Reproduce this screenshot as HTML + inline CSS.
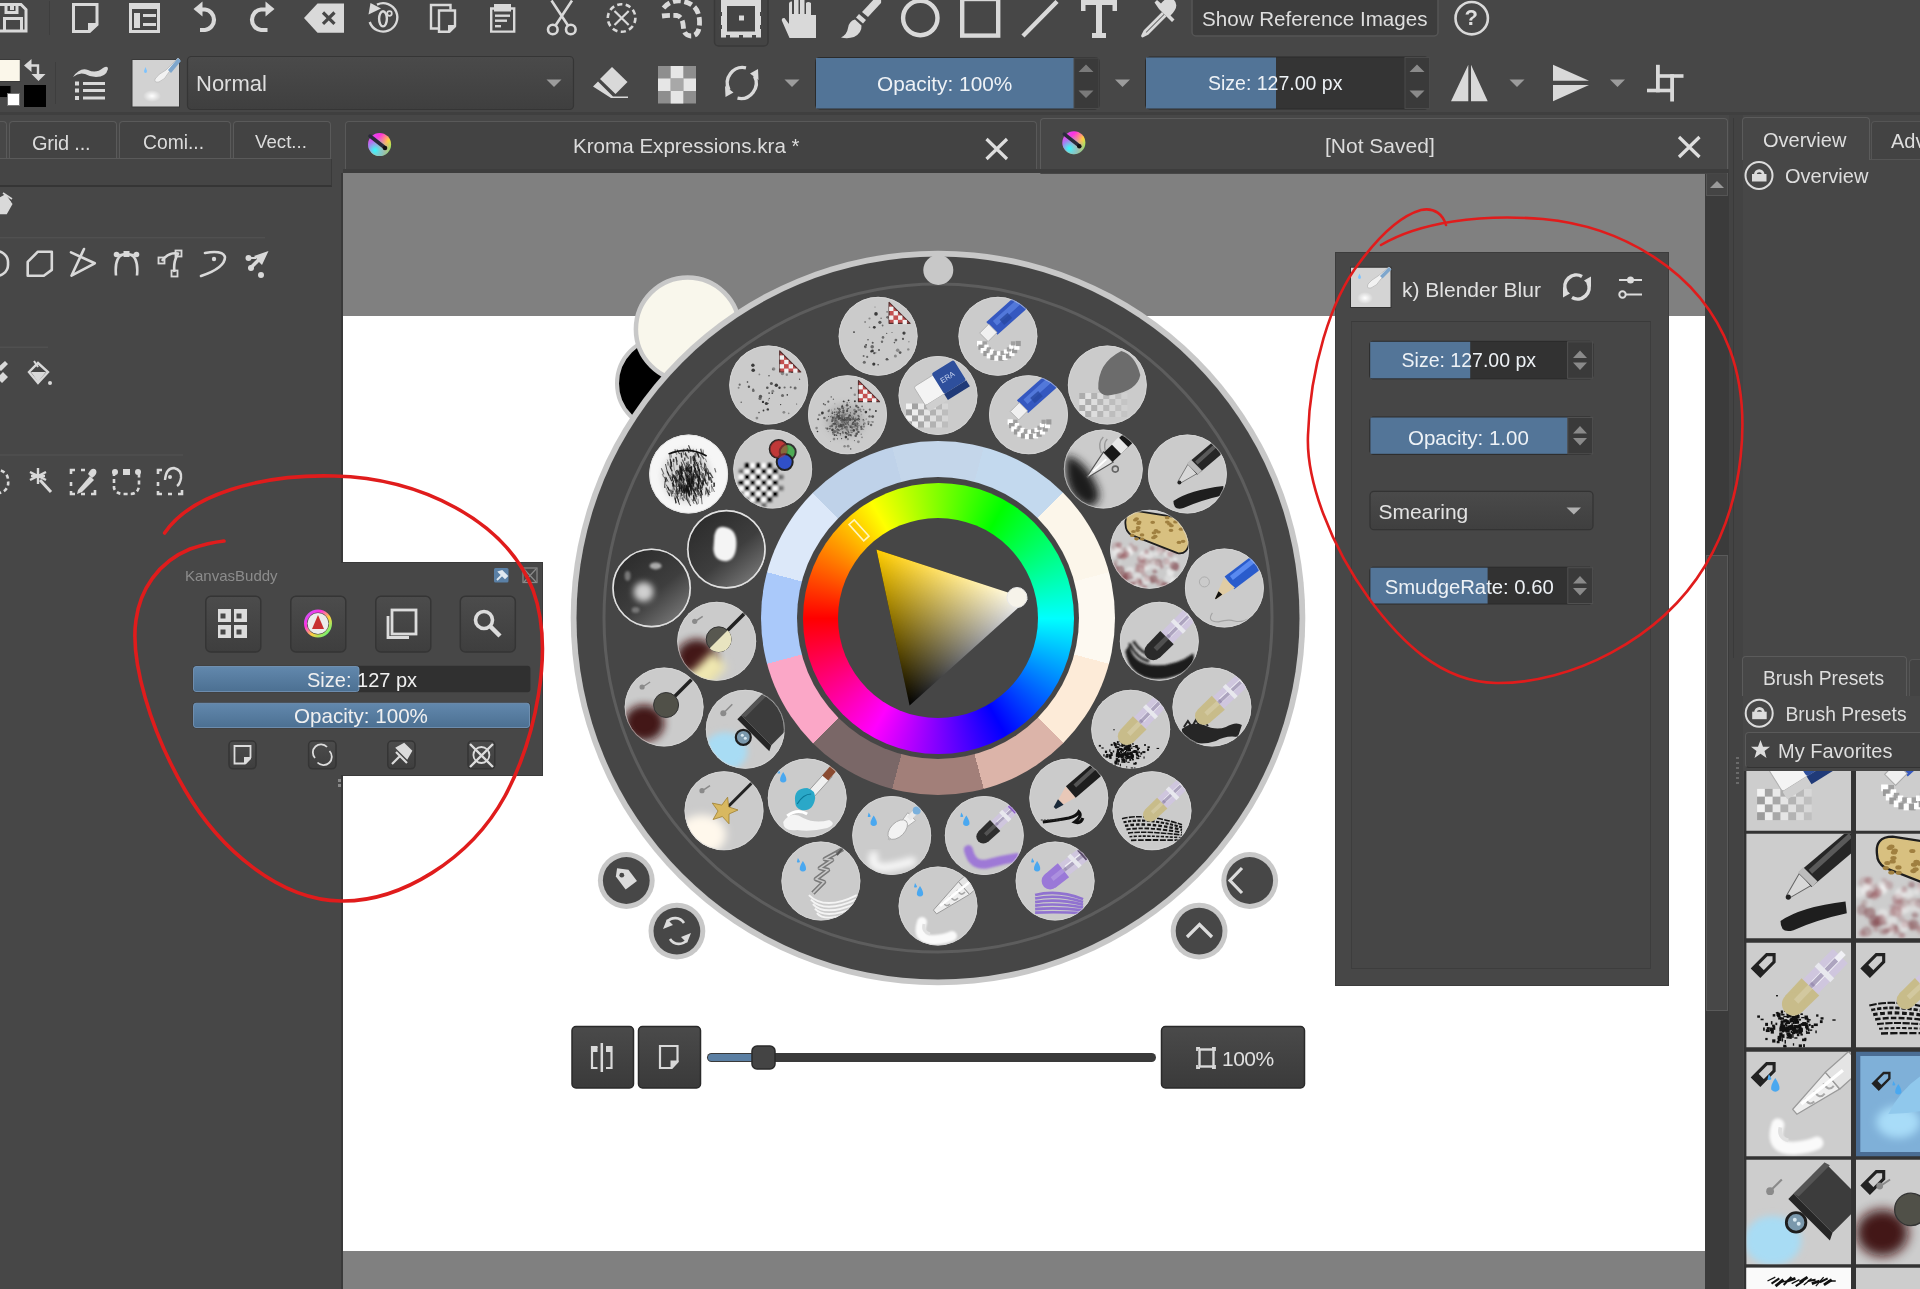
<!DOCTYPE html>
<html><head><meta charset="utf-8">
<style>
html,body{margin:0;padding:0;}
body{width:1920px;height:1289px;overflow:hidden;position:relative;background:#474747;font-family:"Liberation Sans",sans-serif;color:#dcdcdc;}
.a{position:absolute;}
svg{position:absolute;overflow:visible;}
.t{position:absolute;white-space:nowrap;font-size:20px;line-height:1;}
</style></head><body>
<!-- canvas area -->
<div class="a" style="left:343px;top:169px;width:1362px;height:5px;background:#3c3c3c"></div>
<div class="a" style="left:343px;top:173px;width:1362px;height:1116px;background:#808080"></div>
<div class="a" style="left:343px;top:316px;width:1362px;height:935px;background:#ffffff"></div>
<!-- scrollbar -->
<div class="a" style="left:1705px;top:173px;width:24px;height:1116px;background:#3b3b3b"></div>
<div class="a" style="left:1706px;top:173px;width:22px;height:23px;background:#444;border:1px solid #555;box-sizing:border-box"></div><svg class="a" style="left:1706px;top:173px" width="22" height="23"><path d="M4,15 H18 L11,8Z" fill="#9a9a9a"/></svg><div class="a" style="left:341px;top:173px;width:2px;height:1116px;background:#393939"></div>
<div class="a" style="left:1706px;top:555px;width:22px;height:456px;background:#474747;border:1px solid #5a5a5a;box-sizing:border-box"></div>


<!-- ===== TOOLBAR ROW 1 ===== -->
<svg class="a" style="left:0;top:0" width="1920" height="112" viewBox="0 0 1920 112">
<g fill="none" stroke="#d9d9d9" stroke-width="3" stroke-linejoin="miter">
 <!-- save -->
 <path d="M-4,4.5 H21 L26,9.5 V31 H-4"/>
 <path d="M6,4.5 V12.5 H17 V4.5" /><rect x="10" y="6" width="4" height="4" fill="#d9d9d9" stroke="none"/>
 <path d="M4.5,31 V18.5 H21.5 V31"/>
 <!-- new doc -->
 <path d="M73.5,4.5 H97 V24.5 L89.5,31.5 H73.5 Z"/>
</g>
<path d="M97.5,23 L97.5,25 L90,32.5 L88,32.5 L88,23 Z" fill="#d9d9d9"/>
<line x1="49.5" y1="1" x2="49.5" y2="35" stroke="#3e3e3e" stroke-width="1"/>
<g fill="#d9d9d9">
 <!-- template -->
 <path d="M129,3 H160 V33 H129 Z M132,9 V30 H157 V9 Z" fill-rule="evenodd"/>
 <rect x="134" y="13" width="6" height="15"/>
 <rect x="143" y="14" width="13" height="3"/><rect x="143" y="23" width="13" height="3"/>
</g>
<g fill="none" stroke="#d9d9d9" stroke-width="4.2">
 <!-- undo -->
 <path d="M199,9.5 H205 A10,10.3 0 0 1 205,30 H200"/>
 <!-- redo -->
 <path d="M268,9.5 H261 A10,10.3 0 0 0 261,30 H267.5"/>
</g>
<path d="M193.5,9 L202.5,1.5 V16.5 Z" fill="#d9d9d9"/>
<path d="M274.5,9 L265.5,1.5 V16.5 Z" fill="#d9d9d9"/>
<!-- delete -->
<path d="M304,18 L317.5,3.5 H344 V32.8 H317.5 Z" fill="#d9d9d9"/>
<path d="M323,12.5 L334.5,23.8 M334.5,12.5 L323,23.8" stroke="#474747" stroke-width="3.2"/>
<!-- reset rotation -->
<g fill="none" stroke="#d9d9d9" stroke-width="2.4">
 <path d="M377,4.6 A14.2,14.2 0 1 1 369.7,22"/>
 <ellipse cx="383" cy="18.8" rx="3.9" ry="7.6" stroke-width="2.4"/>
 <circle cx="389.5" cy="13.5" r="2.3" stroke-width="1.7"/>
</g>
<path d="M368.5,14.5 L370.5,3 L381,8.5 Z" fill="#d9d9d9"/>
<!-- copy -->
<g fill="none" stroke="#d9d9d9" stroke-width="2.4">
 <path d="M438,28.5 H431 V5 H450.5 V9.5"/>
 <path d="M439,10.5 H455 V26 L449,31.8 H439 Z"/>
</g>
<path d="M455.8,25 V27 L450,32.8 H448 V25 Z" fill="#d9d9d9"/>
<!-- paste -->
<g fill="none" stroke="#d9d9d9" stroke-width="2.4">
 <path d="M494,8.5 H491.2 V31.6 H514.2 V8.5 H511"/>
</g>
<g fill="#d9d9d9">
 <rect x="494" y="4" width="17" height="7.5"/>
 <rect x="495" y="14.5" width="15" height="2.4"/><rect x="495" y="19.5" width="12" height="2.4"/><rect x="495" y="25" width="6" height="2.4"/>
</g>
<!-- cut -->
<g fill="none" stroke="#d9d9d9" stroke-width="2.6">
 <circle cx="552.8" cy="29.5" r="4.8"/><circle cx="570.8" cy="29.5" r="4.8"/>
 <path d="M555.5,25.5 L572,0.5 M568,25.5 L551.5,0.5"/>
</g>
<!-- deselect -->
<g fill="none" stroke="#d9d9d9" stroke-width="2.6">
 <circle cx="621.6" cy="18" r="13.8" stroke-dasharray="5.2 3.4"/>
 <path d="M614.5,11 L628.7,25 M628.7,11 L614.5,25" stroke-width="2.2"/>
</g>
<!-- reselect -->
<g fill="none" stroke="#d9d9d9" stroke-width="4.8">
 <path d="M663.5,8 Q672,-1.5 684,1.5 Q699,5 699.5,21 Q700,36 691,36 Q684,35.5 683.5,28 Q683,17 677,15.5 Q670,15 662,16" stroke-dasharray="8 3.5"/>
</g>
<!-- transform (active) -->
<rect x="714.5" y="-6" width="53.5" height="52" rx="4" fill="#444" stroke="#393939" stroke-width="1.5"/>
<g fill="#d9d9d9">
 <path d="M721,0 H761 V37.5 H721 Z M727,6 V31.5 H755 V6 Z" fill-rule="evenodd"/>
 <rect x="739" y="15.5" width="5" height="5"/>
</g>
<g fill="#474747"><rect x="726" y="35" width="4" height="3"/><rect x="739" y="35" width="4" height="3"/><rect x="752" y="35" width="4" height="3"/><rect x="719" y="12" width="3" height="4"/><rect x="719" y="25" width="3" height="4"/><rect x="760" y="12" width="3" height="4"/><rect x="760" y="25" width="3" height="4"/></g>
<!-- hand -->
<path d="M789.5,38 L782,21 Q781,17.5 784.5,18 L789,24 V3.5 Q789.5,1 792,1.5 V14 H794 V-2 H798.5 V14 H800 V-2 H804.5 V14 H806 V3 Q808,1 811,3 V15 H816 V38 Z" fill="#d9d9d9"/>
<!-- brush -->
<g fill="#d9d9d9">
 <path d="M862,12 L876,-3 Q882,-4 881,3 L868,17 Z"/>
 <path d="M859,14 L866,20 L863,23.5 L856,17.5 Z"/>
 <path d="M855,19.5 L861.5,25.5 Q862,33 854,37 Q848,39 841,37.5 Q847,34.5 848,28 Q849,21 855,19.5 Z"/>
</g>
<!-- ellipse -->
<circle cx="920.3" cy="18" r="17.2" fill="none" stroke="#d9d9d9" stroke-width="4.4"/>
<!-- rect -->
<rect x="962.2" y="-1" width="36" height="36.6" fill="none" stroke="#d9d9d9" stroke-width="4.4"/>
<!-- line -->
<line x1="1024.5" y1="34.5" x2="1055.5" y2="3" stroke="#d9d9d9" stroke-width="4.4" stroke-linecap="square"/>
<!-- text -->
<path d="M1081,-1 H1117 V11 H1112.5 V5 H1102 V33 H1106 V38 H1092 V33 H1096 V5 H1085.5 V11 H1081 Z" fill="#d9d9d9"/>
<!-- eyedropper -->
<g fill="none" stroke="#d9d9d9" stroke-width="2.8" stroke-linejoin="round">
 <path d="M1163,13 L1145,31 L1142.5,36 L1147.5,33.5 L1165.5,15.5"/>
</g>
<path d="M1159,9 L1172,22 L1174.5,19.5 L1170.5,15.5 Q1180,6 1174,0 Q1168,-5 1161,3.5 L1157,0 L1154.5,2.5 Z" fill="#d9d9d9"/>
<!-- show reference images -->
<rect x="1192" y="-5" width="246" height="41" rx="4" fill="#3d3d3d" stroke="#565656" stroke-width="1.5"/>
<!-- help -->
<circle cx="1471.7" cy="18.2" r="16.2" fill="none" stroke="#d9d9d9" stroke-width="2.6"/>
</svg>
<div class="t" style="left:1202px;top:9px;font-size:20.6px;color:#dedede;letter-spacing:0px">Show Reference Images</div>
<div class="t" style="left:1464.5px;top:7px;font-size:22px;font-weight:bold;color:#dedede">?</div>


<!-- ===== TOOLBAR ROW 2 ===== -->
<svg class="a" style="left:0;top:0" width="1920" height="112" viewBox="0 0 1920 112">
 <rect x="-2" y="59.5" width="22.3" height="22" fill="#fbf7ea" stroke="#3a3a3a" stroke-width="1"/>
 <g fill="none" stroke="#d9d9d9" stroke-width="2.4"><path d="M29,65.5 H38 V75"/></g>
 <path d="M24,65.5 L31.5,59 V72 Z M31.5,74 H45.5 L38.5,81 Z" fill="#d9d9d9"/>
 <rect x="-1" y="85.5" width="12" height="12" fill="#000" stroke="#444" stroke-width="1"/>
 <rect x="7.5" y="93.5" width="12" height="12" fill="#fff" stroke="#777" stroke-width="1"/>
 <rect x="24" y="85" width="22" height="22" fill="#000"/>
 <line x1="55.5" y1="62" x2="55.5" y2="104" stroke="#3e3e3e" stroke-width="1"/>
 <path d="M73,77 Q80,67 88,70 Q96,74 103,68 Q108,65 108,69 Q106,77 96,77 Q90,77 85,74 Q79,72 73,77 Z" fill="#d9d9d9"/>
 <g fill="#d9d9d9"><rect x="75" y="81.5" width="4" height="4"/><rect x="75" y="88.5" width="4" height="4"/><rect x="75" y="96" width="4" height="4"/>
 <rect x="83" y="82" width="22" height="3"/><rect x="83" y="89" width="22" height="3"/><rect x="83" y="96.5" width="22" height="3"/></g>
 <!-- preset thumb -->
 <defs>
  <radialGradient id="blob" cx="0.5" cy="0.5" r="0.5"><stop offset="0" stop-color="#fff"/><stop offset="1" stop-color="#fff" stop-opacity="0"/></radialGradient>
  <linearGradient id="cbx" x1="0" y1="0" x2="0" y2="1"><stop offset="0" stop-color="#4a4a4a"/><stop offset="1" stop-color="#3f3f3f"/></linearGradient>
 </defs>
 <rect x="132" y="59.5" width="47.5" height="47.5" fill="#d2d2d2" stroke="#3a3a3a" stroke-width="1"/>
 <ellipse cx="152" cy="96" rx="9" ry="6" fill="url(#blob)"/>
 <path d="M155,79 Q158,74 166,70 L178,58 L180,60 L169,72 Q165,80 159,82 Q154,83 155,79 Z" fill="#f2f2f2" stroke="#b8b8b8" stroke-width="0.8"/>
 <path d="M168,70 L178,58 L181,61 L171,73 Z" fill="#7ea6cc"/>
 <path d="M144,71 L145.5,67 L147,71 Q147,73 145.5,73 Q144,73 144,71Z" fill="#7cc3ff"/>
 <!-- Normal combo -->
 <rect x="187.5" y="56.5" width="386" height="53" rx="4" fill="url(#cbx)" stroke="#353535" stroke-width="1.2"/>
 <path d="M546.5,79.5 H561.5 L554,87 Z" fill="#9c9c9c"/>
 <!-- eraser -->
 <path d="M608,70.5 L596.5,82 L605,90.5 L616.5,79 Z M610.5,68 L623,80.5 L612,91.5 L599.5,79 Z" fill="none"/>
 <path d="M612,67 L627.5,82 L615.5,94 L600,79 Z" fill="#d9d9d9"/>
 <path d="M598,81.5 L613,96.5 H628 V98 H611 L593,86.5 Z" fill="#d9d9d9"/>
 <!-- checker -->
 <g>
  <rect x="658" y="66" width="38" height="37.5" fill="#8e8e8e"/>
  <g fill="#e6e6e6"><rect x="670.7" y="66" width="12.6" height="12.5"/><rect x="658" y="78.5" width="12.7" height="12.5"/><rect x="683.3" y="78.5" width="12.7" height="12.5"/><rect x="670.7" y="91" width="12.6" height="12.5"/></g>
  <g fill="#a8a8a8"><rect x="670.7" y="78.5" width="12.6" height="12.5"/></g>
 </g>
 <!-- refresh -->
 <g fill="none" stroke="#d9d9d9" stroke-width="3.4">
  <path d="M729,90 A15.5,15.5 0 0 1 746,67.8"/>
  <path d="M754.5,76 A15.5,15.5 0 0 1 737.5,98.2"/>
 </g>
 <path d="M725,86 L733.5,92.5 L725.5,97 Z M758.5,80 L750,73.5 L758,69 Z" fill="#d9d9d9"/>
 <path d="M784.5,79.5 H799.5 L792,87 Z" fill="#9c9c9c"/>
 <!-- opacity slider -->
 <rect x="815.5" y="57.5" width="284" height="51.5" rx="4" fill="#333" stroke="#2b2b2b" stroke-width="1"/>
 <rect x="816" y="58" width="258" height="50.5" fill="#527497"/>
 <rect x="1074" y="58" width="25" height="50.5" fill="#3a3a3a" stroke="#4a4a4a" stroke-width="1"/>
 <path d="M1078.5,72 H1093.5 L1086,64.5 Z M1078.5,90.5 H1093.5 L1086,98 Z" fill="#7a7a7a"/>
 <path d="M1115,79.5 H1130 L1122.5,87 Z" fill="#9c9c9c"/>
 <!-- size slider -->
 <rect x="1145.5" y="57" width="284" height="52" rx="4" fill="#343434" stroke="#2b2b2b" stroke-width="1"/>
 <rect x="1146" y="57.5" width="130" height="51" fill="#527497"/>
 <rect x="1405" y="57.5" width="24.5" height="51" fill="#3a3a3a" stroke="#4a4a4a" stroke-width="1"/>
 <path d="M1409.5,72 H1424.5 L1417,64.5 Z M1409.5,90.5 H1424.5 L1417,98 Z" fill="#8a8a8a"/>
 <!-- mirror -->
 <path d="M1451,101.3 L1468.3,64.8 V101.3 Z M1471,64.8 L1487.7,101.3 H1471 Z" fill="#d9d9d9"/>
 <path d="M1509.5,79.5 H1524.5 L1517,87 Z" fill="#9c9c9c"/>
 <path d="M1553,64.8 V80.7 H1589 Z M1553,84.9 H1589 L1553,101.3 Z" fill="#d9d9d9"/>
 <path d="M1610,79.5 H1625 L1617.5,87 Z" fill="#9c9c9c"/>
 <g fill="#d9d9d9"><rect x="1656" y="64.8" width="3.8" height="27.5"/><rect x="1656" y="74.2" width="27.5" height="3.6"/><rect x="1670.2" y="74.2" width="3.8" height="27.3"/><rect x="1647" y="88.7" width="27" height="3.6"/></g>
</svg>
<div class="t" style="left:196px;top:73px;font-size:22px;color:#dedede">Normal</div>
<div class="t" style="left:877px;top:74px;font-size:20.8px;color:#eef2f6">Opacity: 100%</div>
<div class="t" style="left:1208px;top:74px;font-size:19.5px;color:#eef2f6">Size: 127.00 px</div>

<!-- ===== TAB ROW ===== -->
<div class="a" style="left:0;top:112px;width:1920px;height:3px;background:#3f3f3f"></div>
<!-- left docker tabs -->
<div class="a" style="left:-10px;top:121px;width:17px;height:37px;border:1.5px solid #5a5a5a;border-bottom:none;border-radius:4px 4px 0 0;box-sizing:border-box;background:#474747"></div>
<div class="a" style="left:9px;top:121px;width:108px;height:37px;border:1.5px solid #5a5a5a;border-bottom:none;border-radius:4px 4px 0 0;box-sizing:border-box;background:#434343"></div>
<div class="a" style="left:119px;top:121px;width:112px;height:37px;border:1.5px solid #5a5a5a;border-bottom:none;border-radius:4px 4px 0 0;box-sizing:border-box;background:#434343"></div>
<div class="a" style="left:233px;top:121px;width:98px;height:37px;border:1.5px solid #5a5a5a;border-bottom:none;border-radius:4px 4px 0 0;box-sizing:border-box;background:#434343"></div>
<div class="t" style="left:32px;top:133px;font-size:20px;color:#dcdcdc;letter-spacing:-0.2px">Grid ...</div>
<div class="t" style="left:143px;top:133px;font-size:19.3px;color:#dcdcdc">Comi...</div>
<div class="t" style="left:255px;top:133px;font-size:18.7px;color:#dcdcdc">Vect...</div>
<div class="a" style="left:0;top:158px;width:332px;height:29px;background:#454545;border-top:1.5px solid #5a5a5a;border-bottom:2px solid #353535;border-right:1px solid #3a3a3a;box-sizing:border-box"></div>
<!-- document tabs -->
<div class="a" style="left:345px;top:121px;width:692px;height:49px;border:1.5px solid #595959;border-bottom:none;border-radius:4px 4px 0 0;box-sizing:border-box;background:#434343"></div>
<div class="a" style="left:1039.5px;top:117.5px;width:688px;height:56px;border:1.5px solid #5c5c5c;border-bottom:none;border-radius:4px 4px 0 0;box-sizing:border-box;background:#474747"></div>
<div class="a" style="left:343px;top:169px;width:1386px;height:4px;background:#3d3d3d"></div>
<div class="t" style="left:573px;top:136px;font-size:20.6px;color:#dcdcdc">Kroma Expressions.kra *</div>
<div class="t" style="left:1325px;top:135px;font-size:21px;color:#dcdcdc">[Not Saved]</div>
<svg class="a" style="left:0;top:0" width="1920" height="200" viewBox="0 0 1920 200">
 <defs>
  <linearGradient id="kri" x1="0" y1="0" x2="1" y2="1"><stop offset="0" stop-color="#c060ff"/><stop offset="0.3" stop-color="#ff30e0"/><stop offset="0.6" stop-color="#ffd040"/><stop offset="1" stop-color="#40ff80"/></linearGradient>
  <radialGradient id="kri2" cx="0.3" cy="0.75" r="0.7"><stop offset="0" stop-color="#30ffff"/><stop offset="0.5" stop-color="#70b0ff" stop-opacity="0.6"/><stop offset="1" stop-color="#ff40e0" stop-opacity="0"/></radialGradient>
 </defs>
 <g id="krita-ico">
  <circle cx="379.6" cy="144.5" r="11.5" fill="url(#kri)"/>
  <circle cx="379.6" cy="144.5" r="11.5" fill="url(#kri2)"/>
  <path d="M370,136 L384,147" stroke="#2a2a3a" stroke-width="3.5" stroke-linecap="round"/>
  <circle cx="385" cy="148" r="2.3" fill="#111"/>
 </g>
 <use href="#krita-ico" transform="translate(694.3,-1.8)"/>
 <path d="M986.5,139 L1007,159 M1007,139 L986.5,159" stroke="#dedede" stroke-width="3.2"/>
 <path d="M1679,137 L1699.5,157 M1699.5,137 L1679,157" stroke="#dedede" stroke-width="3.2"/>
</svg>


<!-- ===== PIE WHEEL ===== -->
<svg class="a" style="left:0;top:0" width="1920" height="1289" viewBox="0 0 1920 1289">
 <circle cx="663" cy="383.5" r="46" fill="#000" stroke="#c8c8c8" stroke-width="4"/>
 <circle cx="687.7" cy="329.2" r="51.8" fill="#f9f7ec" stroke="#c8c8c8" stroke-width="4.5"/>
 <circle cx="938" cy="618" r="367.3" fill="#c8c8c8"/>
 <circle cx="938" cy="618" r="361.5" fill="#464646"/>
 <circle cx="938" cy="618" r="334" fill="none" stroke="#5d5d5d" stroke-width="3"/>
 <circle cx="938.3" cy="270" r="15" fill="#c8c8c8"/>
</svg>
<div class="a" style="left:761px;top:441px;width:354px;height:354px;border-radius:50%;background:conic-gradient(from -15deg,#c4d6ea 0deg 30deg,#c3d9ee 30deg 60deg,#fcf6ea 60deg 90deg,#fdf9f1 90deg 120deg,#fdebd8 120deg 150deg,#dcb4a9 150deg 180deg,#a27f79 180deg 210deg,#7a6767 210deg 240deg,#fba7c7 240deg 270deg,#aac9fa 270deg 300deg,#dce8f9 300deg 330deg,#bfd2e9 330deg 360deg)"></div>
<div class="a" style="left:797px;top:477px;width:282px;height:282px;border-radius:50%;background:#464646"></div>
<div class="a" style="left:802.5px;top:482.5px;width:271px;height:271px;border-radius:50%;background:conic-gradient(from 270deg, #ff0000, #ffff00 60deg, #00ff00 120deg, #00ffff 180deg, #0000ff 240deg, #ff00ff 300deg, #ff0000 360deg)"></div>
<div class="a" style="left:838px;top:518px;width:200px;height:200px;border-radius:50%;background:#464646"></div>
<svg class="a" style="left:0;top:0" width="1920" height="1289" viewBox="0 0 1920 1289">
 <defs>
  <linearGradient id="trH" gradientUnits="userSpaceOnUse" x1="876.4" y1="549.6" x2="968.8" y2="652.2"><stop offset="0" stop-color="#ffcc00"/><stop offset="1" stop-color="#ffcc00" stop-opacity="0"/></linearGradient>
  <linearGradient id="trW" gradientUnits="userSpaceOnUse" x1="1028.0" y1="598.9" x2="893.0" y2="627.6"><stop offset="0" stop-color="#ffffff"/><stop offset="1" stop-color="#ffffff" stop-opacity="0"/></linearGradient>
 </defs>
 <path d="M876.4,549.6 L1028.0,598.9 L909.6,705.5 Z" fill="#000"/>
 <path d="M876.4,549.6 L1028.0,598.9 L909.6,705.5 Z" fill="url(#trH)"/>
 <path d="M876.4,549.6 L1028.0,598.9 L909.6,705.5 Z" fill="url(#trW)" style="mix-blend-mode:plus-lighter"/>
 <circle cx="1017" cy="597.5" r="10" fill="#f6f3ea" stroke="#e8e8e8" stroke-width="1"/>
 <rect x="855.5" y="519.3" width="7" height="22" fill="none" stroke="#fff6c0" stroke-width="1.6" transform="rotate(-42 859.0 530.3)"/>
<circle cx="997.9" cy="336.3" r="39.5" fill="#cbcbcb"/>
<circle cx="1107.3" cy="385.0" r="39.5" fill="#cbcbcb"/>
<circle cx="1187.4" cy="474.0" r="39.5" fill="#cbcbcb"/>
<circle cx="1224.4" cy="587.9" r="39.5" fill="#cbcbcb"/>
<circle cx="1211.9" cy="707.0" r="39.5" fill="#cbcbcb"/>
<circle cx="1152.0" cy="810.7" r="39.5" fill="#cbcbcb"/>
<circle cx="1055.1" cy="881.1" r="39.5" fill="#cbcbcb"/>
<circle cx="938.0" cy="906.0" r="39.5" fill="#cbcbcb"/>
<circle cx="820.9" cy="881.1" r="39.5" fill="#cbcbcb"/>
<circle cx="724.0" cy="810.7" r="39.5" fill="#cbcbcb"/>
<circle cx="664.1" cy="707.0" r="39.5" fill="#cbcbcb"/>
<circle cx="651.6" cy="587.9" r="39.5" fill="#cbcbcb"/>
<circle cx="688.6" cy="474.0" r="39.5" fill="#cbcbcb"/>
<circle cx="768.7" cy="385.0" r="39.5" fill="#cbcbcb"/>
<circle cx="878.1" cy="336.3" r="39.5" fill="#cbcbcb"/>
<circle cx="938.0" cy="395.5" r="39.5" fill="#cbcbcb"/>
<circle cx="1028.5" cy="414.7" r="39.5" fill="#cbcbcb"/>
<circle cx="1103.3" cy="469.1" r="39.5" fill="#cbcbcb"/>
<circle cx="1149.6" cy="549.2" r="39.5" fill="#cbcbcb"/>
<circle cx="1159.3" cy="641.3" r="39.5" fill="#cbcbcb"/>
<circle cx="1130.7" cy="729.2" r="39.5" fill="#cbcbcb"/>
<circle cx="1068.8" cy="798.0" r="39.5" fill="#cbcbcb"/>
<circle cx="984.3" cy="835.6" r="39.5" fill="#cbcbcb"/>
<circle cx="891.7" cy="835.6" r="39.5" fill="#cbcbcb"/>
<circle cx="807.2" cy="798.0" r="39.5" fill="#cbcbcb"/>
<circle cx="745.3" cy="729.3" r="39.5" fill="#cbcbcb"/>
<circle cx="716.7" cy="641.3" r="39.5" fill="#cbcbcb"/>
<circle cx="726.4" cy="549.2" r="39.5" fill="#cbcbcb"/>
<circle cx="772.7" cy="469.1" r="39.5" fill="#cbcbcb"/>
<circle cx="847.5" cy="414.7" r="39.5" fill="#cbcbcb"/>
<circle cx="626.3" cy="880.5" r="28.4" fill="#c8c8c8"/><circle cx="626.3" cy="880.5" r="23.4" fill="#474747"/>
<circle cx="676.9" cy="931.1" r="28.4" fill="#c8c8c8"/><circle cx="676.9" cy="931.1" r="23.4" fill="#474747"/>
<circle cx="1249.7" cy="880.5" r="28.4" fill="#c8c8c8"/><circle cx="1249.7" cy="880.5" r="23.4" fill="#474747"/>
<circle cx="1199.1" cy="931.1" r="28.4" fill="#c8c8c8"/><circle cx="1199.1" cy="931.1" r="23.4" fill="#474747"/>
</svg>

<!--ICONS-->
<svg class="a" style="left:0;top:0" width="1920" height="1289" viewBox="0 0 1920 1289">
<defs><clipPath id="cc"><circle r="39.5"/></clipPath><filter id="blur1" x="-50%" y="-50%" width="200%" height="200%"><feGaussianBlur stdDeviation="1.2"/></filter><filter id="blur2" x="-50%" y="-50%" width="200%" height="200%"><feGaussianBlur stdDeviation="3"/></filter><filter id="blur3" x="-50%" y="-50%" width="200%" height="200%"><feGaussianBlur stdDeviation="4.5"/></filter><linearGradient id="darkbg" x1="0.15" y1="0.1" x2="0.85" y2="0.95"><stop offset="0" stop-color="#2c2c2c"/><stop offset="0.55" stop-color="#3e3e3e"/><stop offset="1" stop-color="#7a7a7a"/></linearGradient></defs>
<g transform="translate(997.9,336.3)" clip-path="url(#cc)"><circle r="39.5" fill="#cbcbcb"/><rect x="-20.9" y="4.6" width="5.2" height="5.2" fill="#ffffff"/><rect x="-19.5" y="8.3" width="5.2" height="5.2" fill="#9a9a9a"/><rect x="-17.3" y="11.7" width="5.2" height="5.2" fill="#ffffff"/><rect x="-14.6" y="14.6" width="5.2" height="5.2" fill="#9a9a9a"/><rect x="-11.2" y="16.9" width="5.2" height="5.2" fill="#ffffff"/><rect x="-7.6" y="18.5" width="5.2" height="5.2" fill="#9a9a9a"/><rect x="-3.6" y="19.3" width="5.2" height="5.2" fill="#ffffff"/><rect x="0.4" y="19.3" width="5.2" height="5.2" fill="#9a9a9a"/><rect x="4.4" y="18.5" width="5.2" height="5.2" fill="#ffffff"/><rect x="8.0" y="16.9" width="5.2" height="5.2" fill="#9a9a9a"/><rect x="11.4" y="14.6" width="5.2" height="5.2" fill="#ffffff"/><rect x="14.1" y="11.7" width="5.2" height="5.2" fill="#9a9a9a"/><rect x="16.3" y="8.3" width="5.2" height="5.2" fill="#ffffff"/><rect x="17.7" y="4.6" width="5.2" height="5.2" fill="#9a9a9a"/><rect x="-15.2" y="5.0" width="4.2" height="4.2" fill="#a0a0a0"/><rect x="-13.5" y="8.3" width="4.2" height="4.2" fill="#ffffff"/><rect x="-11.1" y="11.0" width="4.2" height="4.2" fill="#a0a0a0"/><rect x="-8.1" y="13.1" width="4.2" height="4.2" fill="#ffffff"/><rect x="-4.7" y="14.5" width="4.2" height="4.2" fill="#a0a0a0"/><rect x="-1.1" y="14.9" width="4.2" height="4.2" fill="#ffffff"/><rect x="2.5" y="14.5" width="4.2" height="4.2" fill="#a0a0a0"/><rect x="5.9" y="13.1" width="4.2" height="4.2" fill="#ffffff"/><rect x="8.9" y="11.0" width="4.2" height="4.2" fill="#a0a0a0"/><rect x="11.3" y="8.3" width="4.2" height="4.2" fill="#ffffff"/><rect x="13.0" y="5.0" width="4.2" height="4.2" fill="#a0a0a0"/><path d="M-0.4,-1.6 L35.6,-33.6 L24.4,-46.4 L-11.6,-14.4Z" fill="#3558c0"/><path d="M-1.0,-10.8 L30.0,-38.8 L26.0,-43.2 L-5.0,-15.2Z" fill="#5f86e6" opacity="0.7"/><path d="M6.3,-11.4 L14.3,-18.4 L9.7,-23.6 L1.7,-16.6Z" fill="#2848a0" opacity="0.8"/><path d="M-9.8,5.2 L-0.8,-3.8 L-9.2,-12.2 L-18.2,-3.2Z" fill="#f0f0f0" stroke="#a8a8a8" stroke-width="0.8"/><circle r="39" fill="none" stroke="#d8d8d8" stroke-width="1" opacity="0.6"/></g>
<g transform="translate(1107.3,385.0)" clip-path="url(#cc)"><circle r="39.5" fill="#cbcbcb"/><rect x="-28" y="8" width="6" height="6" fill="#a8a8a8" opacity="0.9"/><rect x="-28" y="14" width="6" height="6" fill="#e6e6e6" opacity="0.9"/><rect x="-28" y="20" width="6" height="6" fill="#a8a8a8" opacity="0.9"/><rect x="-28" y="26" width="6" height="6" fill="#e6e6e6" opacity="0.9"/><rect x="-22" y="8" width="6" height="6" fill="#e6e6e6" opacity="0.8"/><rect x="-22" y="14" width="6" height="6" fill="#a8a8a8" opacity="0.8"/><rect x="-22" y="20" width="6" height="6" fill="#e6e6e6" opacity="0.8"/><rect x="-22" y="26" width="6" height="6" fill="#a8a8a8" opacity="0.8"/><rect x="-16" y="8" width="6" height="6" fill="#a8a8a8" opacity="0.7"/><rect x="-16" y="14" width="6" height="6" fill="#e6e6e6" opacity="0.7"/><rect x="-16" y="20" width="6" height="6" fill="#a8a8a8" opacity="0.7"/><rect x="-16" y="26" width="6" height="6" fill="#e6e6e6" opacity="0.7"/><rect x="-10" y="8" width="6" height="6" fill="#e6e6e6" opacity="0.6"/><rect x="-10" y="14" width="6" height="6" fill="#a8a8a8" opacity="0.6"/><rect x="-10" y="20" width="6" height="6" fill="#e6e6e6" opacity="0.6"/><rect x="-10" y="26" width="6" height="6" fill="#a8a8a8" opacity="0.6"/><rect x="-4" y="8" width="6" height="6" fill="#a8a8a8" opacity="0.5"/><rect x="-4" y="14" width="6" height="6" fill="#e6e6e6" opacity="0.5"/><rect x="-4" y="20" width="6" height="6" fill="#a8a8a8" opacity="0.5"/><rect x="-4" y="26" width="6" height="6" fill="#e6e6e6" opacity="0.5"/><rect x="2" y="8" width="6" height="6" fill="#e6e6e6" opacity="0.4"/><rect x="2" y="14" width="6" height="6" fill="#a8a8a8" opacity="0.4"/><rect x="2" y="20" width="6" height="6" fill="#e6e6e6" opacity="0.4"/><rect x="2" y="26" width="6" height="6" fill="#a8a8a8" opacity="0.4"/><rect x="8" y="8" width="6" height="6" fill="#a8a8a8" opacity="0.29999999999999993"/><rect x="8" y="14" width="6" height="6" fill="#e6e6e6" opacity="0.29999999999999993"/><rect x="8" y="20" width="6" height="6" fill="#a8a8a8" opacity="0.29999999999999993"/><rect x="8" y="26" width="6" height="6" fill="#e6e6e6" opacity="0.29999999999999993"/><rect x="14" y="8" width="6" height="6" fill="#e6e6e6" opacity="0.19999999999999996"/><rect x="14" y="14" width="6" height="6" fill="#a8a8a8" opacity="0.19999999999999996"/><rect x="14" y="20" width="6" height="6" fill="#e6e6e6" opacity="0.19999999999999996"/><rect x="14" y="26" width="6" height="6" fill="#a8a8a8" opacity="0.19999999999999996"/><path d="M-9,4 Q-10,-22 14,-34 Q28,-30 33,-10 Q30,6 4,10 Q-6,12 -9,4Z" fill="#6c6c6c"/><circle r="39" fill="none" stroke="#d8d8d8" stroke-width="1" opacity="0.6"/></g>
<g transform="translate(1187.4,474.0)" clip-path="url(#cc)"><circle r="39.5" fill="#cbcbcb"/><path d="M-14,27 Q2,16 36,12 L37,21 Q14,26 -4,34 Q-14,37 -14,27Z" fill="#1e1e1e"/><path d="M-6.9,9.1 L9.6,-0.4 L0.4,-9.6 L-9.1,6.9Z" fill="#d8d8d8" stroke="#666" stroke-width="0.8"/><path d="M9.8,0.7 L48.8,-32.3 L39.2,-43.7 L0.2,-10.7Z" fill="#262626"/><path d="M10.3,-9.5 L41.3,-37.5 L38.7,-40.5 L7.7,-12.5Z" fill="#5a5a5a"/><path d="M10.5,0.5 L14.5,-3.5 L3.5,-14.5 L-0.5,-10.5Z" fill="#bcbcbc"/><circle cx="-8" cy="8.5" r="2" fill="#222"/><circle r="39" fill="none" stroke="#d8d8d8" stroke-width="1" opacity="0.6"/></g>
<g transform="translate(1224.4,587.9)" clip-path="url(#cc)"><circle r="39.5" fill="#cbcbcb"/><path d="M-12,25 Q-18,34 -6,34 Q4,31 10,33 Q16,35 24,31" fill="none" stroke="#a4a4a4" stroke-width="1.1"/><circle cx="-20" cy="-6" r="5" fill="none" stroke="#aaa" stroke-width="0.9"/><path d="M9.8,1.4 L46.8,-26.6 L37.2,-39.4 L0.2,-11.4Z" fill="#2a5ccc"/><path d="M8.5,-8.0 L41.5,-34.0 L38.5,-38.0 L5.5,-12.0Z" fill="#5a8af0"/><path d="M-8.6,11.3 L10.6,-0.1 L-0.6,-9.9 L-9.4,10.7Z" fill="#e0cca4"/><path d="M-8.6,11.3 L-2.1,6.6 L-5.9,3.4 L-9.4,10.7Z" fill="#111"/><circle r="39" fill="none" stroke="#d8d8d8" stroke-width="1" opacity="0.6"/></g>
<g transform="translate(1211.9,707.0)" clip-path="url(#cc)"><circle r="39.5" fill="#cbcbcb"/><path d="M-30,22 Q-20,14 -8,18 Q4,24 14,20 Q24,14 30,18 L26,30 Q14,28 4,34 Q-14,40 -30,32Z" fill="#262626"/><path d="M-28,20 L-24,14 L-20,20 L-16,13 L-12,19 L-8,13 L-4,19" fill="none" stroke="#262626" stroke-width="2"/><path d="M11.8,1.6 L37.4,-22.1 L26.6,-33.9 L1.0,-10.2Z" fill="#cfc6de"/><path d="M10.5,-5.1 L36.1,-28.7 L32.9,-32.3 L7.3,-8.6Z" fill="#f6f6fa" opacity="0.85"/><path d="M4.6,-0.0 L30.2,-23.7 L27.8,-26.3 L2.2,-2.6Z" fill="#6a5a88" opacity="0.5"/><path d="M22.8,-7.9 L25.8,-10.9 L13.8,-23.0 L10.8,-20.0Z" fill="#e8e8ee"/><path d="M-1.9,15.6 L12.9,2.7 L-0.1,-11.3 L-14.1,2.4Z" fill="#c8bc8a"/><circle cx="-8.0" cy="9.0" r="8.9" fill="#c8bc8a"/><path d="M-4.4,8.7 L9.0,-3.6 L5.8,-7.1 L-7.6,5.3Z" fill="#fff" opacity="0.18"/><circle r="39" fill="none" stroke="#d8d8d8" stroke-width="1" opacity="0.6"/></g>
<g transform="translate(1152.0,810.7)" clip-path="url(#cc)"><circle r="39.5" fill="#cbcbcb"/><path d="M-30.0,8.0 Q-6,2.0 30,14.0" fill="none" stroke="#151515" stroke-width="1.6" stroke-dasharray="5.9 1.2"/><path d="M-28.5,11.6 Q-6,6.5 30,16.6" fill="none" stroke="#151515" stroke-width="2.1" stroke-dasharray="3.3 1.4"/><path d="M-27.0,15.2 Q-6,11.0 30,19.2" fill="none" stroke="#151515" stroke-width="2.4" stroke-dasharray="3.6 2.0"/><path d="M-25.5,18.8 Q-6,15.5 30,21.8" fill="none" stroke="#151515" stroke-width="1.9" stroke-dasharray="4.4 1.7"/><path d="M-24.0,22.4 Q-6,20.0 30,24.4" fill="none" stroke="#151515" stroke-width="1.6" stroke-dasharray="5.5 1.1"/><path d="M-22.5,26.0 Q-6,24.5 30,27.0" fill="none" stroke="#151515" stroke-width="1.6" stroke-dasharray="3.1 1.4"/><path d="M-21.0,29.6 Q-6,29.0 30,29.6" fill="none" stroke="#151515" stroke-width="1.8" stroke-dasharray="5.7 1.6"/><path d="M15.0,-2.4 L36.8,-22.9 L27.2,-33.1 L5.4,-12.6Z" fill="#cfc6de"/><path d="M14.2,-8.5 L35.9,-29.0 L33.1,-32.0 L11.3,-11.5Z" fill="#f6f6fa" opacity="0.85"/><path d="M8.3,-3.4 L30.1,-23.9 L27.9,-26.1 L6.2,-5.6Z" fill="#6a5a88" opacity="0.5"/><path d="M24.4,-10.5 L27.4,-13.5 L16.8,-24.1 L13.8,-21.1Z" fill="#e8e8ee"/><path d="M2.9,9.2 L15.4,-2.1 L5.1,-13.0 L-6.9,-1.2Z" fill="#c8bc8a"/><circle cx="-2.0" cy="4.0" r="7.0" fill="#c8bc8a"/><path d="M1.3,3.4 L12.5,-7.2 L10.0,-9.9 L-1.3,0.6Z" fill="#fff" opacity="0.18"/><circle r="39" fill="none" stroke="#d8d8d8" stroke-width="1" opacity="0.6"/></g>
<g transform="translate(1055.1,881.1)" clip-path="url(#cc)"><circle r="39.5" fill="#cbcbcb"/><path d="M-20,14.0 Q2,8.0 28,18.0" fill="none" stroke="#8a68d0" stroke-width="2.6" opacity="0.9"/><path d="M-20,17.5 Q2,12.5 28,20.8" fill="none" stroke="#8a68d0" stroke-width="2.6" opacity="0.9"/><path d="M-20,21.0 Q2,17.0 28,23.6" fill="none" stroke="#8a68d0" stroke-width="2.6" opacity="0.9"/><path d="M-20,24.5 Q2,21.5 28,26.4" fill="none" stroke="#8a68d0" stroke-width="2.6" opacity="0.9"/><path d="M-20,28.0 Q2,26.0 28,29.2" fill="none" stroke="#8a68d0" stroke-width="2.6" opacity="0.9"/><path d="M-20,31.5 Q2,30.5 28,32.0" fill="none" stroke="#8a68d0" stroke-width="2.6" opacity="0.9"/><path d="M13.0,-5.0 L36.7,-24.2 L27.3,-35.8 L3.6,-16.6Z" fill="#cfc6de"/><path d="M12.2,-11.6 L35.9,-30.8 L33.1,-34.2 L9.4,-15.0Z" fill="#f6f6fa" opacity="0.85"/><path d="M6.4,-6.5 L30.0,-25.7 L28.0,-28.3 L4.3,-9.1Z" fill="#6a5a88" opacity="0.5"/><path d="M23.6,-12.9 L26.6,-15.9 L15.3,-27.3 L12.3,-24.3Z" fill="#e8e8ee"/><path d="M30.8,-20.7 L42.4,-31.2 L33.6,-40.8 L22.1,-30.3Z" fill="#5a4a6a"/><path d="M0.4,6.6 L14.0,-3.8 L2.7,-17.8 L-10.4,-6.6Z" fill="#9a78d8"/><circle cx="-5.0" cy="0.0" r="8.5" fill="#9a78d8"/><path d="M-1.6,-0.2 L10.7,-10.0 L7.9,-13.6 L-4.4,-3.8Z" fill="#fff" opacity="0.18"/><path d="M-18,-20 Q-14,-14 -15,-11 Q-18,-8 -21,-11 Q-22,-14 -18,-20Z" fill="#4aa8f0"/><path d="M-23,-23 Q-21,-20 -21,-19 Q-23,-18 -24,-19Z" fill="#4aa8f0"/><circle r="39" fill="none" stroke="#d8d8d8" stroke-width="1" opacity="0.6"/></g>
<g transform="translate(938.0,906.0)" clip-path="url(#cc)"><circle r="39.5" fill="#cbcbcb"/><path d="M-16,16 Q-22,34 -4,34 Q8,33 14,30" fill="none" stroke="#ffffff" stroke-width="10" stroke-linecap="round" opacity="0.9" filter="url(#blur1)"/><path d="M-14,18 Q-16,26 -8,28" fill="none" stroke="#e0e0e0" stroke-width="3"/><path d="M-1.4,7.9 L31.4,-11.5 L20.6,-24.5 L-4.6,4.1Z" fill="#eeeeee" stroke="#9a9a9a" stroke-width="1"/><path d="M31.6,-11.6 L49.6,-27.6 L38.4,-40.4 L20.4,-24.4Z" fill="#e4e4e4" stroke="#9a9a9a" stroke-width="1"/><path d="M5,-4 Q8,2 12,-2 M12,-10 Q16,-3 20,-8 M19,-16 Q23,-9 27,-14" fill="none" stroke="#a8a8a8" stroke-width="1.6"/><path d="M2.8,1.0 L34.8,-25.0 L33.2,-27.0 L1.2,-1.0Z" fill="#fff"/><path d="M-18,-20 Q-14,-14 -15,-11 Q-18,-8 -21,-11 Q-22,-14 -18,-20Z" fill="#4aa8f0"/><path d="M-23,-23 Q-21,-20 -21,-19 Q-23,-18 -24,-19Z" fill="#4aa8f0"/><circle r="39" fill="none" stroke="#d8d8d8" stroke-width="1" opacity="0.6"/></g>
<g transform="translate(820.9,881.1)" clip-path="url(#cc)"><circle r="39.5" fill="#cbcbcb"/><path d="M-12,14.0 Q4,30 36,14" fill="none" stroke="#f4f4f4" stroke-width="2"/><path d="M-10,18.5 Q4,33 36,18" fill="none" stroke="#f4f4f4" stroke-width="2"/><path d="M-8,23.0 Q4,36 36,22" fill="none" stroke="#f4f4f4" stroke-width="2"/><path d="M-6,27.5 Q4,39 36,26" fill="none" stroke="#f4f4f4" stroke-width="2"/><path d="M-4,32.0 Q4,42 36,30" fill="none" stroke="#f4f4f4" stroke-width="2"/><path d="M-8,12 L3,1 L-5,-2 L7,-11 L-1,-13 L11,-21 L4,-22 L15,-28 L22,-32" fill="none" stroke="#7a7a7a" stroke-width="4.6" stroke-linejoin="round"/><path d="M-8,12 L3,1 L-5,-2 L7,-11 L-1,-13 L11,-21 L4,-22 L15,-28" fill="none" stroke="#c8c8c8" stroke-width="1.5"/><line x1="16" y1="-26" x2="24" y2="-36" stroke="#555" stroke-width="2"/><path d="M-18,-20 Q-14,-14 -15,-11 Q-18,-8 -21,-11 Q-22,-14 -18,-20Z" fill="#4aa8f0"/><path d="M-23,-23 Q-21,-20 -21,-19 Q-23,-18 -24,-19Z" fill="#4aa8f0"/><circle r="39" fill="none" stroke="#d8d8d8" stroke-width="1" opacity="0.6"/></g>
<g transform="translate(724.0,810.7)" clip-path="url(#cc)"><circle r="39.5" fill="#cbcbcb"/><ellipse cx="-22" cy="24" rx="24" ry="20" fill="#fff8ec" filter="url(#blur3)"/><line x1="4" y1="-4" x2="30" y2="-30" stroke="#222" stroke-width="3"/><path d="M3.6,-13.5 L4.7,-3.8 L14.0,-0.7 L5.0,3.3 L5.0,13.1 L-1.6,5.8 L-10.9,8.8 L-6.0,0.3 L-11.7,-7.6 L-2.2,-5.6Z" fill="#d8b860" stroke="#a08030" stroke-width="0.8"/><circle cx="-22" cy="-20" r="2.6" fill="#8a8a8a"/><line x1="-20" y1="-21" x2="-14" y2="-25" stroke="#8a8a8a" stroke-width="1.5"/><circle r="39" fill="none" stroke="#d8d8d8" stroke-width="1" opacity="0.6"/></g>
<g transform="translate(664.1,707.0)" clip-path="url(#cc)"><circle r="39.5" fill="#cbcbcb"/><ellipse cx="-20" cy="16" rx="20" ry="18" fill="#3a0808" opacity="0.95" filter="url(#blur3)"/><line x1="8" y1="-8" x2="30" y2="-30" stroke="#222" stroke-width="3.5"/><circle cx="2" cy="-2" r="12.5" fill="#505048" stroke="#333" stroke-width="1"/><circle cx="-22" cy="-20" r="2.6" fill="#8a8a8a"/><line x1="-20" y1="-21" x2="-14" y2="-25" stroke="#8a8a8a" stroke-width="1.5"/><circle r="39" fill="none" stroke="#d8d8d8" stroke-width="1" opacity="0.6"/></g>
<g transform="translate(651.6,587.9)" clip-path="url(#cc)"><circle r="39.5" fill="#cbcbcb"/><circle r="39.5" fill="url(#darkbg)"/><ellipse cx="-8" cy="4" rx="10" ry="10" fill="#d0d0d0" filter="url(#blur2)"/><ellipse cx="4" cy="-22" rx="6" ry="3.5" fill="#aaa" filter="url(#blur1)"/><ellipse cx="-24" cy="-12" rx="3" ry="5" fill="#777" filter="url(#blur1)"/><ellipse cx="-16" cy="22" rx="4" ry="3" fill="#777" filter="url(#blur1)"/><circle r="38.6" fill="none" stroke="#e6e6e6" stroke-width="1.6"/><circle r="39" fill="none" stroke="#d8d8d8" stroke-width="1" opacity="0.6"/></g>
<g transform="translate(688.6,474.0)" clip-path="url(#cc)"><circle r="39.5" fill="#cbcbcb"/><circle r="39.5" fill="#f6f6f6"/><ellipse cx="-2" cy="2" rx="24" ry="26" fill="#9a9a9a" opacity="0.35" filter="url(#blur2)"/><line x1="-4.1" y1="8.6" x2="-0.4" y2="14.5" stroke="#151515" stroke-width="1.1" opacity="0.58"/><line x1="12.3" y1="7.5" x2="13.2" y2="10.6" stroke="#151515" stroke-width="0.7" opacity="0.45"/><line x1="-21.0" y1="13.1" x2="-19.4" y2="16.5" stroke="#151515" stroke-width="1.2" opacity="0.87"/><line x1="-11.7" y1="-4.1" x2="-6.9" y2="3.4" stroke="#151515" stroke-width="1.4" opacity="0.54"/><line x1="2.7" y1="7.1" x2="2.6" y2="12.0" stroke="#151515" stroke-width="0.8" opacity="0.69"/><line x1="-8.4" y1="-7.6" x2="-5.1" y2="-2.3" stroke="#151515" stroke-width="0.7" opacity="0.50"/><line x1="-6.4" y1="-10.4" x2="-5.6" y2="-5.6" stroke="#151515" stroke-width="1.0" opacity="0.55"/><line x1="4.1" y1="-17.4" x2="4.8" y2="-13.0" stroke="#151515" stroke-width="1.1" opacity="0.84"/><line x1="-2.3" y1="-8.6" x2="2.1" y2="-0.9" stroke="#151515" stroke-width="1.0" opacity="0.78"/><line x1="7.0" y1="14.3" x2="7.3" y2="17.5" stroke="#151515" stroke-width="1.3" opacity="0.69"/><line x1="6.4" y1="-6.0" x2="7.4" y2="1.1" stroke="#151515" stroke-width="1.1" opacity="0.63"/><line x1="14.5" y1="-24.4" x2="15.0" y2="-18.6" stroke="#151515" stroke-width="0.7" opacity="0.75"/><line x1="3.3" y1="-7.6" x2="3.7" y2="-2.3" stroke="#151515" stroke-width="0.6" opacity="0.63"/><line x1="1.9" y1="7.6" x2="2.0" y2="11.0" stroke="#151515" stroke-width="0.7" opacity="0.52"/><line x1="-19.8" y1="18.7" x2="-18.9" y2="22.0" stroke="#151515" stroke-width="1.1" opacity="0.84"/><line x1="9.1" y1="-21.5" x2="10.4" y2="-17.1" stroke="#151515" stroke-width="0.9" opacity="0.84"/><line x1="5.6" y1="0.0" x2="7.3" y2="3.7" stroke="#151515" stroke-width="0.8" opacity="0.64"/><line x1="-8.9" y1="-3.4" x2="-8.1" y2="-0.5" stroke="#151515" stroke-width="0.9" opacity="0.68"/><line x1="16.6" y1="-3.8" x2="17.4" y2="2.3" stroke="#151515" stroke-width="1.2" opacity="0.43"/><line x1="15.9" y1="-11.4" x2="15.7" y2="-3.1" stroke="#151515" stroke-width="1.0" opacity="0.60"/><line x1="12.5" y1="13.2" x2="14.3" y2="16.0" stroke="#151515" stroke-width="0.8" opacity="0.48"/><line x1="-3.1" y1="5.6" x2="-1.7" y2="8.3" stroke="#151515" stroke-width="0.7" opacity="0.58"/><line x1="23.1" y1="6.2" x2="26.3" y2="12.1" stroke="#151515" stroke-width="0.8" opacity="0.57"/><line x1="-5.0" y1="7.0" x2="-6.4" y2="15.0" stroke="#151515" stroke-width="1.0" opacity="0.64"/><line x1="3.8" y1="5.1" x2="5.8" y2="9.8" stroke="#151515" stroke-width="1.3" opacity="0.48"/><line x1="-7.7" y1="0.7" x2="-4.2" y2="5.9" stroke="#151515" stroke-width="1.1" opacity="0.89"/><line x1="11.1" y1="-13.2" x2="12.6" y2="-8.9" stroke="#151515" stroke-width="0.8" opacity="0.79"/><line x1="-21.4" y1="-2.6" x2="-19.3" y2="1.9" stroke="#151515" stroke-width="1.3" opacity="0.89"/><line x1="12.1" y1="-16.8" x2="12.3" y2="-8.9" stroke="#151515" stroke-width="0.8" opacity="0.66"/><line x1="-2.8" y1="4.5" x2="-1.6" y2="7.4" stroke="#151515" stroke-width="0.8" opacity="0.75"/><line x1="11.6" y1="-1.8" x2="10.2" y2="6.7" stroke="#151515" stroke-width="1.5" opacity="0.58"/><line x1="0.6" y1="11.2" x2="2.4" y2="14.9" stroke="#151515" stroke-width="1.2" opacity="0.85"/><line x1="6.4" y1="-10.5" x2="6.3" y2="-3.6" stroke="#151515" stroke-width="0.7" opacity="0.73"/><line x1="16.7" y1="-10.2" x2="18.4" y2="-2.9" stroke="#151515" stroke-width="0.8" opacity="0.79"/><line x1="-11.7" y1="22.3" x2="-9.1" y2="30.7" stroke="#151515" stroke-width="1.0" opacity="0.87"/><line x1="-2.2" y1="-5.8" x2="-0.4" y2="-2.5" stroke="#151515" stroke-width="1.4" opacity="0.80"/><line x1="12.6" y1="21.3" x2="13.5" y2="30.2" stroke="#151515" stroke-width="0.9" opacity="0.67"/><line x1="0.4" y1="3.6" x2="1.3" y2="12.4" stroke="#151515" stroke-width="1.1" opacity="0.87"/><line x1="-23.2" y1="12.6" x2="-19.8" y2="19.8" stroke="#151515" stroke-width="0.8" opacity="0.55"/><line x1="-0.1" y1="19.2" x2="1.2" y2="23.6" stroke="#151515" stroke-width="0.7" opacity="0.86"/><line x1="-9.1" y1="13.4" x2="-9.7" y2="19.9" stroke="#151515" stroke-width="1.0" opacity="0.86"/><line x1="-15.8" y1="1.8" x2="-12.3" y2="6.9" stroke="#151515" stroke-width="1.0" opacity="0.49"/><line x1="20.5" y1="2.6" x2="21.5" y2="6.5" stroke="#151515" stroke-width="1.3" opacity="0.68"/><line x1="-7.7" y1="16.0" x2="-7.7" y2="22.3" stroke="#151515" stroke-width="0.7" opacity="0.68"/><line x1="-0.9" y1="12.5" x2="0.7" y2="19.9" stroke="#151515" stroke-width="1.1" opacity="0.78"/><line x1="10.1" y1="-5.4" x2="11.5" y2="1.2" stroke="#151515" stroke-width="1.1" opacity="0.75"/><line x1="-15.2" y1="6.7" x2="-15.9" y2="12.6" stroke="#151515" stroke-width="1.2" opacity="0.84"/><line x1="7.7" y1="-1.6" x2="6.9" y2="4.7" stroke="#151515" stroke-width="1.4" opacity="0.47"/><line x1="8.4" y1="11.7" x2="9.8" y2="14.9" stroke="#151515" stroke-width="0.7" opacity="0.73"/><line x1="4.4" y1="-25.1" x2="4.6" y2="-21.2" stroke="#151515" stroke-width="1.2" opacity="0.47"/><line x1="-12.1" y1="11.0" x2="-12.5" y2="19.9" stroke="#151515" stroke-width="0.7" opacity="0.62"/><line x1="-11.9" y1="0.8" x2="-10.4" y2="4.7" stroke="#151515" stroke-width="1.2" opacity="0.41"/><line x1="-13.2" y1="-2.7" x2="-12.1" y2="0.3" stroke="#151515" stroke-width="1.2" opacity="0.66"/><line x1="6.5" y1="8.2" x2="6.5" y2="11.5" stroke="#151515" stroke-width="0.8" opacity="0.46"/><line x1="2.9" y1="-7.1" x2="2.5" y2="-3.3" stroke="#151515" stroke-width="1.1" opacity="0.75"/><line x1="2.5" y1="4.4" x2="4.4" y2="11.2" stroke="#151515" stroke-width="0.7" opacity="0.87"/><line x1="-15.3" y1="-15.5" x2="-15.5" y2="-12.0" stroke="#151515" stroke-width="0.7" opacity="0.83"/><line x1="-11.5" y1="5.4" x2="-12.2" y2="11.7" stroke="#151515" stroke-width="0.8" opacity="0.46"/><line x1="-9.7" y1="0.4" x2="-8.0" y2="3.6" stroke="#151515" stroke-width="0.6" opacity="0.50"/><line x1="-4.9" y1="12.3" x2="-2.1" y2="19.3" stroke="#151515" stroke-width="1.1" opacity="0.49"/><line x1="-2.3" y1="4.0" x2="0.2" y2="7.8" stroke="#151515" stroke-width="1.3" opacity="0.68"/><line x1="4.1" y1="15.7" x2="8.4" y2="23.1" stroke="#151515" stroke-width="1.3" opacity="0.62"/><line x1="-23.8" y1="2.8" x2="-22.6" y2="8.0" stroke="#151515" stroke-width="1.2" opacity="0.89"/><line x1="-13.5" y1="22.5" x2="-12.7" y2="29.7" stroke="#151515" stroke-width="1.0" opacity="0.57"/><line x1="5.0" y1="4.3" x2="5.1" y2="7.7" stroke="#151515" stroke-width="0.8" opacity="0.48"/><line x1="18.9" y1="14.6" x2="19.5" y2="22.8" stroke="#151515" stroke-width="0.9" opacity="0.52"/><line x1="-4.6" y1="15.9" x2="-3.5" y2="19.7" stroke="#151515" stroke-width="0.8" opacity="0.88"/><line x1="13.9" y1="-0.8" x2="13.2" y2="3.6" stroke="#151515" stroke-width="0.9" opacity="0.58"/><line x1="10.8" y1="2.1" x2="12.0" y2="7.8" stroke="#151515" stroke-width="0.8" opacity="0.65"/><line x1="8.4" y1="2.3" x2="9.4" y2="5.7" stroke="#151515" stroke-width="0.6" opacity="0.41"/><line x1="-3.9" y1="10.9" x2="-2.7" y2="17.3" stroke="#151515" stroke-width="1.3" opacity="0.73"/><line x1="-6.2" y1="-24.1" x2="-4.4" y2="-19.1" stroke="#151515" stroke-width="1.5" opacity="0.47"/><line x1="-3.8" y1="-16.4" x2="-3.9" y2="-13.2" stroke="#151515" stroke-width="1.4" opacity="0.71"/><line x1="-3.2" y1="-21.7" x2="-2.5" y2="-17.9" stroke="#151515" stroke-width="1.1" opacity="0.82"/><line x1="6.6" y1="-20.9" x2="6.0" y2="-14.4" stroke="#151515" stroke-width="1.2" opacity="0.75"/><line x1="-0.6" y1="5.2" x2="0.6" y2="8.8" stroke="#151515" stroke-width="0.7" opacity="0.82"/><line x1="-16.7" y1="-4.6" x2="-16.2" y2="2.2" stroke="#151515" stroke-width="1.0" opacity="0.40"/><line x1="4.9" y1="-18.6" x2="6.0" y2="-12.7" stroke="#151515" stroke-width="1.2" opacity="0.43"/><line x1="-1.8" y1="-7.9" x2="-0.4" y2="-4.7" stroke="#151515" stroke-width="1.3" opacity="0.50"/><line x1="-12.8" y1="2.5" x2="-12.3" y2="8.3" stroke="#151515" stroke-width="1.3" opacity="0.71"/><line x1="-4.0" y1="-2.1" x2="-2.5" y2="1.5" stroke="#151515" stroke-width="1.3" opacity="0.55"/><line x1="-2.7" y1="1.1" x2="-1.4" y2="4.2" stroke="#151515" stroke-width="1.2" opacity="0.75"/><line x1="-5.5" y1="-7.6" x2="-4.0" y2="-1.7" stroke="#151515" stroke-width="1.0" opacity="0.46"/><line x1="5.3" y1="-3.4" x2="4.2" y2="5.4" stroke="#151515" stroke-width="0.6" opacity="0.63"/><line x1="-10.0" y1="5.2" x2="-10.6" y2="9.4" stroke="#151515" stroke-width="0.8" opacity="0.69"/><line x1="8.2" y1="14.3" x2="12.4" y2="21.9" stroke="#151515" stroke-width="1.3" opacity="0.65"/><line x1="13.2" y1="-11.2" x2="12.8" y2="-6.9" stroke="#151515" stroke-width="1.0" opacity="0.41"/><line x1="13.0" y1="2.3" x2="15.0" y2="7.7" stroke="#151515" stroke-width="0.7" opacity="0.57"/><line x1="-10.3" y1="24.8" x2="-10.2" y2="27.8" stroke="#151515" stroke-width="1.4" opacity="0.46"/><line x1="16.0" y1="-7.2" x2="19.1" y2="0.6" stroke="#151515" stroke-width="0.9" opacity="0.60"/><line x1="15.0" y1="1.9" x2="16.4" y2="6.8" stroke="#151515" stroke-width="0.8" opacity="0.42"/><line x1="17.3" y1="16.7" x2="16.7" y2="21.4" stroke="#151515" stroke-width="0.8" opacity="0.53"/><line x1="-8.8" y1="1.4" x2="-9.5" y2="6.6" stroke="#151515" stroke-width="1.4" opacity="0.81"/><line x1="-19.1" y1="-19.1" x2="-17.5" y2="-10.6" stroke="#151515" stroke-width="1.2" opacity="0.42"/><line x1="-2.5" y1="-12.1" x2="-1.7" y2="-4.7" stroke="#151515" stroke-width="0.9" opacity="0.42"/><line x1="4.6" y1="-1.0" x2="6.6" y2="4.5" stroke="#151515" stroke-width="0.9" opacity="0.77"/><line x1="8.2" y1="0.5" x2="10.8" y2="7.0" stroke="#151515" stroke-width="1.1" opacity="0.60"/><line x1="2.5" y1="8.7" x2="2.1" y2="12.9" stroke="#151515" stroke-width="1.0" opacity="0.51"/><line x1="-7.3" y1="4.2" x2="-5.1" y2="7.8" stroke="#151515" stroke-width="0.9" opacity="0.45"/><line x1="-0.4" y1="12.0" x2="-0.9" y2="18.4" stroke="#151515" stroke-width="1.3" opacity="0.61"/><line x1="-13.5" y1="10.2" x2="-11.8" y2="15.1" stroke="#151515" stroke-width="0.7" opacity="0.54"/><line x1="5.1" y1="0.6" x2="5.8" y2="6.6" stroke="#151515" stroke-width="1.4" opacity="0.51"/><line x1="-2.2" y1="11.7" x2="-0.8" y2="17.0" stroke="#151515" stroke-width="1.5" opacity="0.82"/><line x1="0.8" y1="0.0" x2="0.9" y2="3.2" stroke="#151515" stroke-width="1.4" opacity="0.64"/><line x1="-1.2" y1="1.9" x2="-1.8" y2="7.2" stroke="#151515" stroke-width="1.3" opacity="0.83"/><line x1="7.9" y1="0.3" x2="9.7" y2="3.5" stroke="#151515" stroke-width="1.1" opacity="0.74"/><line x1="16.9" y1="-5.5" x2="17.0" y2="1.4" stroke="#151515" stroke-width="1.0" opacity="0.68"/><line x1="19.3" y1="7.6" x2="18.8" y2="12.0" stroke="#151515" stroke-width="1.2" opacity="0.55"/><line x1="5.3" y1="9.1" x2="5.8" y2="15.9" stroke="#151515" stroke-width="0.7" opacity="0.44"/><line x1="-16.7" y1="-0.6" x2="-14.4" y2="4.2" stroke="#151515" stroke-width="1.1" opacity="0.41"/><line x1="-5.2" y1="15.7" x2="-4.3" y2="24.4" stroke="#151515" stroke-width="1.4" opacity="0.64"/><line x1="-0.1" y1="11.7" x2="0.4" y2="20.5" stroke="#151515" stroke-width="0.9" opacity="0.41"/><line x1="-19.0" y1="2.2" x2="-16.8" y2="7.3" stroke="#151515" stroke-width="1.2" opacity="0.86"/><line x1="-0.5" y1="5.4" x2="0.9" y2="10.2" stroke="#151515" stroke-width="1.2" opacity="0.50"/><line x1="4.7" y1="-18.4" x2="7.4" y2="-13.0" stroke="#151515" stroke-width="1.5" opacity="0.56"/><line x1="2.7" y1="-6.5" x2="2.8" y2="-2.2" stroke="#151515" stroke-width="0.9" opacity="0.88"/><line x1="-8.7" y1="2.2" x2="-7.5" y2="6.4" stroke="#151515" stroke-width="1.2" opacity="0.87"/><line x1="6.3" y1="12.3" x2="5.6" y2="16.6" stroke="#151515" stroke-width="0.7" opacity="0.43"/><line x1="10.2" y1="6.8" x2="9.5" y2="15.2" stroke="#151515" stroke-width="1.3" opacity="0.90"/><line x1="8.7" y1="-2.8" x2="8.2" y2="1.2" stroke="#151515" stroke-width="1.3" opacity="0.42"/><line x1="-7.0" y1="-8.9" x2="-5.2" y2="-4.0" stroke="#151515" stroke-width="0.8" opacity="0.40"/><line x1="-3.1" y1="13.9" x2="1.2" y2="21.5" stroke="#151515" stroke-width="1.5" opacity="0.50"/><line x1="-14.8" y1="20.9" x2="-12.7" y2="28.6" stroke="#151515" stroke-width="0.6" opacity="0.64"/><line x1="3.0" y1="13.6" x2="7.6" y2="20.6" stroke="#151515" stroke-width="1.0" opacity="0.81"/><line x1="-0.6" y1="-1.7" x2="1.1" y2="1.0" stroke="#151515" stroke-width="1.4" opacity="0.53"/><line x1="-1.4" y1="-25.8" x2="0.5" y2="-21.2" stroke="#151515" stroke-width="1.5" opacity="0.71"/><line x1="-2.5" y1="22.6" x2="-0.6" y2="27.1" stroke="#151515" stroke-width="0.6" opacity="0.78"/><line x1="13.7" y1="-7.2" x2="18.6" y2="-0.0" stroke="#151515" stroke-width="0.8" opacity="0.64"/><line x1="-7.9" y1="8.5" x2="-6.7" y2="13.9" stroke="#151515" stroke-width="1.4" opacity="0.49"/><line x1="5.4" y1="-18.1" x2="5.4" y2="-10.2" stroke="#151515" stroke-width="1.1" opacity="0.56"/><line x1="-5.8" y1="13.2" x2="-1.8" y2="19.7" stroke="#151515" stroke-width="0.8" opacity="0.78"/><line x1="-0.9" y1="6.8" x2="-0.4" y2="9.9" stroke="#151515" stroke-width="0.9" opacity="0.89"/><line x1="-1.5" y1="7.4" x2="-0.7" y2="10.9" stroke="#151515" stroke-width="1.2" opacity="0.62"/><line x1="0.2" y1="15.4" x2="0.8" y2="22.1" stroke="#151515" stroke-width="1.3" opacity="0.82"/><line x1="-4.1" y1="-3.7" x2="-1.1" y2="3.8" stroke="#151515" stroke-width="1.1" opacity="0.59"/><line x1="-1.6" y1="-6.6" x2="0.2" y2="-2.5" stroke="#151515" stroke-width="0.7" opacity="0.84"/><line x1="-10.4" y1="-3.5" x2="-11.3" y2="1.8" stroke="#151515" stroke-width="1.1" opacity="0.52"/><line x1="5.3" y1="-15.7" x2="9.8" y2="-7.9" stroke="#151515" stroke-width="1.0" opacity="0.81"/><line x1="13.3" y1="-22.3" x2="14.5" y2="-19.3" stroke="#151515" stroke-width="0.7" opacity="0.49"/><line x1="14.6" y1="-0.9" x2="17.3" y2="7.2" stroke="#151515" stroke-width="1.4" opacity="0.62"/><line x1="-2.3" y1="24.5" x2="2.1" y2="32.0" stroke="#151515" stroke-width="1.1" opacity="0.71"/><line x1="1.3" y1="14.2" x2="3.0" y2="17.7" stroke="#151515" stroke-width="0.8" opacity="0.70"/><line x1="-5.7" y1="-5.1" x2="-4.6" y2="-2.3" stroke="#151515" stroke-width="1.2" opacity="0.49"/><line x1="-4.1" y1="10.1" x2="-2.7" y2="17.8" stroke="#151515" stroke-width="0.7" opacity="0.45"/><line x1="-13.0" y1="12.0" x2="-9.5" y2="17.9" stroke="#151515" stroke-width="0.7" opacity="0.75"/><line x1="-9.3" y1="7.7" x2="-9.9" y2="12.5" stroke="#151515" stroke-width="0.9" opacity="0.68"/><line x1="-8.8" y1="12.5" x2="-10.2" y2="20.6" stroke="#151515" stroke-width="0.9" opacity="0.50"/><line x1="-2.1" y1="-6.7" x2="-2.4" y2="-3.7" stroke="#151515" stroke-width="1.0" opacity="0.81"/><line x1="-21.7" y1="17.0" x2="-19.0" y2="22.1" stroke="#151515" stroke-width="0.6" opacity="0.68"/><line x1="-17.7" y1="-20.0" x2="-17.3" y2="-16.5" stroke="#151515" stroke-width="0.9" opacity="0.65"/><line x1="5.0" y1="10.4" x2="4.3" y2="16.5" stroke="#151515" stroke-width="0.7" opacity="0.65"/><line x1="1.0" y1="8.4" x2="-0.3" y2="17.0" stroke="#151515" stroke-width="1.0" opacity="0.43"/><line x1="9.6" y1="-3.8" x2="10.7" y2="4.6" stroke="#151515" stroke-width="1.3" opacity="0.48"/><line x1="0.9" y1="-7.0" x2="0.6" y2="-1.6" stroke="#151515" stroke-width="1.3" opacity="0.49"/><line x1="1.4" y1="14.9" x2="3.3" y2="20.7" stroke="#151515" stroke-width="0.7" opacity="0.52"/><line x1="-5.0" y1="-25.4" x2="-4.5" y2="-22.2" stroke="#151515" stroke-width="1.3" opacity="0.42"/><line x1="2.2" y1="-3.5" x2="3.3" y2="3.0" stroke="#151515" stroke-width="1.2" opacity="0.55"/><line x1="-14.9" y1="10.3" x2="-14.4" y2="15.8" stroke="#151515" stroke-width="1.0" opacity="0.62"/><line x1="15.5" y1="4.6" x2="17.9" y2="10.0" stroke="#151515" stroke-width="1.3" opacity="0.79"/><line x1="-8.3" y1="4.1" x2="-5.4" y2="9.2" stroke="#151515" stroke-width="0.7" opacity="0.62"/><line x1="9.9" y1="9.7" x2="13.2" y2="14.7" stroke="#151515" stroke-width="1.2" opacity="0.44"/><line x1="-3.2" y1="-20.4" x2="0.1" y2="-15.3" stroke="#151515" stroke-width="1.1" opacity="0.59"/><line x1="5.2" y1="-0.1" x2="3.8" y2="7.9" stroke="#151515" stroke-width="1.3" opacity="0.81"/><line x1="5.2" y1="-1.9" x2="4.3" y2="5.7" stroke="#151515" stroke-width="0.7" opacity="0.58"/><line x1="-0.7" y1="-5.6" x2="2.5" y2="2.1" stroke="#151515" stroke-width="1.3" opacity="0.47"/><line x1="1.4" y1="11.8" x2="3.6" y2="17.5" stroke="#151515" stroke-width="0.6" opacity="0.49"/><line x1="-11.9" y1="-23.0" x2="-11.9" y2="-19.0" stroke="#151515" stroke-width="0.7" opacity="0.67"/><line x1="-8.4" y1="-7.3" x2="-7.0" y2="0.8" stroke="#151515" stroke-width="1.1" opacity="0.84"/><line x1="-9.2" y1="-7.5" x2="-6.2" y2="-0.3" stroke="#151515" stroke-width="1.5" opacity="0.69"/><line x1="-14.0" y1="19.0" x2="-11.5" y2="24.1" stroke="#151515" stroke-width="1.3" opacity="0.42"/><line x1="2.9" y1="-7.0" x2="1.8" y2="-0.3" stroke="#151515" stroke-width="1.1" opacity="0.73"/><line x1="-1.3" y1="2.7" x2="0.2" y2="5.5" stroke="#151515" stroke-width="1.2" opacity="0.62"/><line x1="-26.4" y1="-0.2" x2="-24.8" y2="3.2" stroke="#151515" stroke-width="1.2" opacity="0.41"/><line x1="10.2" y1="2.2" x2="11.4" y2="5.6" stroke="#151515" stroke-width="0.8" opacity="0.69"/><line x1="-7.9" y1="-2.7" x2="-6.3" y2="3.9" stroke="#151515" stroke-width="0.7" opacity="0.87"/><line x1="-0.7" y1="9.4" x2="-0.3" y2="12.9" stroke="#151515" stroke-width="1.4" opacity="0.79"/><line x1="-8.7" y1="7.9" x2="-8.4" y2="10.9" stroke="#151515" stroke-width="1.1" opacity="0.58"/><line x1="-8.9" y1="-9.2" x2="-8.6" y2="-0.5" stroke="#151515" stroke-width="0.8" opacity="0.85"/><line x1="13.2" y1="6.4" x2="15.5" y2="11.3" stroke="#151515" stroke-width="0.7" opacity="0.79"/><line x1="14.1" y1="3.3" x2="18.3" y2="10.9" stroke="#151515" stroke-width="0.8" opacity="0.70"/><line x1="-18.2" y1="1.2" x2="-14.6" y2="8.2" stroke="#151515" stroke-width="0.9" opacity="0.55"/><line x1="23.0" y1="10.2" x2="23.4" y2="17.9" stroke="#151515" stroke-width="0.6" opacity="0.82"/><line x1="-1.4" y1="-12.5" x2="0.5" y2="-5.3" stroke="#151515" stroke-width="0.8" opacity="0.45"/><line x1="-0.6" y1="5.6" x2="-0.5" y2="10.6" stroke="#151515" stroke-width="1.2" opacity="0.82"/><line x1="-3.3" y1="-7.9" x2="-1.6" y2="-1.8" stroke="#151515" stroke-width="1.3" opacity="0.66"/><line x1="-2.7" y1="20.5" x2="1.1" y2="28.5" stroke="#151515" stroke-width="1.4" opacity="0.41"/><line x1="-1.6" y1="11.5" x2="-2.5" y2="18.9" stroke="#151515" stroke-width="1.3" opacity="0.56"/><line x1="6.8" y1="-5.9" x2="6.4" y2="-1.5" stroke="#151515" stroke-width="1.2" opacity="0.75"/><line x1="-23.5" y1="6.7" x2="-24.0" y2="13.9" stroke="#151515" stroke-width="1.0" opacity="0.76"/><line x1="-10.3" y1="-2.8" x2="-9.8" y2="1.5" stroke="#151515" stroke-width="0.7" opacity="0.86"/><line x1="0.7" y1="4.4" x2="0.3" y2="8.0" stroke="#151515" stroke-width="0.9" opacity="0.47"/><line x1="2.4" y1="2.7" x2="3.3" y2="9.8" stroke="#151515" stroke-width="1.2" opacity="0.77"/><line x1="13.7" y1="9.0" x2="13.5" y2="14.2" stroke="#151515" stroke-width="1.3" opacity="0.85"/><line x1="21.1" y1="12.5" x2="20.0" y2="20.9" stroke="#151515" stroke-width="0.7" opacity="0.50"/><line x1="1.4" y1="4.2" x2="1.2" y2="12.3" stroke="#151515" stroke-width="1.2" opacity="0.81"/><line x1="-7.7" y1="-5.9" x2="-5.9" y2="-2.8" stroke="#151515" stroke-width="1.3" opacity="0.50"/><line x1="-6.3" y1="14.4" x2="-5.1" y2="17.2" stroke="#151515" stroke-width="0.9" opacity="0.76"/><line x1="-8.1" y1="10.4" x2="-6.3" y2="19.0" stroke="#151515" stroke-width="1.4" opacity="0.71"/><line x1="11.2" y1="4.6" x2="11.2" y2="10.2" stroke="#151515" stroke-width="0.9" opacity="0.75"/><line x1="-9.1" y1="-0.1" x2="-4.9" y2="6.9" stroke="#151515" stroke-width="1.3" opacity="0.49"/><line x1="7.1" y1="2.1" x2="5.9" y2="9.6" stroke="#151515" stroke-width="0.6" opacity="0.65"/><line x1="-22.4" y1="3.2" x2="-21.5" y2="7.2" stroke="#151515" stroke-width="0.9" opacity="0.82"/><line x1="-2.8" y1="10.8" x2="-1.2" y2="17.9" stroke="#151515" stroke-width="0.7" opacity="0.72"/><line x1="17.5" y1="13.1" x2="17.4" y2="20.3" stroke="#151515" stroke-width="1.2" opacity="0.58"/><line x1="-10.8" y1="9.6" x2="-6.5" y2="16.7" stroke="#151515" stroke-width="1.4" opacity="0.41"/><line x1="1.6" y1="11.8" x2="3.4" y2="20.0" stroke="#151515" stroke-width="0.9" opacity="0.84"/><line x1="0.4" y1="16.4" x2="0.5" y2="22.6" stroke="#151515" stroke-width="1.3" opacity="0.72"/><line x1="-7.2" y1="11.4" x2="-7.4" y2="15.3" stroke="#151515" stroke-width="1.2" opacity="0.77"/><line x1="5.2" y1="14.2" x2="6.4" y2="21.8" stroke="#151515" stroke-width="0.7" opacity="0.63"/><line x1="5.6" y1="-4.3" x2="7.2" y2="-0.5" stroke="#151515" stroke-width="1.2" opacity="0.82"/><line x1="2.9" y1="8.3" x2="4.5" y2="12.5" stroke="#151515" stroke-width="1.1" opacity="0.48"/><line x1="-4.7" y1="9.4" x2="-4.3" y2="18.3" stroke="#151515" stroke-width="0.7" opacity="0.88"/><line x1="8.5" y1="9.6" x2="8.4" y2="18.5" stroke="#151515" stroke-width="1.3" opacity="0.62"/><line x1="4.7" y1="19.5" x2="6.3" y2="22.8" stroke="#151515" stroke-width="0.9" opacity="0.42"/><line x1="-18.1" y1="15.6" x2="-16.6" y2="22.6" stroke="#151515" stroke-width="1.2" opacity="0.63"/><line x1="9.3" y1="15.8" x2="9.4" y2="21.2" stroke="#151515" stroke-width="1.4" opacity="0.62"/><line x1="-18.8" y1="-7.7" x2="-16.5" y2="-2.7" stroke="#151515" stroke-width="1.2" opacity="0.84"/><line x1="1.8" y1="-17.9" x2="2.4" y2="-9.9" stroke="#151515" stroke-width="1.2" opacity="0.63"/><line x1="-7.5" y1="18.9" x2="-6.5" y2="22.3" stroke="#151515" stroke-width="1.3" opacity="0.76"/><line x1="-7.2" y1="-5.2" x2="-5.9" y2="0.2" stroke="#151515" stroke-width="1.2" opacity="0.60"/><line x1="-13.5" y1="-24.7" x2="-13.1" y2="-20.7" stroke="#151515" stroke-width="1.3" opacity="0.59"/><line x1="13.6" y1="5.9" x2="13.6" y2="9.8" stroke="#151515" stroke-width="1.4" opacity="0.66"/><line x1="11.6" y1="12.1" x2="11.9" y2="18.3" stroke="#151515" stroke-width="1.1" opacity="0.72"/><line x1="5.9" y1="-11.9" x2="5.2" y2="-6.5" stroke="#151515" stroke-width="0.8" opacity="0.74"/><line x1="-16.9" y1="15.8" x2="-17.5" y2="19.5" stroke="#151515" stroke-width="0.9" opacity="0.43"/><line x1="-2.8" y1="15.0" x2="-2.0" y2="17.9" stroke="#151515" stroke-width="1.0" opacity="0.75"/><line x1="-6.6" y1="10.2" x2="-6.5" y2="14.5" stroke="#151515" stroke-width="1.4" opacity="0.66"/><line x1="3.2" y1="24.9" x2="5.5" y2="29.8" stroke="#151515" stroke-width="0.7" opacity="0.79"/><line x1="5.2" y1="-15.2" x2="6.2" y2="-9.4" stroke="#151515" stroke-width="0.8" opacity="0.88"/><line x1="-11.3" y1="16.8" x2="-11.6" y2="24.7" stroke="#151515" stroke-width="1.0" opacity="0.55"/><line x1="-6.9" y1="-0.0" x2="-4.3" y2="7.6" stroke="#151515" stroke-width="1.4" opacity="0.53"/><line x1="-7.5" y1="9.0" x2="-5.0" y2="13.9" stroke="#151515" stroke-width="0.6" opacity="0.76"/><line x1="-2.8" y1="11.6" x2="-1.6" y2="16.2" stroke="#151515" stroke-width="1.0" opacity="0.72"/><line x1="-7.1" y1="-8.4" x2="-7.7" y2="0.2" stroke="#151515" stroke-width="0.7" opacity="0.81"/><line x1="16.4" y1="-10.7" x2="16.3" y2="-6.9" stroke="#151515" stroke-width="1.2" opacity="0.41"/><line x1="-6.1" y1="-6.2" x2="-4.3" y2="-3.0" stroke="#151515" stroke-width="0.8" opacity="0.79"/><line x1="-4.9" y1="8.2" x2="-5.0" y2="16.6" stroke="#151515" stroke-width="0.8" opacity="0.85"/><line x1="-17.3" y1="-12.3" x2="-17.9" y2="-5.3" stroke="#151515" stroke-width="1.3" opacity="0.82"/><line x1="5.0" y1="20.9" x2="5.2" y2="27.1" stroke="#151515" stroke-width="1.0" opacity="0.84"/><line x1="-9.8" y1="-1.5" x2="-7.7" y2="2.4" stroke="#151515" stroke-width="1.0" opacity="0.43"/><line x1="-7.6" y1="3.5" x2="-6.3" y2="9.3" stroke="#151515" stroke-width="1.1" opacity="0.83"/><line x1="22.0" y1="3.0" x2="23.0" y2="8.8" stroke="#151515" stroke-width="1.2" opacity="0.82"/><line x1="-9.8" y1="11.6" x2="-5.2" y2="19.0" stroke="#151515" stroke-width="1.2" opacity="0.72"/><line x1="15.2" y1="5.2" x2="14.3" y2="12.2" stroke="#151515" stroke-width="0.9" opacity="0.89"/><line x1="-14.8" y1="1.0" x2="-10.2" y2="8.0" stroke="#151515" stroke-width="1.2" opacity="0.71"/><line x1="-13.6" y1="24.0" x2="-12.4" y2="29.0" stroke="#151515" stroke-width="1.1" opacity="0.79"/><line x1="2.1" y1="15.5" x2="3.1" y2="20.9" stroke="#151515" stroke-width="1.3" opacity="0.55"/><line x1="4.7" y1="-9.7" x2="7.1" y2="-4.1" stroke="#151515" stroke-width="1.1" opacity="0.89"/><line x1="-13.0" y1="-17.0" x2="-11.2" y2="-12.4" stroke="#151515" stroke-width="0.9" opacity="0.69"/><line x1="-14.9" y1="-15.1" x2="-14.8" y2="-11.8" stroke="#151515" stroke-width="1.4" opacity="0.67"/><line x1="8.7" y1="5.4" x2="10.0" y2="8.1" stroke="#151515" stroke-width="1.4" opacity="0.70"/><line x1="-12.6" y1="-17.2" x2="-11.5" y2="-8.8" stroke="#151515" stroke-width="1.2" opacity="0.71"/><line x1="-6.3" y1="-14.5" x2="-3.3" y2="-8.1" stroke="#151515" stroke-width="1.2" opacity="0.63"/><line x1="-0.6" y1="-4.0" x2="1.7" y2="-0.6" stroke="#151515" stroke-width="1.3" opacity="0.86"/><line x1="-7.4" y1="-8.3" x2="-7.5" y2="-0.4" stroke="#151515" stroke-width="1.1" opacity="0.53"/><line x1="-5.0" y1="14.9" x2="-3.7" y2="19.6" stroke="#151515" stroke-width="1.2" opacity="0.87"/><line x1="13.6" y1="7.7" x2="15.2" y2="10.5" stroke="#151515" stroke-width="1.3" opacity="0.69"/><line x1="10.4" y1="-4.9" x2="11.3" y2="-2.0" stroke="#151515" stroke-width="1.1" opacity="0.87"/><line x1="12.5" y1="0.2" x2="15.3" y2="4.9" stroke="#151515" stroke-width="1.2" opacity="0.51"/><line x1="0.2" y1="3.9" x2="0.5" y2="6.9" stroke="#151515" stroke-width="0.7" opacity="0.88"/><line x1="19.6" y1="15.8" x2="21.7" y2="18.9" stroke="#151515" stroke-width="1.2" opacity="0.52"/><line x1="-1.8" y1="-6.3" x2="-1.8" y2="-3.0" stroke="#151515" stroke-width="1.2" opacity="0.83"/><line x1="-1.6" y1="-3.4" x2="-1.3" y2="3.4" stroke="#151515" stroke-width="1.0" opacity="0.87"/><line x1="-1.4" y1="0.1" x2="-1.1" y2="3.1" stroke="#151515" stroke-width="1.3" opacity="0.44"/><line x1="-8.3" y1="21.5" x2="-8.5" y2="25.5" stroke="#151515" stroke-width="1.0" opacity="0.43"/><line x1="-11.6" y1="14.6" x2="-11.1" y2="20.2" stroke="#151515" stroke-width="0.7" opacity="0.80"/><line x1="-12.3" y1="16.2" x2="-10.4" y2="22.7" stroke="#151515" stroke-width="0.9" opacity="0.79"/><line x1="18.8" y1="-5.7" x2="21.2" y2="0.2" stroke="#151515" stroke-width="0.7" opacity="0.89"/><line x1="-7.5" y1="-21.3" x2="-6.8" y2="-16.4" stroke="#151515" stroke-width="1.5" opacity="0.82"/><line x1="-9.3" y1="-4.6" x2="-9.8" y2="0.9" stroke="#151515" stroke-width="0.9" opacity="0.74"/><line x1="-21.5" y1="-14.5" x2="-18.5" y2="-7.3" stroke="#151515" stroke-width="0.6" opacity="0.53"/><line x1="-15.1" y1="10.1" x2="-15.8" y2="18.0" stroke="#151515" stroke-width="0.6" opacity="0.82"/><line x1="8.1" y1="-22.2" x2="10.6" y2="-16.2" stroke="#151515" stroke-width="1.4" opacity="0.80"/><line x1="-11.6" y1="-24.4" x2="-9.0" y2="-20.0" stroke="#151515" stroke-width="1.1" opacity="0.80"/><line x1="5.1" y1="22.6" x2="8.7" y2="30.4" stroke="#151515" stroke-width="1.1" opacity="0.74"/><line x1="-9.0" y1="3.9" x2="-8.9" y2="8.4" stroke="#151515" stroke-width="1.3" opacity="0.63"/><line x1="17.5" y1="14.3" x2="20.7" y2="21.3" stroke="#151515" stroke-width="1.1" opacity="0.85"/><line x1="9.9" y1="-8.4" x2="10.8" y2="-2.6" stroke="#151515" stroke-width="0.8" opacity="0.50"/><line x1="6.9" y1="20.3" x2="7.7" y2="25.4" stroke="#151515" stroke-width="1.0" opacity="0.66"/><line x1="1.1" y1="5.2" x2="3.9" y2="13.7" stroke="#151515" stroke-width="0.7" opacity="0.72"/><line x1="0.6" y1="-5.4" x2="2.8" y2="0.8" stroke="#151515" stroke-width="1.1" opacity="0.41"/><line x1="8.2" y1="-9.2" x2="10.8" y2="-3.3" stroke="#151515" stroke-width="1.3" opacity="0.61"/><line x1="18.3" y1="-5.3" x2="17.2" y2="2.5" stroke="#151515" stroke-width="0.8" opacity="0.42"/><line x1="1.3" y1="9.8" x2="3.2" y2="12.8" stroke="#151515" stroke-width="1.1" opacity="0.84"/><line x1="2.7" y1="-0.5" x2="4.6" y2="5.8" stroke="#151515" stroke-width="0.7" opacity="0.88"/><line x1="-1.7" y1="18.7" x2="-2.7" y2="25.5" stroke="#151515" stroke-width="1.2" opacity="0.60"/><line x1="-7.7" y1="4.4" x2="-9.2" y2="13.1" stroke="#151515" stroke-width="0.8" opacity="0.42"/><line x1="-1.4" y1="14.1" x2="-2.2" y2="22.5" stroke="#151515" stroke-width="1.4" opacity="0.42"/><line x1="3.3" y1="-17.9" x2="2.2" y2="-11.1" stroke="#151515" stroke-width="0.7" opacity="0.47"/><line x1="-0.1" y1="-28.8" x2="2.5" y2="-22.2" stroke="#151515" stroke-width="1.1" opacity="0.78"/><line x1="7.4" y1="9.1" x2="9.6" y2="13.0" stroke="#151515" stroke-width="1.0" opacity="0.48"/><line x1="-0.5" y1="9.2" x2="3.5" y2="15.0" stroke="#151515" stroke-width="1.2" opacity="0.50"/><line x1="25.8" y1="8.7" x2="25.3" y2="13.0" stroke="#151515" stroke-width="1.4" opacity="0.84"/><line x1="7.3" y1="12.9" x2="6.9" y2="16.5" stroke="#151515" stroke-width="1.4" opacity="0.71"/><line x1="-11.4" y1="5.5" x2="-9.6" y2="13.2" stroke="#151515" stroke-width="1.2" opacity="0.47"/><line x1="-0.3" y1="6.4" x2="1.0" y2="13.5" stroke="#151515" stroke-width="0.7" opacity="0.84"/><line x1="-2.3" y1="15.3" x2="-0.7" y2="18.9" stroke="#151515" stroke-width="1.4" opacity="0.57"/><line x1="5.9" y1="15.1" x2="5.4" y2="20.0" stroke="#151515" stroke-width="0.7" opacity="0.89"/><line x1="22.9" y1="11.7" x2="25.9" y2="18.0" stroke="#151515" stroke-width="1.0" opacity="0.54"/><line x1="-1.4" y1="10.7" x2="-2.3" y2="15.8" stroke="#151515" stroke-width="1.5" opacity="0.86"/><line x1="7.1" y1="8.2" x2="11.6" y2="15.3" stroke="#151515" stroke-width="1.3" opacity="0.55"/><line x1="1.1" y1="1.7" x2="3.8" y2="9.1" stroke="#151515" stroke-width="0.7" opacity="0.40"/><line x1="6.3" y1="-11.8" x2="7.3" y2="-7.9" stroke="#151515" stroke-width="1.4" opacity="0.51"/><line x1="-6.9" y1="-1.1" x2="-6.9" y2="3.0" stroke="#151515" stroke-width="1.2" opacity="0.50"/><line x1="3.5" y1="4.7" x2="5.0" y2="11.1" stroke="#151515" stroke-width="0.8" opacity="0.50"/><line x1="-15.3" y1="-11.2" x2="-14.1" y2="-3.5" stroke="#151515" stroke-width="0.8" opacity="0.43"/><line x1="-2.3" y1="-11.2" x2="1.6" y2="-5.1" stroke="#151515" stroke-width="1.3" opacity="0.57"/><line x1="12.1" y1="-19.8" x2="15.5" y2="-14.9" stroke="#151515" stroke-width="1.4" opacity="0.64"/><line x1="5.6" y1="-5.4" x2="5.4" y2="-1.3" stroke="#151515" stroke-width="0.9" opacity="0.48"/><line x1="-12.1" y1="14.7" x2="-11.5" y2="17.6" stroke="#151515" stroke-width="1.0" opacity="0.66"/><line x1="12.8" y1="16.2" x2="12.2" y2="24.0" stroke="#151515" stroke-width="0.9" opacity="0.76"/><line x1="-15.7" y1="16.7" x2="-16.0" y2="20.1" stroke="#151515" stroke-width="1.5" opacity="0.65"/><line x1="-15.7" y1="0.7" x2="-12.2" y2="5.8" stroke="#151515" stroke-width="1.5" opacity="0.51"/><line x1="1.3" y1="7.5" x2="1.2" y2="12.0" stroke="#151515" stroke-width="0.6" opacity="0.45"/><line x1="-3.5" y1="-6.1" x2="-3.1" y2="-3.1" stroke="#151515" stroke-width="1.1" opacity="0.66"/><line x1="-2.6" y1="-3.8" x2="-2.2" y2="4.4" stroke="#151515" stroke-width="0.6" opacity="0.46"/><line x1="-15.1" y1="2.6" x2="-12.8" y2="6.7" stroke="#151515" stroke-width="1.0" opacity="0.47"/><line x1="-21.0" y1="-12.1" x2="-20.4" y2="-8.3" stroke="#151515" stroke-width="1.3" opacity="0.48"/><line x1="12.0" y1="-25.2" x2="13.5" y2="-20.1" stroke="#151515" stroke-width="1.4" opacity="0.66"/><line x1="0.8" y1="-9.7" x2="2.3" y2="-5.5" stroke="#151515" stroke-width="1.0" opacity="0.89"/><line x1="7.9" y1="-25.1" x2="7.4" y2="-17.2" stroke="#151515" stroke-width="0.6" opacity="0.66"/><line x1="26.0" y1="-5.9" x2="27.3" y2="-1.6" stroke="#151515" stroke-width="1.2" opacity="0.58"/><line x1="-5.5" y1="1.1" x2="-4.3" y2="6.5" stroke="#151515" stroke-width="0.6" opacity="0.47"/><line x1="19.4" y1="-2.3" x2="20.4" y2="6.3" stroke="#151515" stroke-width="1.3" opacity="0.84"/><line x1="1.4" y1="-0.3" x2="4.1" y2="6.0" stroke="#151515" stroke-width="1.2" opacity="0.54"/><line x1="-27.3" y1="-5.8" x2="-24.6" y2="0.4" stroke="#151515" stroke-width="1.1" opacity="0.62"/><line x1="8.4" y1="-1.3" x2="8.9" y2="3.6" stroke="#151515" stroke-width="0.7" opacity="0.70"/><line x1="12.9" y1="-2.3" x2="14.0" y2="2.2" stroke="#151515" stroke-width="1.1" opacity="0.47"/><line x1="3.5" y1="6.8" x2="4.9" y2="11.4" stroke="#151515" stroke-width="0.9" opacity="0.52"/><line x1="11.8" y1="10.6" x2="12.9" y2="18.5" stroke="#151515" stroke-width="1.1" opacity="0.73"/><line x1="4.7" y1="21.5" x2="5.7" y2="27.2" stroke="#151515" stroke-width="1.2" opacity="0.63"/><line x1="-4.3" y1="11.0" x2="-3.4" y2="15.2" stroke="#151515" stroke-width="0.9" opacity="0.69"/><line x1="10.2" y1="2.9" x2="13.5" y2="10.4" stroke="#151515" stroke-width="1.1" opacity="0.65"/><line x1="-6.8" y1="23.5" x2="-4.7" y2="26.8" stroke="#151515" stroke-width="1.4" opacity="0.62"/><line x1="10.0" y1="6.9" x2="10.2" y2="12.5" stroke="#151515" stroke-width="0.7" opacity="0.51"/><line x1="18.0" y1="-3.4" x2="19.4" y2="0.3" stroke="#151515" stroke-width="0.9" opacity="0.74"/><line x1="-18.4" y1="-14.9" x2="-16.8" y2="-7.1" stroke="#151515" stroke-width="1.3" opacity="0.77"/><line x1="-0.2" y1="-12.7" x2="0.2" y2="-5.0" stroke="#151515" stroke-width="1.4" opacity="0.46"/><line x1="-0.2" y1="1.1" x2="0.9" y2="8.6" stroke="#151515" stroke-width="1.0" opacity="0.88"/><line x1="-12.2" y1="-3.9" x2="-12.8" y2="3.8" stroke="#151515" stroke-width="1.1" opacity="0.59"/><line x1="-13.7" y1="6.2" x2="-11.0" y2="13.1" stroke="#151515" stroke-width="1.0" opacity="0.68"/><line x1="-8.9" y1="9.6" x2="-9.3" y2="17.3" stroke="#151515" stroke-width="1.0" opacity="0.62"/><line x1="3.1" y1="12.1" x2="3.7" y2="16.0" stroke="#151515" stroke-width="1.1" opacity="0.44"/><line x1="8.3" y1="-3.5" x2="7.9" y2="4.5" stroke="#151515" stroke-width="1.5" opacity="0.50"/><line x1="2.7" y1="2.3" x2="4.1" y2="8.5" stroke="#151515" stroke-width="1.4" opacity="0.79"/><line x1="-15.4" y1="0.3" x2="-13.3" y2="7.1" stroke="#151515" stroke-width="0.9" opacity="0.70"/><line x1="-7.5" y1="-12.2" x2="-6.4" y2="-8.8" stroke="#151515" stroke-width="1.0" opacity="0.68"/><line x1="-23.1" y1="-10.0" x2="-21.1" y2="-1.4" stroke="#151515" stroke-width="1.0" opacity="0.71"/><line x1="10.0" y1="1.7" x2="9.8" y2="7.9" stroke="#151515" stroke-width="0.8" opacity="0.56"/><line x1="21.2" y1="-1.3" x2="24.3" y2="4.0" stroke="#151515" stroke-width="1.4" opacity="0.74"/><line x1="8.6" y1="-6.8" x2="10.0" y2="-3.1" stroke="#151515" stroke-width="1.1" opacity="0.65"/><line x1="1.9" y1="9.6" x2="2.8" y2="16.4" stroke="#151515" stroke-width="0.9" opacity="0.90"/><line x1="-3.3" y1="-0.9" x2="-3.4" y2="4.6" stroke="#151515" stroke-width="0.9" opacity="0.75"/><line x1="9.2" y1="2.3" x2="10.4" y2="10.2" stroke="#151515" stroke-width="1.2" opacity="0.50"/><line x1="-16.2" y1="2.2" x2="-15.8" y2="6.8" stroke="#151515" stroke-width="1.1" opacity="0.90"/><line x1="-12.0" y1="-4.0" x2="-10.3" y2="-0.7" stroke="#151515" stroke-width="1.3" opacity="0.45"/><line x1="4.9" y1="6.7" x2="4.7" y2="12.8" stroke="#151515" stroke-width="1.2" opacity="0.80"/><line x1="0.8" y1="2.8" x2="3.4" y2="9.9" stroke="#151515" stroke-width="1.2" opacity="0.58"/><line x1="3.6" y1="11.0" x2="3.2" y2="14.5" stroke="#151515" stroke-width="1.1" opacity="0.57"/><line x1="-12.3" y1="6.0" x2="-12.6" y2="9.3" stroke="#151515" stroke-width="1.1" opacity="0.88"/><line x1="-16.5" y1="8.7" x2="-14.1" y2="12.5" stroke="#151515" stroke-width="1.4" opacity="0.83"/><line x1="3.1" y1="-8.1" x2="2.2" y2="-1.6" stroke="#151515" stroke-width="1.0" opacity="0.87"/><line x1="-0.5" y1="14.9" x2="2.6" y2="21.5" stroke="#151515" stroke-width="0.9" opacity="0.84"/><line x1="-22.2" y1="4.3" x2="-20.1" y2="8.2" stroke="#151515" stroke-width="0.9" opacity="0.49"/><line x1="8.8" y1="0.1" x2="12.0" y2="5.6" stroke="#151515" stroke-width="1.1" opacity="0.59"/><line x1="-4.6" y1="4.7" x2="-4.8" y2="8.5" stroke="#151515" stroke-width="0.9" opacity="0.52"/><line x1="2.5" y1="11.9" x2="5.0" y2="15.6" stroke="#151515" stroke-width="1.2" opacity="0.57"/><line x1="9.5" y1="18.9" x2="10.8" y2="22.2" stroke="#151515" stroke-width="1.4" opacity="0.46"/><line x1="-22.4" y1="10.6" x2="-18.7" y2="17.5" stroke="#151515" stroke-width="0.9" opacity="0.76"/><line x1="-9.6" y1="1.7" x2="-6.8" y2="6.7" stroke="#151515" stroke-width="1.2" opacity="0.53"/><line x1="11.9" y1="-8.2" x2="14.0" y2="-3.4" stroke="#151515" stroke-width="1.1" opacity="0.51"/><line x1="3.3" y1="-2.8" x2="4.4" y2="3.2" stroke="#151515" stroke-width="0.8" opacity="0.79"/><line x1="-14.2" y1="14.6" x2="-11.9" y2="20.6" stroke="#151515" stroke-width="1.0" opacity="0.44"/><line x1="9.4" y1="24.7" x2="9.8" y2="29.7" stroke="#151515" stroke-width="0.7" opacity="0.68"/><line x1="-10.1" y1="13.7" x2="-7.6" y2="17.8" stroke="#151515" stroke-width="0.9" opacity="0.51"/><line x1="12.4" y1="16.7" x2="13.7" y2="21.2" stroke="#151515" stroke-width="1.4" opacity="0.79"/><line x1="16.7" y1="-15.4" x2="18.1" y2="-11.9" stroke="#151515" stroke-width="0.6" opacity="0.74"/><line x1="-6.8" y1="-8.4" x2="-6.3" y2="-2.9" stroke="#151515" stroke-width="1.2" opacity="0.52"/><line x1="5.4" y1="-7.9" x2="8.4" y2="-1.9" stroke="#151515" stroke-width="0.7" opacity="0.86"/><line x1="-2.9" y1="-18.4" x2="-1.1" y2="-15.7" stroke="#151515" stroke-width="0.7" opacity="0.50"/><line x1="-4.8" y1="14.0" x2="-3.7" y2="17.0" stroke="#151515" stroke-width="1.2" opacity="0.49"/><line x1="7.3" y1="-12.3" x2="10.2" y2="-5.6" stroke="#151515" stroke-width="1.0" opacity="0.74"/><line x1="-1.3" y1="2.5" x2="-1.3" y2="10.5" stroke="#151515" stroke-width="0.9" opacity="0.42"/><line x1="9.0" y1="-12.1" x2="10.3" y2="-9.1" stroke="#151515" stroke-width="0.7" opacity="0.80"/><path d="M-20,-20 Q0,-28 18,-18" fill="none" stroke="#111" stroke-width="1.8"/><circle r="39" fill="none" stroke="#d8d8d8" stroke-width="1" opacity="0.6"/></g>
<g transform="translate(768.7,385.0)" clip-path="url(#cc)"><circle r="39.5" fill="#cbcbcb"/><circle cx="30.9" cy="-5.8" r="0.6" fill="#3a3a3a"/><circle cx="-8.7" cy="13.4" r="1.6" fill="#6a6a6a"/><circle cx="-0.2" cy="18.2" r="0.5" fill="#555555"/><circle cx="26.4" cy="3.0" r="1.5" fill="#6a6a6a"/><circle cx="-21.2" cy="-3.0" r="0.8" fill="#3a3a3a"/><circle cx="13.7" cy="-11.4" r="1.7" fill="#888888"/><circle cx="-27.5" cy="17.3" r="0.7" fill="#555555"/><circle cx="0.4" cy="8.1" r="0.9" fill="#555555"/><circle cx="-19.8" cy="1.7" r="1.2" fill="#555555"/><circle cx="22.0" cy="2.3" r="1.0" fill="#6a6a6a"/><circle cx="4.9" cy="-16.0" r="1.8" fill="#888888"/><circle cx="15.2" cy="27.3" r="1.4" fill="#888888"/><circle cx="-9.3" cy="-10.6" r="0.9" fill="#888888"/><circle cx="-30.1" cy="2.8" r="1.0" fill="#888888"/><circle cx="18.1" cy="-10.2" r="1.2" fill="#888888"/><circle cx="-15.5" cy="4.3" r="0.9" fill="#555555"/><circle cx="18.5" cy="-15.1" r="1.5" fill="#888888"/><circle cx="-11.8" cy="33.1" r="1.4" fill="#888888"/><circle cx="-5.7" cy="16.9" r="1.2" fill="#3a3a3a"/><circle cx="4.1" cy="-15.8" r="0.5" fill="#555555"/><circle cx="10.8" cy="2.8" r="1.2" fill="#3a3a3a"/><circle cx="-2.3" cy="18.5" r="1.6" fill="#3a3a3a"/><circle cx="0.3" cy="-9.2" r="0.8" fill="#555555"/><circle cx="7.6" cy="0.2" r="1.7" fill="#3a3a3a"/><circle cx="18.6" cy="9.9" r="0.8" fill="#3a3a3a"/><circle cx="28.0" cy="19.0" r="0.5" fill="#3a3a3a"/><circle cx="-8.2" cy="11.4" r="1.7" fill="#555555"/><circle cx="-1.4" cy="2.8" r="1.3" fill="#555555"/><circle cx="3.6" cy="8.1" r="0.9" fill="#3a3a3a"/><circle cx="-5.2" cy="25.5" r="0.9" fill="#3a3a3a"/><circle cx="23.4" cy="-13.6" r="1.6" fill="#555555"/><circle cx="-15.4" cy="5.7" r="1.4" fill="#6a6a6a"/><circle cx="2.7" cy="-1.4" r="1.5" fill="#555555"/><circle cx="-29.0" cy="-0.3" r="1.1" fill="#6a6a6a"/><circle cx="20.0" cy="28.4" r="0.8" fill="#888888"/><circle cx="-15.8" cy="-19.7" r="1.7" fill="#3a3a3a"/><circle cx="-0.2" cy="15.0" r="0.7" fill="#888888"/><circle cx="-15.5" cy="-14.7" r="1.8" fill="#3a3a3a"/><circle cx="15.9" cy="2.5" r="1.1" fill="#6a6a6a"/><circle cx="13.8" cy="10.6" r="1.5" fill="#6a6a6a"/><circle cx="-0.9" cy="24.4" r="1.2" fill="#3a3a3a"/><circle cx="11.9" cy="19.6" r="0.7" fill="#3a3a3a"/><circle cx="0.6" cy="13.4" r="0.7" fill="#555555"/><circle cx="4.1" cy="6.2" r="1.4" fill="#888888"/><circle cx="-9.7" cy="27.6" r="0.8" fill="#555555"/><g transform="translate(10,-34)"><path d="M1,0 L1,21 L22,21 Z" fill="#c45050" stroke="#553030" stroke-width="1.2" stroke-linejoin="round"/><rect x="1.0" y="4.4" width="4.3" height="4.3" fill="#f0f0f0"/><rect x="5.5" y="8.8" width="4.3" height="4.3" fill="#f0f0f0"/><rect x="1.0" y="13.2" width="4.3" height="4.3" fill="#f0f0f0"/><rect x="10.0" y="13.2" width="4.3" height="4.3" fill="#f0f0f0"/><rect x="5.5" y="17.6" width="4.3" height="4.3" fill="#f0f0f0"/><rect x="14.5" y="17.6" width="4.3" height="4.3" fill="#f0f0f0"/></g><circle r="39" fill="none" stroke="#d8d8d8" stroke-width="1" opacity="0.6"/></g>
<g transform="translate(878.1,336.3)" clip-path="url(#cc)"><circle r="39.5" fill="#cbcbcb"/><circle cx="0.9" cy="13.6" r="1.0" fill="#555555"/><circle cx="3.9" cy="5.5" r="1.2" fill="#6a6a6a"/><circle cx="9.0" cy="-24.4" r="0.8" fill="#6a6a6a"/><circle cx="-2.3" cy="16.5" r="0.6" fill="#555555"/><circle cx="4.9" cy="1.1" r="1.3" fill="#6a6a6a"/><circle cx="4.5" cy="-10.8" r="0.9" fill="#6a6a6a"/><circle cx="22.0" cy="16.3" r="1.4" fill="#555555"/><circle cx="10.0" cy="23.4" r="0.6" fill="#6a6a6a"/><circle cx="17.8" cy="3.8" r="1.4" fill="#6a6a6a"/><circle cx="13.6" cy="-16.2" r="1.0" fill="#6a6a6a"/><circle cx="-12.0" cy="8.6" r="0.9" fill="#3a3a3a"/><circle cx="19.6" cy="13.9" r="1.8" fill="#888888"/><circle cx="-3.8" cy="-9.0" r="1.4" fill="#3a3a3a"/><circle cx="-12.7" cy="10.7" r="1.3" fill="#6a6a6a"/><circle cx="8.8" cy="22.9" r="1.3" fill="#555555"/><circle cx="8.6" cy="-2.9" r="0.6" fill="#555555"/><circle cx="-4.3" cy="27.8" r="1.6" fill="#3a3a3a"/><circle cx="-6.8" cy="15.1" r="1.1" fill="#3a3a3a"/><circle cx="-5.9" cy="10.4" r="1.8" fill="#6a6a6a"/><circle cx="-3.1" cy="-29.2" r="0.5" fill="#6a6a6a"/><circle cx="-5.6" cy="14.6" r="1.3" fill="#3a3a3a"/><circle cx="-3.9" cy="16.9" r="1.1" fill="#555555"/><circle cx="-0.0" cy="28.5" r="0.7" fill="#3a3a3a"/><circle cx="-14.5" cy="19.8" r="1.0" fill="#6a6a6a"/><circle cx="24.9" cy="2.6" r="1.1" fill="#555555"/><circle cx="-13.4" cy="9.9" r="0.6" fill="#3a3a3a"/><circle cx="-2.1" cy="-22.4" r="1.8" fill="#3a3a3a"/><circle cx="-24.1" cy="-4.2" r="0.9" fill="#3a3a3a"/><circle cx="17.3" cy="19.7" r="1.5" fill="#888888"/><circle cx="-8.6" cy="-9.0" r="0.8" fill="#888888"/><circle cx="-5.4" cy="6.4" r="1.0" fill="#555555"/><circle cx="-13.0" cy="-14.3" r="0.8" fill="#555555"/><circle cx="16.3" cy="6.3" r="0.8" fill="#555555"/><circle cx="3.0" cy="-18.1" r="0.8" fill="#6a6a6a"/><circle cx="30.2" cy="13.1" r="1.2" fill="#888888"/><circle cx="25.9" cy="-3.2" r="1.6" fill="#3a3a3a"/><circle cx="-10.1" cy="3.4" r="0.8" fill="#555555"/><circle cx="-13.8" cy="25.9" r="1.5" fill="#6a6a6a"/><circle cx="9.5" cy="-19.0" r="1.4" fill="#6a6a6a"/><circle cx="-10.9" cy="20.6" r="1.1" fill="#6a6a6a"/><circle cx="26.2" cy="-3.4" r="0.6" fill="#555555"/><circle cx="1.8" cy="-14.0" r="1.6" fill="#555555"/><circle cx="-8.6" cy="-17.8" r="1.1" fill="#888888"/><circle cx="13.9" cy="-3.8" r="0.5" fill="#555555"/><circle cx="30.8" cy="5.5" r="0.7" fill="#888888"/><g transform="translate(10,-34)"><path d="M1,0 L1,21 L22,21 Z" fill="#c45050" stroke="#553030" stroke-width="1.2" stroke-linejoin="round"/><rect x="1.0" y="4.4" width="4.3" height="4.3" fill="#f0f0f0"/><rect x="5.5" y="8.8" width="4.3" height="4.3" fill="#f0f0f0"/><rect x="1.0" y="13.2" width="4.3" height="4.3" fill="#f0f0f0"/><rect x="10.0" y="13.2" width="4.3" height="4.3" fill="#f0f0f0"/><rect x="5.5" y="17.6" width="4.3" height="4.3" fill="#f0f0f0"/><rect x="14.5" y="17.6" width="4.3" height="4.3" fill="#f0f0f0"/></g><circle r="39" fill="none" stroke="#d8d8d8" stroke-width="1" opacity="0.6"/></g>
<g transform="translate(938.0,395.5)" clip-path="url(#cc)"><circle r="39.5" fill="#cbcbcb"/><rect x="-32" y="8" width="6" height="6" fill="#f2f2f2" opacity="1.0"/><rect x="-32" y="14" width="6" height="6" fill="#9c9c9c" opacity="1.0"/><rect x="-32" y="20" width="6" height="6" fill="#f2f2f2" opacity="1.0"/><rect x="-32" y="26" width="6" height="6" fill="#9c9c9c" opacity="1.0"/><rect x="-26" y="8" width="6" height="6" fill="#9c9c9c" opacity="0.88"/><rect x="-26" y="14" width="6" height="6" fill="#f2f2f2" opacity="0.88"/><rect x="-26" y="20" width="6" height="6" fill="#9c9c9c" opacity="0.88"/><rect x="-26" y="26" width="6" height="6" fill="#f2f2f2" opacity="0.88"/><rect x="-20" y="8" width="6" height="6" fill="#f2f2f2" opacity="0.76"/><rect x="-20" y="14" width="6" height="6" fill="#9c9c9c" opacity="0.76"/><rect x="-20" y="20" width="6" height="6" fill="#f2f2f2" opacity="0.76"/><rect x="-20" y="26" width="6" height="6" fill="#9c9c9c" opacity="0.76"/><rect x="-14" y="8" width="6" height="6" fill="#9c9c9c" opacity="0.64"/><rect x="-14" y="14" width="6" height="6" fill="#f2f2f2" opacity="0.64"/><rect x="-14" y="20" width="6" height="6" fill="#9c9c9c" opacity="0.64"/><rect x="-14" y="26" width="6" height="6" fill="#f2f2f2" opacity="0.64"/><rect x="-8" y="8" width="6" height="6" fill="#f2f2f2" opacity="0.52"/><rect x="-8" y="14" width="6" height="6" fill="#9c9c9c" opacity="0.52"/><rect x="-8" y="20" width="6" height="6" fill="#f2f2f2" opacity="0.52"/><rect x="-8" y="26" width="6" height="6" fill="#9c9c9c" opacity="0.52"/><rect x="-2" y="8" width="6" height="6" fill="#9c9c9c" opacity="0.4"/><rect x="-2" y="14" width="6" height="6" fill="#f2f2f2" opacity="0.4"/><rect x="-2" y="20" width="6" height="6" fill="#9c9c9c" opacity="0.4"/><rect x="-2" y="26" width="6" height="6" fill="#f2f2f2" opacity="0.4"/><rect x="4" y="8" width="6" height="6" fill="#f2f2f2" opacity="0.28"/><rect x="4" y="14" width="6" height="6" fill="#9c9c9c" opacity="0.28"/><rect x="4" y="20" width="6" height="6" fill="#f2f2f2" opacity="0.28"/><rect x="4" y="26" width="6" height="6" fill="#9c9c9c" opacity="0.28"/><g transform="rotate(-32)"><rect x="-16" y="-20" width="26" height="22" rx="2" fill="#f4f4f4" stroke="#b0b0b0" stroke-width="0.8"/><rect x="-16" y="2" width="26" height="7" rx="1" fill="#cfcfcf"/><rect x="6" y="-22" width="26" height="24" rx="2" fill="#2e4f9c"/><rect x="6" y="2" width="26" height="7" fill="#203a78"/><text x="10" y="-8" font-size="7.5" fill="#c8d4f0" font-family="Liberation Sans">ERA</text></g><circle r="39" fill="none" stroke="#d8d8d8" stroke-width="1" opacity="0.6"/></g>
<g transform="translate(1028.5,414.7)" clip-path="url(#cc)"><circle r="39.5" fill="#cbcbcb"/><rect x="-20.9" y="4.6" width="5.2" height="5.2" fill="#ffffff"/><rect x="-19.5" y="8.3" width="5.2" height="5.2" fill="#9a9a9a"/><rect x="-17.3" y="11.7" width="5.2" height="5.2" fill="#ffffff"/><rect x="-14.6" y="14.6" width="5.2" height="5.2" fill="#9a9a9a"/><rect x="-11.2" y="16.9" width="5.2" height="5.2" fill="#ffffff"/><rect x="-7.6" y="18.5" width="5.2" height="5.2" fill="#9a9a9a"/><rect x="-3.6" y="19.3" width="5.2" height="5.2" fill="#ffffff"/><rect x="0.4" y="19.3" width="5.2" height="5.2" fill="#9a9a9a"/><rect x="4.4" y="18.5" width="5.2" height="5.2" fill="#ffffff"/><rect x="8.0" y="16.9" width="5.2" height="5.2" fill="#9a9a9a"/><rect x="11.4" y="14.6" width="5.2" height="5.2" fill="#ffffff"/><rect x="14.1" y="11.7" width="5.2" height="5.2" fill="#9a9a9a"/><rect x="16.3" y="8.3" width="5.2" height="5.2" fill="#ffffff"/><rect x="17.7" y="4.6" width="5.2" height="5.2" fill="#9a9a9a"/><rect x="-15.2" y="5.0" width="4.2" height="4.2" fill="#a0a0a0"/><rect x="-13.5" y="8.3" width="4.2" height="4.2" fill="#ffffff"/><rect x="-11.1" y="11.0" width="4.2" height="4.2" fill="#a0a0a0"/><rect x="-8.1" y="13.1" width="4.2" height="4.2" fill="#ffffff"/><rect x="-4.7" y="14.5" width="4.2" height="4.2" fill="#a0a0a0"/><rect x="-1.1" y="14.9" width="4.2" height="4.2" fill="#ffffff"/><rect x="2.5" y="14.5" width="4.2" height="4.2" fill="#a0a0a0"/><rect x="5.9" y="13.1" width="4.2" height="4.2" fill="#ffffff"/><rect x="8.9" y="11.0" width="4.2" height="4.2" fill="#a0a0a0"/><rect x="11.3" y="8.3" width="4.2" height="4.2" fill="#ffffff"/><rect x="13.0" y="5.0" width="4.2" height="4.2" fill="#a0a0a0"/><path d="M-0.4,-1.6 L35.6,-33.6 L24.4,-46.4 L-11.6,-14.4Z" fill="#3558c0"/><path d="M-1.0,-10.8 L30.0,-38.8 L26.0,-43.2 L-5.0,-15.2Z" fill="#5f86e6" opacity="0.7"/><path d="M6.3,-11.4 L14.3,-18.4 L9.7,-23.6 L1.7,-16.6Z" fill="#2848a0" opacity="0.8"/><path d="M-9.8,5.2 L-0.8,-3.8 L-9.2,-12.2 L-18.2,-3.2Z" fill="#f0f0f0" stroke="#a8a8a8" stroke-width="0.8"/><circle r="39" fill="none" stroke="#d8d8d8" stroke-width="1" opacity="0.6"/></g>
<g transform="translate(1103.3,469.1)" clip-path="url(#cc)"><circle r="39.5" fill="#cbcbcb"/><path d="M-38,-14 Q-18,-10 -6,18 Q0,34 -14,38 Q-34,32 -38,6Z" fill="#1a1a1a" filter="url(#blur3)"/><path d="M-15.7,8.4 L9.8,-6.9 L0.2,-17.1 L-16.3,7.6Z" fill="#e2e2e2" stroke="#555" stroke-width="1.2"/><path d="M-9.3,2.7 L3.7,-9.3 L2.3,-10.7 L-10.7,1.3Z" fill="#fff"/><path d="M9.5,-7.3 L30.5,-27.3 L21.5,-36.7 L0.5,-16.7Z" fill="#181818"/><path d="M17.8,-15.2 L24.8,-22.2 L15.2,-31.8 L8.2,-24.8Z" fill="#e8e8e8"/><circle cx="12" cy="0" r="3" fill="none" stroke="#666" stroke-width="1.6"/><path d="M-2,-16 Q-6,-26 0,-32 M2,-18 Q0,-26 4,-30" fill="none" stroke="#999" stroke-width="1.4"/><circle r="39" fill="none" stroke="#d8d8d8" stroke-width="1" opacity="0.6"/></g>
<g transform="translate(1149.6,549.2)" clip-path="url(#cc)"><circle r="39.5" fill="#cbcbcb"/><g filter="url(#blur1)"><circle cx="-8.1" cy="19.5" r="4.8" fill="#ffffff" opacity="0.34"/><circle cx="18.4" cy="4.0" r="4.4" fill="#ffffff" opacity="0.39"/><circle cx="14.3" cy="-0.0" r="2.9" fill="#7a3a40" opacity="0.36"/><circle cx="20.8" cy="22.6" r="3.8" fill="#ffffff" opacity="0.49"/><circle cx="5.2" cy="21.9" r="2.5" fill="#7a3a40" opacity="0.45"/><circle cx="-33.8" cy="-2.5" r="4.6" fill="#9a5a60" opacity="0.21"/><circle cx="-7.4" cy="14.5" r="4.5" fill="#9a5a60" opacity="0.27"/><circle cx="-18.6" cy="-3.8" r="2.3" fill="#9a5a60" opacity="0.28"/><circle cx="27.8" cy="37.8" r="4.5" fill="#9a5a60" opacity="0.28"/><circle cx="12.0" cy="17.5" r="2.1" fill="#9a5a60" opacity="0.43"/><circle cx="-11.6" cy="31.6" r="3.2" fill="#7a3a40" opacity="0.45"/><circle cx="-38.0" cy="4.8" r="4.7" fill="#ffffff" opacity="0.31"/><circle cx="8.8" cy="13.6" r="3.7" fill="#7a3a40" opacity="0.43"/><circle cx="-20.2" cy="-0.3" r="3.0" fill="#ffffff" opacity="0.43"/><circle cx="-30.2" cy="6.3" r="2.3" fill="#7a3a40" opacity="0.34"/><circle cx="-5.9" cy="24.6" r="2.6" fill="#9a5a60" opacity="0.26"/><circle cx="10.3" cy="1.5" r="3.9" fill="#7a3a40" opacity="0.32"/><circle cx="27.3" cy="-4.0" r="4.6" fill="#9a5a60" opacity="0.29"/><circle cx="20.4" cy="4.8" r="3.2" fill="#9a5a60" opacity="0.39"/><circle cx="-31.4" cy="37.6" r="2.6" fill="#ffffff" opacity="0.20"/><circle cx="2.3" cy="30.9" r="3.2" fill="#7a3a40" opacity="0.23"/><circle cx="0.5" cy="6.2" r="3.8" fill="#ffffff" opacity="0.39"/><circle cx="-29.6" cy="20.7" r="4.5" fill="#7a3a40" opacity="0.46"/><circle cx="-25.9" cy="2.5" r="4.7" fill="#9a5a60" opacity="0.27"/><circle cx="-25.5" cy="27.1" r="4.8" fill="#7a3a40" opacity="0.41"/><circle cx="-12.4" cy="16.3" r="2.2" fill="#7a3a40" opacity="0.23"/><circle cx="-35.4" cy="36.4" r="2.7" fill="#9a5a60" opacity="0.32"/><circle cx="-10.2" cy="34.0" r="3.5" fill="#9a5a60" opacity="0.25"/><circle cx="9.5" cy="-1.1" r="2.7" fill="#9a5a60" opacity="0.40"/><circle cx="2.6" cy="-0.9" r="2.6" fill="#7a3a40" opacity="0.42"/><circle cx="-33.4" cy="13.3" r="2.7" fill="#7a3a40" opacity="0.25"/><circle cx="-13.7" cy="20.0" r="2.4" fill="#ffffff" opacity="0.24"/><circle cx="-8.3" cy="9.9" r="4.2" fill="#9a5a60" opacity="0.38"/><circle cx="-28.7" cy="-2.5" r="2.1" fill="#ffffff" opacity="0.41"/><circle cx="25.5" cy="-3.1" r="3.9" fill="#ffffff" opacity="0.22"/><circle cx="-17.5" cy="1.7" r="2.2" fill="#ffffff" opacity="0.36"/><circle cx="10.6" cy="33.8" r="4.2" fill="#9a5a60" opacity="0.24"/><circle cx="25.6" cy="10.3" r="2.3" fill="#ffffff" opacity="0.47"/><circle cx="19.5" cy="13.5" r="4.4" fill="#ffffff" opacity="0.37"/><circle cx="3.2" cy="12.1" r="3.7" fill="#9a5a60" opacity="0.22"/><circle cx="-32.0" cy="0.9" r="2.8" fill="#ffffff" opacity="0.42"/><circle cx="-12.4" cy="26.9" r="3.7" fill="#ffffff" opacity="0.34"/><circle cx="-2.3" cy="17.8" r="3.5" fill="#ffffff" opacity="0.38"/><circle cx="-6.3" cy="5.7" r="4.1" fill="#ffffff" opacity="0.43"/><circle cx="5.6" cy="16.4" r="4.7" fill="#ffffff" opacity="0.29"/><circle cx="6.8" cy="4.5" r="2.5" fill="#ffffff" opacity="0.40"/><circle cx="-8.8" cy="33.5" r="3.0" fill="#9a5a60" opacity="0.28"/><circle cx="3.9" cy="29.8" r="4.3" fill="#7a3a40" opacity="0.46"/><circle cx="-12.6" cy="20.5" r="2.9" fill="#7a3a40" opacity="0.24"/><circle cx="-14.9" cy="33.6" r="2.1" fill="#7a3a40" opacity="0.49"/><circle cx="-19.7" cy="3.1" r="3.4" fill="#ffffff" opacity="0.48"/><circle cx="16.8" cy="12.1" r="3.6" fill="#9a5a60" opacity="0.29"/><circle cx="17.4" cy="37.2" r="3.4" fill="#7a3a40" opacity="0.45"/><circle cx="-19.6" cy="21.5" r="4.0" fill="#ffffff" opacity="0.37"/><circle cx="-17.6" cy="29.2" r="2.1" fill="#7a3a40" opacity="0.32"/><circle cx="-25.5" cy="28.3" r="2.8" fill="#7a3a40" opacity="0.44"/><circle cx="26.9" cy="0.8" r="2.3" fill="#9a5a60" opacity="0.40"/><circle cx="15.3" cy="36.3" r="4.1" fill="#7a3a40" opacity="0.45"/><circle cx="-21.1" cy="26.0" r="4.3" fill="#9a5a60" opacity="0.41"/><circle cx="-26.2" cy="7.4" r="3.0" fill="#9a5a60" opacity="0.48"/><circle cx="-5.0" cy="37.9" r="2.5" fill="#9a5a60" opacity="0.47"/><circle cx="-32.2" cy="35.2" r="4.2" fill="#7a3a40" opacity="0.34"/><circle cx="-25.0" cy="33.3" r="2.0" fill="#9a5a60" opacity="0.37"/><circle cx="20.0" cy="29.5" r="4.8" fill="#ffffff" opacity="0.30"/><circle cx="26.8" cy="0.2" r="4.6" fill="#9a5a60" opacity="0.48"/><circle cx="-29.9" cy="6.2" r="3.2" fill="#7a3a40" opacity="0.49"/><circle cx="-2.6" cy="29.2" r="3.0" fill="#9a5a60" opacity="0.46"/><circle cx="-15.0" cy="-0.5" r="3.3" fill="#9a5a60" opacity="0.33"/><circle cx="-19.8" cy="34.6" r="2.7" fill="#7a3a40" opacity="0.33"/><circle cx="-35.7" cy="18.4" r="4.1" fill="#7a3a40" opacity="0.34"/><circle cx="28.0" cy="33.8" r="3.6" fill="#9a5a60" opacity="0.41"/><circle cx="24.4" cy="16.7" r="4.8" fill="#7a3a40" opacity="0.43"/><circle cx="-9.0" cy="19.5" r="4.5" fill="#9a5a60" opacity="0.39"/><circle cx="-3.5" cy="31.4" r="3.7" fill="#ffffff" opacity="0.40"/><circle cx="25.0" cy="32.5" r="3.8" fill="#ffffff" opacity="0.46"/><circle cx="25.9" cy="18.0" r="3.7" fill="#7a3a40" opacity="0.32"/><circle cx="-30.5" cy="-3.8" r="3.1" fill="#9a5a60" opacity="0.49"/><circle cx="-3.9" cy="12.8" r="4.4" fill="#9a5a60" opacity="0.24"/><circle cx="-31.8" cy="3.0" r="4.8" fill="#ffffff" opacity="0.32"/><circle cx="25.2" cy="34.8" r="2.8" fill="#ffffff" opacity="0.35"/><circle cx="-15.6" cy="33.8" r="4.8" fill="#ffffff" opacity="0.36"/><circle cx="-30.8" cy="13.6" r="2.1" fill="#ffffff" opacity="0.24"/><circle cx="13.4" cy="-3.0" r="2.6" fill="#7a3a40" opacity="0.20"/><circle cx="-19.3" cy="26.4" r="2.7" fill="#ffffff" opacity="0.23"/><circle cx="10.2" cy="1.2" r="3.5" fill="#ffffff" opacity="0.42"/><circle cx="8.3" cy="32.9" r="2.1" fill="#9a5a60" opacity="0.32"/><circle cx="-3.1" cy="2.7" r="2.6" fill="#9a5a60" opacity="0.36"/><circle cx="-23.6" cy="5.1" r="3.6" fill="#9a5a60" opacity="0.46"/><circle cx="-22.6" cy="27.1" r="4.4" fill="#7a3a40" opacity="0.29"/><circle cx="-17.2" cy="34.8" r="2.7" fill="#7a3a40" opacity="0.47"/></g><path d="M-24,-24 Q-26,-38 -12,-38 L26,-32 Q42,-26 40,-8 Q38,6 28,4 L-18,-14 Q-24,-18 -24,-24Z" fill="#d8c080" stroke="#1e1e1e" stroke-width="1.8"/><ellipse cx="-11.0" cy="-25.8" rx="2.4" ry="1.6" fill="#a08040"/><ellipse cx="19.8" cy="-25.3" rx="2.4" ry="1.6" fill="#a08040"/><ellipse cx="-13.0" cy="-10.4" rx="2.4" ry="1.6" fill="#a08040"/><ellipse cx="3.9" cy="-11.5" rx="2.4" ry="1.6" fill="#a08040"/><ellipse cx="-11.4" cy="-21.5" rx="2.4" ry="1.6" fill="#a08040"/><ellipse cx="17.6" cy="-31.5" rx="2.4" ry="1.6" fill="#a08040"/><ellipse cx="-7.6" cy="-14.3" rx="2.4" ry="1.6" fill="#a08040"/><ellipse cx="29.4" cy="-6.8" rx="2.4" ry="1.6" fill="#a08040"/><ellipse cx="-12.0" cy="-18.9" rx="2.4" ry="1.6" fill="#a08040"/><ellipse cx="21.4" cy="-18.9" rx="2.4" ry="1.6" fill="#a08040"/><ellipse cx="17.7" cy="-27.1" rx="2.4" ry="1.6" fill="#a08040"/><ellipse cx="-14.3" cy="-29.2" rx="2.4" ry="1.6" fill="#a08040"/><ellipse cx="-16.1" cy="-17.7" rx="2.4" ry="1.6" fill="#a08040"/><ellipse cx="8.8" cy="-17.2" rx="2.4" ry="1.6" fill="#a08040"/><ellipse cx="-10.4" cy="-27.2" rx="2.4" ry="1.6" fill="#a08040"/><ellipse cx="-7.4" cy="-10.2" rx="2.4" ry="1.6" fill="#a08040"/><ellipse cx="33.5" cy="-7.9" rx="2.4" ry="1.6" fill="#a08040"/><ellipse cx="-13.0" cy="-30.4" rx="2.4" ry="1.6" fill="#a08040"/><ellipse cx="31.5" cy="-20.0" rx="2.4" ry="1.6" fill="#a08040"/><ellipse cx="21.8" cy="-23.5" rx="2.4" ry="1.6" fill="#a08040"/><ellipse cx="6.3" cy="-18.6" rx="2.4" ry="1.6" fill="#a08040"/><ellipse cx="4.4" cy="-16.4" rx="2.4" ry="1.6" fill="#a08040"/><ellipse cx="-17.3" cy="-13.8" rx="2.4" ry="1.6" fill="#a08040"/><ellipse cx="25.9" cy="-27.3" rx="2.4" ry="1.6" fill="#a08040"/><ellipse cx="5.6" cy="-12.8" rx="2.4" ry="1.6" fill="#a08040"/><ellipse cx="3.1" cy="-26.9" rx="2.4" ry="1.6" fill="#a08040"/><circle r="39" fill="none" stroke="#d8d8d8" stroke-width="1" opacity="0.6"/></g>
<g transform="translate(1159.3,641.3)" clip-path="url(#cc)"><circle r="39.5" fill="#cbcbcb"/><g filter="url(#blur1)"><path d="M-30,4 Q-26,24 -2,24 Q18,24 34,12 L36,24 Q18,38 -4,38 Q-30,36 -34,10Z" fill="#1a1a1a"/><path d="M-30,2 Q-22,18 -10,20 M-26,0 Q-18,12 -8,14" fill="none" stroke="#222" stroke-width="2.5"/></g><path d="M13.3,2.0 L37.7,-22.3 L26.3,-33.7 L2.0,-9.3Z" fill="#cfc6de"/><path d="M11.9,-4.5 L36.2,-28.8 L32.8,-32.2 L8.5,-7.9Z" fill="#f6f6fa" opacity="0.85"/><path d="M5.9,0.6 L30.2,-23.8 L27.8,-26.2 L3.4,-1.9Z" fill="#6a5a88" opacity="0.5"/><path d="M23.6,-7.5 L26.6,-10.5 L14.5,-22.6 L11.5,-19.6Z" fill="#e8e8ee"/><path d="M0.4,16.4 L14.4,3.0 L1.0,-10.4 L-12.4,3.6Z" fill="#2a2a2a"/><circle cx="-6.0" cy="10.0" r="8.9" fill="#2a2a2a"/><path d="M-2.3,9.7 L10.4,-3.0 L7.0,-6.4 L-5.7,6.3Z" fill="#fff" opacity="0.18"/><circle r="39" fill="none" stroke="#d8d8d8" stroke-width="1" opacity="0.6"/></g>
<g transform="translate(1130.7,729.2)" clip-path="url(#cc)"><circle r="39.5" fill="#cbcbcb"/><rect x="-16.6" y="14.0" width="2.7" height="3.1" fill="#111"/><rect x="-7.3" y="6.2" width="1.1" height="2.0" fill="#111"/><rect x="6.2" y="18.5" width="3.0" height="1.2" fill="#111"/><rect x="-12.6" y="23.0" width="2.2" height="2.3" fill="#111"/><rect x="0.3" y="22.4" width="1.6" height="3.0" fill="#111"/><rect x="-5.5" y="17.9" width="2.8" height="1.3" fill="#111"/><rect x="-9.5" y="19.5" width="1.0" height="2.9" fill="#111"/><rect x="-4.4" y="26.7" width="3.2" height="2.9" fill="#111"/><rect x="-11.6" y="39.3" width="2.2" height="2.5" fill="#111"/><rect x="0.0" y="38.0" width="2.5" height="3.1" fill="#111"/><rect x="-0.0" y="18.3" width="1.8" height="1.4" fill="#111"/><rect x="-4.0" y="24.0" width="1.7" height="2.3" fill="#111"/><rect x="7.5" y="22.2" width="1.7" height="1.7" fill="#111"/><rect x="-1.7" y="14.7" width="1.7" height="2.1" fill="#111"/><rect x="-6.9" y="19.7" width="3.1" height="1.1" fill="#111"/><rect x="-6.0" y="8.5" width="1.0" height="2.7" fill="#111"/><rect x="-13.9" y="28.9" width="1.0" height="1.1" fill="#111"/><rect x="3.4" y="37.8" width="1.4" height="2.7" fill="#111"/><rect x="13.4" y="14.9" width="1.8" height="1.8" fill="#111"/><rect x="-21.4" y="20.1" width="1.2" height="2.6" fill="#111"/><rect x="-0.8" y="8.7" width="1.1" height="3.1" fill="#111"/><rect x="0.9" y="25.5" width="2.3" height="3.0" fill="#111"/><rect x="-16.9" y="35.4" width="2.2" height="1.7" fill="#111"/><rect x="-8.3" y="26.0" width="1.2" height="1.3" fill="#111"/><rect x="-17.4" y="0.0" width="1.4" height="1.1" fill="#111"/><rect x="5.1" y="21.3" width="1.9" height="1.5" fill="#111"/><rect x="-20.0" y="14.7" width="2.0" height="1.9" fill="#111"/><rect x="12.8" y="27.3" width="1.1" height="2.1" fill="#111"/><rect x="-3.5" y="18.9" width="2.6" height="3.1" fill="#111"/><rect x="-16.8" y="13.0" width="1.2" height="2.0" fill="#111"/><rect x="4.3" y="32.9" width="1.6" height="2.0" fill="#111"/><rect x="11.6" y="21.9" width="3.1" height="2.0" fill="#111"/><rect x="-20.5" y="22.8" width="2.1" height="1.6" fill="#111"/><rect x="-10.2" y="24.2" width="1.8" height="3.2" fill="#111"/><rect x="6.2" y="19.5" width="2.1" height="1.7" fill="#111"/><rect x="0.1" y="25.0" width="2.7" height="2.9" fill="#111"/><rect x="-16.2" y="31.4" width="2.7" height="2.5" fill="#111"/><rect x="-13.8" y="11.9" width="1.8" height="2.5" fill="#111"/><rect x="-8.0" y="29.9" width="2.7" height="2.5" fill="#111"/><rect x="-11.9" y="38.3" width="2.4" height="2.3" fill="#111"/><rect x="5.3" y="22.6" width="1.6" height="2.5" fill="#111"/><rect x="-22.1" y="25.0" width="2.4" height="2.8" fill="#111"/><rect x="-13.5" y="30.2" width="2.6" height="2.8" fill="#111"/><rect x="-16.2" y="32.9" width="2.9" height="2.5" fill="#111"/><rect x="16.3" y="19.4" width="2.1" height="2.2" fill="#111"/><rect x="2.6" y="33.5" width="3.1" height="2.0" fill="#111"/><rect x="-11.2" y="11.6" width="2.6" height="1.4" fill="#111"/><rect x="-3.7" y="12.9" width="2.5" height="1.9" fill="#111"/><rect x="-17.1" y="13.5" width="2.4" height="2.6" fill="#111"/><rect x="-0.8" y="22.7" width="2.0" height="2.4" fill="#111"/><rect x="-3.4" y="32.5" width="2.4" height="1.1" fill="#111"/><rect x="-12.3" y="22.9" width="1.1" height="1.3" fill="#111"/><rect x="-8.3" y="26.0" width="1.4" height="1.1" fill="#111"/><rect x="-14.6" y="23.5" width="2.3" height="2.3" fill="#111"/><rect x="-4.5" y="37.1" width="1.0" height="1.9" fill="#111"/><rect x="-7.6" y="29.1" width="1.3" height="2.8" fill="#111"/><rect x="-7.7" y="23.4" width="2.3" height="1.2" fill="#111"/><rect x="-13.9" y="20.2" width="2.3" height="3.1" fill="#111"/><rect x="-2.1" y="15.4" width="2.8" height="2.4" fill="#111"/><rect x="-9.4" y="24.8" width="2.3" height="2.2" fill="#111"/><rect x="16.8" y="17.1" width="2.3" height="1.8" fill="#111"/><rect x="-5.7" y="21.8" width="1.2" height="2.2" fill="#111"/><rect x="-9.7" y="19.4" width="2.4" height="3.0" fill="#111"/><rect x="-12.8" y="27.2" width="1.5" height="1.6" fill="#111"/><rect x="2.7" y="20.8" width="3.1" height="3.0" fill="#111"/><rect x="-11.8" y="18.9" width="3.2" height="2.1" fill="#111"/><rect x="-12.8" y="25.1" width="3.2" height="2.1" fill="#111"/><rect x="-8.3" y="29.8" width="1.3" height="2.4" fill="#111"/><rect x="-13.0" y="24.0" width="2.7" height="2.8" fill="#111"/><rect x="5.1" y="22.7" width="1.6" height="3.1" fill="#111"/><rect x="-4.7" y="16.8" width="1.6" height="1.3" fill="#111"/><rect x="1.5" y="21.6" width="2.3" height="2.0" fill="#111"/><rect x="-13.5" y="14.5" width="2.6" height="1.3" fill="#111"/><rect x="-5.5" y="16.1" width="2.2" height="1.7" fill="#111"/><rect x="-9.2" y="30.2" width="2.0" height="1.8" fill="#111"/><rect x="-6.4" y="12.6" width="1.1" height="1.6" fill="#111"/><rect x="-25.3" y="26.3" width="3.0" height="2.2" fill="#111"/><rect x="9.6" y="23.1" width="1.9" height="2.3" fill="#111"/><rect x="-9.3" y="12.4" width="2.1" height="3.0" fill="#111"/><rect x="-12.8" y="26.6" width="2.9" height="1.4" fill="#111"/><rect x="-10.9" y="34.6" width="1.1" height="2.8" fill="#111"/><rect x="-9.3" y="15.0" width="1.6" height="2.7" fill="#111"/><rect x="-1.8" y="19.9" width="2.1" height="2.2" fill="#111"/><rect x="-14.1" y="22.1" width="1.3" height="2.3" fill="#111"/><rect x="-4.7" y="19.6" width="1.5" height="2.8" fill="#111"/><rect x="-2.6" y="12.0" width="1.1" height="2.6" fill="#111"/><rect x="25.9" y="18.7" width="2.5" height="1.1" fill="#111"/><rect x="-2.5" y="17.9" width="2.4" height="3.1" fill="#111"/><rect x="-7.1" y="18.3" width="1.6" height="3.0" fill="#111"/><rect x="1.3" y="29.8" width="1.9" height="1.4" fill="#111"/><rect x="-7.9" y="20.5" width="1.2" height="1.8" fill="#111"/><rect x="-3.2" y="23.1" width="2.3" height="2.6" fill="#111"/><rect x="-2.5" y="19.4" width="1.9" height="1.7" fill="#111"/><rect x="-14.4" y="17.2" width="3.1" height="1.8" fill="#111"/><rect x="7.1" y="25.7" width="1.3" height="2.4" fill="#111"/><rect x="-25.8" y="21.4" width="2.2" height="2.4" fill="#111"/><rect x="-6.9" y="30.8" width="1.6" height="2.7" fill="#111"/><rect x="-10.8" y="21.6" width="1.5" height="1.8" fill="#111"/><rect x="-6.5" y="17.6" width="2.6" height="2.4" fill="#111"/><rect x="5.5" y="27.3" width="1.2" height="1.3" fill="#111"/><rect x="-11.5" y="19.1" width="2.9" height="2.1" fill="#111"/><rect x="-13.1" y="33.2" width="1.1" height="2.6" fill="#111"/><rect x="-1.1" y="23.3" width="3.1" height="2.5" fill="#111"/><rect x="-5.2" y="25.4" width="3.1" height="2.5" fill="#111"/><rect x="-3.9" y="18.5" width="2.4" height="1.8" fill="#111"/><rect x="-5.2" y="28.3" width="2.4" height="1.8" fill="#111"/><rect x="-9.7" y="24.5" width="2.8" height="2.4" fill="#111"/><rect x="-2.8" y="15.0" width="2.9" height="2.1" fill="#111"/><rect x="-15.8" y="17.0" width="2.6" height="1.9" fill="#111"/><rect x="-4.1" y="23.0" width="1.4" height="1.1" fill="#111"/><rect x="1.9" y="16.9" width="2.7" height="1.0" fill="#111"/><rect x="-24.6" y="24.7" width="2.4" height="1.9" fill="#111"/><rect x="-10.0" y="22.7" width="1.3" height="1.3" fill="#111"/><rect x="-12.3" y="26.9" width="2.9" height="1.3" fill="#111"/><rect x="-6.2" y="27.6" width="1.4" height="1.6" fill="#111"/><rect x="-5.0" y="30.0" width="1.1" height="3.0" fill="#111"/><rect x="-20.4" y="34.1" width="2.5" height="2.5" fill="#111"/><rect x="-27.4" y="25.0" width="1.3" height="2.5" fill="#111"/><rect x="-9.4" y="32.1" width="2.6" height="1.4" fill="#111"/><rect x="-5.4" y="23.5" width="1.5" height="1.2" fill="#111"/><rect x="-25.7" y="33.0" width="1.8" height="1.7" fill="#111"/><rect x="-13.2" y="23.1" width="2.6" height="2.6" fill="#111"/><rect x="-2.5" y="26.4" width="2.5" height="3.1" fill="#111"/><rect x="-11.8" y="16.1" width="3.1" height="1.0" fill="#111"/><rect x="8.5" y="26.5" width="1.9" height="1.1" fill="#111"/><rect x="-31.9" y="15.7" width="2.1" height="1.8" fill="#111"/><rect x="-3.1" y="23.5" width="3.0" height="2.1" fill="#111"/><rect x="-3.2" y="21.1" width="1.5" height="1.1" fill="#111"/><rect x="-8.5" y="23.5" width="1.6" height="1.9" fill="#111"/><rect x="-7.0" y="24.1" width="1.1" height="3.1" fill="#111"/><rect x="-1.4" y="29.5" width="1.9" height="2.2" fill="#111"/><rect x="0.7" y="25.1" width="1.2" height="2.2" fill="#111"/><rect x="4.7" y="17.5" width="2.9" height="1.5" fill="#111"/><rect x="5.1" y="23.0" width="2.1" height="2.3" fill="#111"/><rect x="-15.0" y="28.9" width="2.6" height="3.0" fill="#111"/><rect x="-9.5" y="29.1" width="2.8" height="1.5" fill="#111"/><rect x="-0.2" y="26.0" width="1.2" height="2.7" fill="#111"/><rect x="-2.7" y="16.5" width="1.3" height="1.2" fill="#111"/><rect x="-5.9" y="24.9" width="1.9" height="2.3" fill="#111"/><rect x="-5.9" y="24.5" width="2.5" height="1.1" fill="#111"/><rect x="-3.7" y="27.5" width="1.8" height="1.2" fill="#111"/><rect x="-12.9" y="24.9" width="2.7" height="2.2" fill="#111"/><rect x="4.4" y="15.8" width="2.7" height="2.3" fill="#111"/><rect x="-21.5" y="26.6" width="2.4" height="3.1" fill="#111"/><rect x="-7.9" y="11.2" width="1.6" height="2.8" fill="#111"/><rect x="-9.5" y="24.5" width="1.1" height="1.4" fill="#111"/><rect x="-7.1" y="32.5" width="1.6" height="1.1" fill="#111"/><rect x="-5.0" y="13.1" width="1.1" height="1.1" fill="#111"/><rect x="-0.2" y="26.8" width="2.9" height="3.1" fill="#111"/><rect x="-11.0" y="18.7" width="1.9" height="1.8" fill="#111"/><rect x="-6.7" y="23.0" width="2.3" height="2.8" fill="#111"/><rect x="-6.6" y="18.9" width="2.2" height="1.4" fill="#111"/><rect x="-8.5" y="14.6" width="3.1" height="2.7" fill="#111"/><rect x="-0.2" y="26.1" width="3.0" height="2.0" fill="#111"/><rect x="-14.9" y="25.0" width="2.7" height="3.1" fill="#111"/><rect x="-29.3" y="18.2" width="2.3" height="1.2" fill="#111"/><rect x="-2.3" y="15.3" width="1.1" height="3.2" fill="#111"/><rect x="5.6" y="23.9" width="2.1" height="2.9" fill="#111"/><rect x="-10.9" y="25.0" width="1.6" height="1.4" fill="#111"/><rect x="-13.8" y="19.5" width="2.7" height="1.5" fill="#111"/><rect x="-10.1" y="26.2" width="3.2" height="2.8" fill="#111"/><rect x="1.3" y="14.1" width="1.9" height="1.3" fill="#111"/><rect x="-0.9" y="14.9" width="1.1" height="1.4" fill="#111"/><rect x="5.6" y="28.5" width="3.0" height="1.4" fill="#111"/><rect x="-3.7" y="16.1" width="2.5" height="2.9" fill="#111"/><rect x="-17.6" y="13.2" width="1.8" height="1.0" fill="#111"/><rect x="-17.9" y="21.3" width="1.4" height="1.9" fill="#111"/><rect x="-6.9" y="23.5" width="1.7" height="1.8" fill="#111"/><rect x="-19.9" y="23.6" width="1.9" height="3.2" fill="#111"/><rect x="2.2" y="7.4" width="2.5" height="2.5" fill="#111"/><path d="M14.7,-0.7 L37.7,-24.4 L26.3,-35.6 L3.2,-11.9Z" fill="#cfc6de"/><path d="M13.2,-7.1 L36.2,-30.8 L32.8,-34.2 L9.7,-10.5Z" fill="#f6f6fa" opacity="0.85"/><path d="M7.2,-2.1 L30.3,-25.8 L27.7,-28.2 L4.7,-4.5Z" fill="#6a5a88" opacity="0.5"/><path d="M24.3,-9.9 L27.3,-12.9 L15.3,-25.0 L12.3,-22.0Z" fill="#e8e8ee"/><path d="M2.5,13.3 L15.8,0.3 L2.2,-12.9 L-10.5,0.7Z" fill="#c8bc8a"/><circle cx="-4.0" cy="7.0" r="8.9" fill="#c8bc8a"/><path d="M-0.3,6.7 L11.7,-5.7 L8.3,-9.0 L-3.7,3.3Z" fill="#fff" opacity="0.18"/><circle r="39" fill="none" stroke="#d8d8d8" stroke-width="1" opacity="0.6"/></g>
<g transform="translate(1068.8,798.0)" clip-path="url(#cc)"><circle r="39.5" fill="#cbcbcb"/><path d="M-26,24 Q-10,22 0,20 Q8,18 10,14 Q14,18 6,24 Q12,26 14,20" fill="none" stroke="#111" stroke-width="3.2"/><path d="M-28,22 L-8,22" stroke="#333" stroke-width="1.2" stroke-dasharray="2 1"/><path d="M-13.3,10.7 L7.3,-0.7 L-3.3,-11.3 L-14.7,9.3Z" fill="#e8c8b8"/><path d="M-12.9,11.1 L-5.2,6.8 L-10.8,1.2 L-15.1,8.9Z" fill="#1a2a3a"/><path d="M6.9,-0.3 L34.9,-24.3 L25.1,-35.7 L-2.9,-11.7Z" fill="#1e1e1e"/><path d="M7.3,-10.5 L29.3,-30.5 L26.7,-33.5 L4.7,-13.5Z" fill="#555"/><circle r="39" fill="none" stroke="#d8d8d8" stroke-width="1" opacity="0.6"/></g>
<g transform="translate(984.3,835.6)" clip-path="url(#cc)"><circle r="39.5" fill="#cbcbcb"/><path d="M-16,14 Q-12,32 4,28 Q18,24 32,22" fill="none" stroke="#9a70d8" stroke-width="9" stroke-linecap="round" opacity="0.9" filter="url(#blur1)"/><path d="M15.0,-5.8 L36.1,-25.6 L27.9,-34.4 L6.8,-14.5Z" fill="#cfc6de"/><path d="M14.6,-11.3 L35.7,-31.2 L33.3,-33.8 L12.1,-14.0Z" fill="#f6f6fa" opacity="0.85"/><path d="M8.8,-6.2 L29.9,-26.0 L28.1,-28.0 L7.0,-8.1Z" fill="#6a5a88" opacity="0.5"/><path d="M24.1,-13.6 L27.1,-16.6 L17.9,-25.8 L14.9,-22.8Z" fill="#e8e8ee"/><path d="M30.5,-21.8 L41.5,-32.4 L34.5,-39.6 L23.6,-28.9Z" fill="#8a5ac8"/><path d="M3.9,6.2 L16.0,-4.7 L5.7,-15.6 L-5.9,-4.2Z" fill="#2e2e2e"/><circle cx="-1.0" cy="1.0" r="7.0" fill="#2e2e2e"/><path d="M2.3,0.4 L13.2,-9.8 L10.6,-12.5 L-0.3,-2.4Z" fill="#fff" opacity="0.18"/><path d="M-18,-20 Q-14,-14 -15,-11 Q-18,-8 -21,-11 Q-22,-14 -18,-20Z" fill="#4aa8f0"/><path d="M-23,-23 Q-21,-20 -21,-19 Q-23,-18 -24,-19Z" fill="#4aa8f0"/><circle r="39" fill="none" stroke="#d8d8d8" stroke-width="1" opacity="0.6"/></g>
<g transform="translate(891.7,835.6)" clip-path="url(#cc)"><circle r="39.5" fill="#cbcbcb"/><path d="M-18,20 Q-22,32 -6,32 Q8,30 20,26" fill="none" stroke="#ffffff" stroke-width="9" stroke-linecap="round" opacity="0.85" filter="url(#blur2)"/><path d="M-2.6,4.4 L23.9,-15.1 L16.1,-22.9 L-3.4,3.6Z" fill="#f2f2f2" stroke="#aaa" stroke-width="0.9"/><ellipse cx="6" cy="-6" rx="12" ry="7" transform="rotate(-45 6 -6)" fill="#f2f2f2" stroke="#a8a8a8" stroke-width="0.9"/><path d="M18.8,-15.2 L27.8,-24.2 L24.2,-27.8 L15.2,-18.8Z" fill="#e8e8e8"/><circle cx="25" cy="-25" r="4" fill="#7ab0dc"/><path d="M-18,-20 Q-14,-14 -15,-11 Q-18,-8 -21,-11 Q-22,-14 -18,-20Z" fill="#4aa8f0"/><path d="M-23,-23 Q-21,-20 -21,-19 Q-23,-18 -24,-19Z" fill="#4aa8f0"/><circle r="39" fill="none" stroke="#d8d8d8" stroke-width="1" opacity="0.6"/></g>
<g transform="translate(807.2,798.0)" clip-path="url(#cc)"><circle r="39.5" fill="#cbcbcb"/><path d="M-24,24 Q-16,12 -4,20 Q8,26 22,22 Q30,26 20,30 Q4,34 -10,32 Q-24,34 -24,24Z" fill="#f4f4f4"/><path d="M-20,18 Q-10,10 0,16" fill="none" stroke="#fff" stroke-width="3"/><path d="M7.0,-1.3 L25.0,-21.3 L19.0,-26.7 L1.0,-6.7Z" fill="#f0f0f0" stroke="#888" stroke-width="0.8"/><path d="M21.0,-17.4 L33.0,-31.4 L27.0,-36.6 L15.0,-22.6Z" fill="#8a4a30"/><path d="M-12,4 Q-14,-10 0,-10 Q8,-8 8,0 Q6,14 -6,12 Q-12,10 -12,4Z" fill="#2aa8c8"/><path d="M-10,6 Q-4,-4 4,-4" fill="none" stroke="#0a7898" stroke-width="1.2"/><path d="M-24,-26 Q-20,-20 -21,-17 Q-24,-14 -27,-17 Q-28,-20 -24,-26Z" fill="#4aa8f0"/><path d="M-29,-29 Q-27,-26 -27,-25 Q-29,-24 -30,-25Z" fill="#4aa8f0"/><circle r="39" fill="none" stroke="#d8d8d8" stroke-width="1" opacity="0.6"/></g>
<g transform="translate(745.3,729.3)" clip-path="url(#cc)"><circle r="39.5" fill="#cbcbcb"/><ellipse cx="-20" cy="22" rx="22" ry="19" fill="#a8dcf4" filter="url(#blur2)"/><path d="M-4,-14 L20,-38 L50,-8 L26,16 Z" fill="#3c3c3c"/><path d="M-4,-14 L26,16 L24,22 L-8,-10 Z" fill="#262626"/><path d="M-4,-14 L20,-38 L24,-36 L0,-12Z" fill="#555"/><circle cx="-2" cy="8" r="7.5" fill="#7a98ac" stroke="#1e1e1e" stroke-width="2.2"/><circle cx="-3" cy="6" r="1.5" fill="#d8e8f0"/><circle cx="0" cy="9" r="1.5" fill="#d8e8f0"/><circle cx="-22" cy="-16" r="3" fill="#8a8a8a"/><line x1="-20" y1="-18" x2="-13" y2="-25" stroke="#8a8a8a" stroke-width="1.6"/><circle r="39" fill="none" stroke="#d8d8d8" stroke-width="1" opacity="0.6"/></g>
<g transform="translate(716.7,641.3)" clip-path="url(#cc)"><circle r="39.5" fill="#cbcbcb"/><ellipse cx="-20" cy="16" rx="20" ry="18" fill="#3a0808" opacity="0.95" filter="url(#blur3)"/><path d="M-34,40 L-4,10 L10,26 L-10,46Z" fill="#f0e8b0" filter="url(#blur3)"/><line x1="8" y1="-8" x2="30" y2="-30" stroke="#222" stroke-width="3.5"/><circle cx="2" cy="-2" r="12.5" fill="#585850" stroke="#333" stroke-width="1"/><path d="M-7,7 L11,-11 A12.5,12.5 0 0 1 -7,7Z" fill="#e8e4c0"/><circle cx="-22" cy="-20" r="2.6" fill="#8a8a8a"/><line x1="-20" y1="-21" x2="-14" y2="-25" stroke="#8a8a8a" stroke-width="1.5"/><circle r="39" fill="none" stroke="#d8d8d8" stroke-width="1" opacity="0.6"/></g>
<g transform="translate(726.4,549.2)" clip-path="url(#cc)"><circle r="39.5" fill="#cbcbcb"/><circle r="39.5" fill="url(#darkbg)"/><path d="M-12,-14 Q-10,-24 -1,-22 Q10,-20 10,-6 Q10,10 0,12 Q-12,12 -13,0Z" fill="#f4f4f4" filter="url(#blur1)"/><circle r="38.6" fill="none" stroke="#e6e6e6" stroke-width="1.6"/><circle r="39" fill="none" stroke="#d8d8d8" stroke-width="1" opacity="0.6"/></g>
<g transform="translate(772.7,469.1)" clip-path="url(#cc)"><circle r="39.5" fill="#cbcbcb"/><g filter="url(#blur1)"><rect x="-34.0" y="-6.0" width="5.7" height="5.7" fill="#ccc" opacity="0.6"/><rect x="-34.0" y="-0.4" width="5.7" height="5.7" fill="#333" opacity="0.6"/><rect x="-34.0" y="5.2" width="5.7" height="5.7" fill="#fff"/><rect x="-34.0" y="10.8" width="5.7" height="5.7" fill="#000"/><rect x="-34.0" y="16.4" width="5.7" height="5.7" fill="#fff"/><rect x="-34.0" y="22.0" width="5.7" height="5.7" fill="#333" opacity="0.6"/><rect x="-34.0" y="27.6" width="5.7" height="5.7" fill="#ccc" opacity="0.6"/><rect x="-28.4" y="-6.0" width="5.7" height="5.7" fill="#000"/><rect x="-28.4" y="-0.4" width="5.7" height="5.7" fill="#fff"/><rect x="-28.4" y="5.2" width="5.7" height="5.7" fill="#000"/><rect x="-28.4" y="10.8" width="5.7" height="5.7" fill="#fff"/><rect x="-28.4" y="16.4" width="5.7" height="5.7" fill="#000"/><rect x="-28.4" y="22.0" width="5.7" height="5.7" fill="#fff"/><rect x="-28.4" y="27.6" width="5.7" height="5.7" fill="#333" opacity="0.6"/><rect x="-28.4" y="33.2" width="5.7" height="5.7" fill="#ccc" opacity="0.6"/><rect x="-22.8" y="-6.0" width="5.7" height="5.7" fill="#fff"/><rect x="-22.8" y="-0.4" width="5.7" height="5.7" fill="#000"/><rect x="-22.8" y="5.2" width="5.7" height="5.7" fill="#fff"/><rect x="-22.8" y="10.8" width="5.7" height="5.7" fill="#000"/><rect x="-22.8" y="16.4" width="5.7" height="5.7" fill="#fff"/><rect x="-22.8" y="22.0" width="5.7" height="5.7" fill="#000"/><rect x="-22.8" y="27.6" width="5.7" height="5.7" fill="#fff"/><rect x="-22.8" y="33.2" width="5.7" height="5.7" fill="#333" opacity="0.6"/><rect x="-17.2" y="-6.0" width="5.7" height="5.7" fill="#000"/><rect x="-17.2" y="-0.4" width="5.7" height="5.7" fill="#fff"/><rect x="-17.2" y="5.2" width="5.7" height="5.7" fill="#000"/><rect x="-17.2" y="10.8" width="5.7" height="5.7" fill="#fff"/><rect x="-17.2" y="16.4" width="5.7" height="5.7" fill="#000"/><rect x="-17.2" y="22.0" width="5.7" height="5.7" fill="#fff"/><rect x="-17.2" y="27.6" width="5.7" height="5.7" fill="#000"/><rect x="-17.2" y="33.2" width="5.7" height="5.7" fill="#ccc" opacity="0.6"/><rect x="-11.6" y="-6.0" width="5.7" height="5.7" fill="#fff"/><rect x="-11.6" y="-0.4" width="5.7" height="5.7" fill="#000"/><rect x="-11.6" y="5.2" width="5.7" height="5.7" fill="#fff"/><rect x="-11.6" y="10.8" width="5.7" height="5.7" fill="#000"/><rect x="-11.6" y="16.4" width="5.7" height="5.7" fill="#fff"/><rect x="-11.6" y="22.0" width="5.7" height="5.7" fill="#000"/><rect x="-11.6" y="27.6" width="5.7" height="5.7" fill="#fff"/><rect x="-11.6" y="33.2" width="5.7" height="5.7" fill="#333" opacity="0.6"/><rect x="-6.0" y="-6.0" width="5.7" height="5.7" fill="#000"/><rect x="-6.0" y="-0.4" width="5.7" height="5.7" fill="#fff"/><rect x="-6.0" y="5.2" width="5.7" height="5.7" fill="#000"/><rect x="-6.0" y="10.8" width="5.7" height="5.7" fill="#fff"/><rect x="-6.0" y="16.4" width="5.7" height="5.7" fill="#000"/><rect x="-6.0" y="22.0" width="5.7" height="5.7" fill="#fff"/><rect x="-6.0" y="27.6" width="5.7" height="5.7" fill="#000"/><rect x="-6.0" y="33.2" width="5.7" height="5.7" fill="#ccc" opacity="0.6"/><rect x="-0.4" y="-6.0" width="5.7" height="5.7" fill="#ccc" opacity="0.6"/><rect x="-0.4" y="-0.4" width="5.7" height="5.7" fill="#000"/><rect x="-0.4" y="5.2" width="5.7" height="5.7" fill="#fff"/><rect x="-0.4" y="10.8" width="5.7" height="5.7" fill="#000"/><rect x="-0.4" y="16.4" width="5.7" height="5.7" fill="#fff"/><rect x="-0.4" y="22.0" width="5.7" height="5.7" fill="#000"/><rect x="-0.4" y="27.6" width="5.7" height="5.7" fill="#ccc" opacity="0.6"/><rect x="5.2" y="-6.0" width="5.7" height="5.7" fill="#333" opacity="0.6"/><rect x="5.2" y="-0.4" width="5.7" height="5.7" fill="#ccc" opacity="0.6"/><rect x="5.2" y="5.2" width="5.7" height="5.7" fill="#333" opacity="0.6"/><rect x="5.2" y="10.8" width="5.7" height="5.7" fill="#ccc" opacity="0.6"/><rect x="5.2" y="16.4" width="5.7" height="5.7" fill="#333" opacity="0.6"/><rect x="5.2" y="22.0" width="5.7" height="5.7" fill="#ccc" opacity="0.6"/></g><circle cx="6" cy="-20" r="9" fill="#c03838" stroke="#222" stroke-width="2"/><circle cx="15" cy="-17" r="8" fill="#40a848" stroke="#222" stroke-width="2" opacity="0.9"/><circle cx="12" cy="-7" r="8" fill="#3050c8" stroke="#222" stroke-width="2"/><circle cx="6" cy="-20" r="9" fill="#c03838" opacity="0.5"/><circle r="39" fill="none" stroke="#d8d8d8" stroke-width="1" opacity="0.6"/></g>
<g transform="translate(847.5,414.7)" clip-path="url(#cc)"><circle r="39.5" fill="#cbcbcb"/><circle cx="-12.3" cy="8.2" r="0.5" fill="#3a3a3a"/><circle cx="-8.5" cy="15.5" r="1.0" fill="#6a6a6a"/><circle cx="-16.4" cy="1.4" r="0.4" fill="#888888"/><circle cx="10.9" cy="27.1" r="1.4" fill="#888888"/><circle cx="2.5" cy="12.2" r="0.5" fill="#3a3a3a"/><circle cx="-0.4" cy="-3.7" r="1.1" fill="#3a3a3a"/><circle cx="4.5" cy="2.7" r="0.6" fill="#888888"/><circle cx="12.6" cy="-5.0" r="1.3" fill="#888888"/><circle cx="-5.9" cy="23.9" r="0.6" fill="#3a3a3a"/><circle cx="0.7" cy="3.7" r="0.8" fill="#888888"/><circle cx="3.2" cy="11.6" r="1.1" fill="#3a3a3a"/><circle cx="-1.1" cy="5.8" r="1.2" fill="#555555"/><circle cx="3.9" cy="1.9" r="0.4" fill="#3a3a3a"/><circle cx="14.5" cy="22.6" r="0.9" fill="#888888"/><circle cx="-9.1" cy="4.4" r="0.5" fill="#555555"/><circle cx="-5.1" cy="2.6" r="1.0" fill="#555555"/><circle cx="14.3" cy="0.1" r="0.4" fill="#6a6a6a"/><circle cx="-16.1" cy="1.4" r="0.5" fill="#6a6a6a"/><circle cx="-3.2" cy="-7.0" r="0.4" fill="#888888"/><circle cx="5.7" cy="3.8" r="1.0" fill="#3a3a3a"/><circle cx="-3.9" cy="-13.3" r="0.9" fill="#3a3a3a"/><circle cx="1.6" cy="2.4" r="1.3" fill="#6a6a6a"/><circle cx="-12.6" cy="9.1" r="1.4" fill="#3a3a3a"/><circle cx="-12.9" cy="15.4" r="0.4" fill="#3a3a3a"/><circle cx="0.7" cy="16.6" r="0.7" fill="#3a3a3a"/><circle cx="-5.2" cy="13.7" r="0.9" fill="#3a3a3a"/><circle cx="16.9" cy="8.8" r="1.2" fill="#888888"/><circle cx="-12.8" cy="20.3" r="1.0" fill="#3a3a3a"/><circle cx="-9.1" cy="9.3" r="1.4" fill="#888888"/><circle cx="-29.4" cy="4.5" r="1.0" fill="#555555"/><circle cx="-5.3" cy="0.7" r="1.2" fill="#6a6a6a"/><circle cx="23.6" cy="10.3" r="1.2" fill="#6a6a6a"/><circle cx="28.4" cy="-3.6" r="1.0" fill="#3a3a3a"/><circle cx="9.5" cy="9.3" r="1.2" fill="#6a6a6a"/><circle cx="-23.9" cy="-10.8" r="0.8" fill="#555555"/><circle cx="-10.8" cy="7.0" r="1.4" fill="#6a6a6a"/><circle cx="-3.3" cy="2.5" r="0.9" fill="#888888"/><circle cx="-18.9" cy="-3.5" r="1.1" fill="#6a6a6a"/><circle cx="1.1" cy="-14.4" r="0.9" fill="#3a3a3a"/><circle cx="5.8" cy="2.3" r="0.5" fill="#3a3a3a"/><circle cx="8.2" cy="21.0" r="1.3" fill="#555555"/><circle cx="3.5" cy="15.9" r="1.0" fill="#888888"/><circle cx="10.0" cy="12.3" r="1.0" fill="#6a6a6a"/><circle cx="-27.5" cy="0.7" r="0.4" fill="#888888"/><circle cx="-14.9" cy="2.7" r="0.9" fill="#3a3a3a"/><circle cx="8.3" cy="-3.1" r="1.4" fill="#3a3a3a"/><circle cx="-4.8" cy="-9.8" r="0.5" fill="#888888"/><circle cx="-14.2" cy="9.3" r="1.0" fill="#3a3a3a"/><circle cx="-3.2" cy="3.8" r="0.6" fill="#888888"/><circle cx="0.4" cy="24.5" r="1.1" fill="#888888"/><circle cx="0.1" cy="4.1" r="1.0" fill="#3a3a3a"/><circle cx="-6.9" cy="-3.2" r="0.5" fill="#555555"/><circle cx="16.0" cy="9.6" r="0.5" fill="#3a3a3a"/><circle cx="-9.6" cy="14.9" r="0.9" fill="#3a3a3a"/><circle cx="-3.3" cy="2.2" r="0.5" fill="#6a6a6a"/><circle cx="25.3" cy="7.3" r="1.0" fill="#888888"/><circle cx="18.7" cy="4.4" r="0.5" fill="#6a6a6a"/><circle cx="-7.7" cy="-3.6" r="0.5" fill="#555555"/><circle cx="0.8" cy="8.1" r="0.5" fill="#3a3a3a"/><circle cx="-14.6" cy="17.8" r="0.9" fill="#555555"/><circle cx="-12.7" cy="16.4" r="0.6" fill="#6a6a6a"/><circle cx="-0.6" cy="-9.1" r="0.4" fill="#6a6a6a"/><circle cx="0.2" cy="5.3" r="0.5" fill="#888888"/><circle cx="5.8" cy="8.7" r="1.3" fill="#555555"/><circle cx="-12.7" cy="-5.6" r="0.5" fill="#3a3a3a"/><circle cx="7.3" cy="-19.9" r="1.2" fill="#888888"/><circle cx="18.4" cy="-2.6" r="1.3" fill="#3a3a3a"/><circle cx="9.6" cy="8.0" r="0.8" fill="#6a6a6a"/><circle cx="-12.1" cy="6.5" r="1.2" fill="#888888"/><circle cx="-6.0" cy="7.7" r="0.7" fill="#888888"/><circle cx="-13.0" cy="-2.3" r="0.8" fill="#555555"/><circle cx="-3.8" cy="9.1" r="0.5" fill="#6a6a6a"/><circle cx="-8.8" cy="4.2" r="1.1" fill="#555555"/><circle cx="2.4" cy="4.5" r="1.4" fill="#888888"/><circle cx="1.3" cy="18.1" r="0.7" fill="#3a3a3a"/><circle cx="-7.6" cy="-3.2" r="0.6" fill="#6a6a6a"/><circle cx="-0.3" cy="-11.8" r="0.9" fill="#888888"/><circle cx="-3.9" cy="-2.0" r="0.9" fill="#3a3a3a"/><circle cx="3.2" cy="34.2" r="0.7" fill="#3a3a3a"/><circle cx="1.9" cy="10.8" r="0.5" fill="#888888"/><circle cx="-8.5" cy="-2.1" r="1.3" fill="#555555"/><circle cx="-12.3" cy="5.5" r="1.3" fill="#555555"/><circle cx="-6.6" cy="14.9" r="0.6" fill="#555555"/><circle cx="-3.4" cy="5.4" r="1.1" fill="#3a3a3a"/><circle cx="-4.4" cy="18.0" r="1.2" fill="#888888"/><circle cx="13.5" cy="-3.1" r="0.7" fill="#555555"/><circle cx="-14.5" cy="4.8" r="1.4" fill="#555555"/><circle cx="-10.9" cy="20.5" r="0.7" fill="#3a3a3a"/><circle cx="-26.3" cy="-0.5" r="0.4" fill="#555555"/><circle cx="-28.2" cy="0.2" r="1.2" fill="#888888"/><circle cx="3.0" cy="11.1" r="0.9" fill="#888888"/><circle cx="-0.5" cy="12.6" r="1.1" fill="#888888"/><circle cx="12.0" cy="6.8" r="0.4" fill="#6a6a6a"/><circle cx="-5.9" cy="6.1" r="1.2" fill="#888888"/><circle cx="6.9" cy="-1.0" r="1.1" fill="#555555"/><circle cx="-25.1" cy="-1.7" r="1.4" fill="#3a3a3a"/><circle cx="4.6" cy="1.1" r="0.6" fill="#888888"/><circle cx="4.9" cy="4.8" r="0.9" fill="#6a6a6a"/><circle cx="-16.3" cy="-17.8" r="0.6" fill="#3a3a3a"/><circle cx="-5.1" cy="-7.0" r="1.4" fill="#6a6a6a"/><circle cx="-3.2" cy="11.2" r="0.7" fill="#3a3a3a"/><circle cx="16.1" cy="14.6" r="0.6" fill="#888888"/><circle cx="1.1" cy="5.4" r="0.6" fill="#555555"/><circle cx="10.9" cy="-4.6" r="1.0" fill="#888888"/><circle cx="8.9" cy="-8.6" r="1.3" fill="#555555"/><circle cx="-0.6" cy="3.7" r="1.4" fill="#555555"/><circle cx="-4.8" cy="17.2" r="0.6" fill="#3a3a3a"/><circle cx="-14.9" cy="5.1" r="0.7" fill="#6a6a6a"/><circle cx="-22.4" cy="-9.9" r="0.7" fill="#3a3a3a"/><circle cx="16.0" cy="5.8" r="1.0" fill="#888888"/><circle cx="-10.1" cy="24.1" r="0.6" fill="#3a3a3a"/><circle cx="3.6" cy="21.1" r="0.7" fill="#6a6a6a"/><circle cx="-0.9" cy="12.2" r="1.0" fill="#6a6a6a"/><circle cx="-12.8" cy="16.4" r="0.7" fill="#555555"/><circle cx="-4.5" cy="5.2" r="1.1" fill="#555555"/><circle cx="4.4" cy="9.7" r="0.7" fill="#888888"/><circle cx="-10.8" cy="15.9" r="1.1" fill="#3a3a3a"/><circle cx="7.4" cy="11.7" r="0.8" fill="#555555"/><circle cx="11.4" cy="10.7" r="0.9" fill="#888888"/><circle cx="-12.7" cy="17.1" r="1.3" fill="#6a6a6a"/><circle cx="-4.2" cy="-5.9" r="0.8" fill="#555555"/><circle cx="7.4" cy="4.6" r="0.9" fill="#6a6a6a"/><circle cx="-30.0" cy="16.8" r="0.8" fill="#3a3a3a"/><circle cx="7.7" cy="9.3" r="1.1" fill="#555555"/><circle cx="-10.9" cy="11.0" r="0.8" fill="#888888"/><circle cx="-19.8" cy="5.1" r="0.5" fill="#3a3a3a"/><circle cx="2.8" cy="-7.7" r="0.8" fill="#3a3a3a"/><circle cx="-3.6" cy="9.8" r="0.7" fill="#555555"/><circle cx="25.2" cy="1.9" r="1.4" fill="#555555"/><circle cx="-8.4" cy="1.3" r="1.1" fill="#3a3a3a"/><circle cx="-3.0" cy="5.4" r="0.8" fill="#3a3a3a"/><circle cx="-8.4" cy="11.5" r="1.4" fill="#555555"/><circle cx="2.2" cy="5.3" r="0.9" fill="#6a6a6a"/><circle cx="9.2" cy="19.0" r="1.3" fill="#555555"/><circle cx="-5.1" cy="13.7" r="1.1" fill="#6a6a6a"/><circle cx="11.0" cy="4.5" r="1.3" fill="#3a3a3a"/><circle cx="-15.2" cy="-1.6" r="0.9" fill="#3a3a3a"/><circle cx="14.1" cy="14.2" r="1.2" fill="#6a6a6a"/><circle cx="9.2" cy="11.1" r="1.0" fill="#555555"/><circle cx="10.7" cy="5.4" r="0.8" fill="#888888"/><circle cx="11.4" cy="1.1" r="0.4" fill="#6a6a6a"/><circle cx="-15.5" cy="11.0" r="1.3" fill="#6a6a6a"/><circle cx="-1.4" cy="-0.1" r="0.4" fill="#6a6a6a"/><circle cx="-13.9" cy="5.3" r="0.9" fill="#6a6a6a"/><circle cx="-5.1" cy="11.6" r="1.1" fill="#6a6a6a"/><circle cx="-5.2" cy="-2.3" r="0.9" fill="#6a6a6a"/><circle cx="6.1" cy="2.5" r="0.5" fill="#6a6a6a"/><circle cx="-3.2" cy="9.3" r="0.8" fill="#888888"/><circle cx="8.3" cy="10.4" r="0.9" fill="#888888"/><circle cx="-5.1" cy="6.9" r="0.6" fill="#3a3a3a"/><circle cx="-6.0" cy="4.2" r="1.2" fill="#6a6a6a"/><circle cx="21.0" cy="7.2" r="1.2" fill="#888888"/><circle cx="-2.7" cy="0.1" r="0.5" fill="#3a3a3a"/><circle cx="13.7" cy="19.5" r="0.6" fill="#6a6a6a"/><circle cx="-2.5" cy="12.7" r="1.1" fill="#555555"/><circle cx="-15.6" cy="6.5" r="0.8" fill="#6a6a6a"/><circle cx="-12.9" cy="8.1" r="0.5" fill="#6a6a6a"/><circle cx="15.7" cy="4.8" r="0.6" fill="#3a3a3a"/><circle cx="-10.5" cy="-0.0" r="0.9" fill="#3a3a3a"/><circle cx="-18.2" cy="-4.7" r="0.8" fill="#6a6a6a"/><circle cx="4.6" cy="12.8" r="1.2" fill="#6a6a6a"/><circle cx="-16.8" cy="2.0" r="0.5" fill="#3a3a3a"/><circle cx="-10.0" cy="14.5" r="0.8" fill="#555555"/><circle cx="-8.0" cy="-5.3" r="1.1" fill="#3a3a3a"/><circle cx="-7.9" cy="0.5" r="1.0" fill="#555555"/><circle cx="-8.2" cy="12.1" r="0.6" fill="#555555"/><circle cx="-19.4" cy="16.8" r="0.4" fill="#555555"/><circle cx="-1.3" cy="4.2" r="1.1" fill="#3a3a3a"/><circle cx="-9.8" cy="-1.3" r="0.8" fill="#6a6a6a"/><circle cx="-12.7" cy="-0.0" r="0.8" fill="#6a6a6a"/><circle cx="8.2" cy="13.4" r="0.5" fill="#6a6a6a"/><circle cx="23.7" cy="7.1" r="0.5" fill="#6a6a6a"/><circle cx="-2.4" cy="5.6" r="1.2" fill="#555555"/><circle cx="-23.1" cy="3.3" r="1.3" fill="#6a6a6a"/><circle cx="3.2" cy="20.3" r="1.1" fill="#555555"/><circle cx="2.2" cy="0.7" r="1.2" fill="#3a3a3a"/><circle cx="-2.3" cy="4.0" r="1.3" fill="#3a3a3a"/><circle cx="-2.9" cy="-13.1" r="0.7" fill="#6a6a6a"/><circle cx="-13.3" cy="3.1" r="1.4" fill="#555555"/><circle cx="-8.2" cy="-4.6" r="0.5" fill="#3a3a3a"/><circle cx="-1.4" cy="8.7" r="1.2" fill="#555555"/><circle cx="-5.3" cy="-8.4" r="1.0" fill="#3a3a3a"/><circle cx="1.1" cy="-6.3" r="0.7" fill="#6a6a6a"/><circle cx="-0.0" cy="8.3" r="1.1" fill="#555555"/><circle cx="-0.4" cy="-9.4" r="1.3" fill="#555555"/><circle cx="4.4" cy="17.8" r="0.8" fill="#6a6a6a"/><circle cx="-3.8" cy="1.0" r="1.4" fill="#888888"/><circle cx="-11.4" cy="4.2" r="1.1" fill="#888888"/><circle cx="-8.6" cy="2.1" r="0.9" fill="#6a6a6a"/><circle cx="-13.6" cy="10.0" r="0.6" fill="#888888"/><circle cx="0.9" cy="10.1" r="0.8" fill="#555555"/><circle cx="-9.8" cy="18.0" r="1.1" fill="#555555"/><circle cx="7.6" cy="9.8" r="1.4" fill="#6a6a6a"/><circle cx="4.5" cy="11.5" r="0.8" fill="#888888"/><circle cx="1.2" cy="20.0" r="1.2" fill="#6a6a6a"/><circle cx="-6.4" cy="11.3" r="1.3" fill="#3a3a3a"/><circle cx="-13.5" cy="24.4" r="1.3" fill="#888888"/><circle cx="9.3" cy="5.1" r="0.8" fill="#3a3a3a"/><circle cx="-2.2" cy="-0.3" r="1.1" fill="#888888"/><circle cx="-2.9" cy="31.6" r="1.2" fill="#888888"/><circle cx="-1.1" cy="13.9" r="1.3" fill="#888888"/><circle cx="9.0" cy="9.3" r="0.7" fill="#888888"/><circle cx="9.5" cy="14.7" r="1.3" fill="#6a6a6a"/><circle cx="-3.2" cy="7.6" r="0.9" fill="#555555"/><circle cx="-5.0" cy="7.7" r="0.8" fill="#888888"/><circle cx="-10.7" cy="16.0" r="1.1" fill="#888888"/><circle cx="-16.8" cy="26.8" r="0.4" fill="#555555"/><circle cx="0.6" cy="31.5" r="1.4" fill="#888888"/><circle cx="-5.3" cy="4.0" r="0.8" fill="#555555"/><circle cx="8.2" cy="3.5" r="0.8" fill="#6a6a6a"/><circle cx="1.9" cy="2.6" r="0.7" fill="#888888"/><circle cx="-9.9" cy="1.2" r="1.0" fill="#555555"/><circle cx="-11.9" cy="13.7" r="0.7" fill="#6a6a6a"/><circle cx="-8.7" cy="4.2" r="0.5" fill="#3a3a3a"/><circle cx="2.9" cy="-1.9" r="0.6" fill="#3a3a3a"/><circle cx="-0.4" cy="-0.9" r="0.5" fill="#6a6a6a"/><circle cx="-8.3" cy="-5.7" r="1.0" fill="#6a6a6a"/><circle cx="3.9" cy="3.1" r="0.5" fill="#555555"/><circle cx="-0.3" cy="4.8" r="1.3" fill="#555555"/><circle cx="-20.6" cy="5.9" r="1.1" fill="#888888"/><circle cx="-1.3" cy="9.5" r="1.3" fill="#888888"/><circle cx="16.3" cy="11.7" r="1.2" fill="#888888"/><circle cx="-0.4" cy="15.4" r="0.7" fill="#3a3a3a"/><circle cx="7.4" cy="6.1" r="1.1" fill="#3a3a3a"/><circle cx="2.9" cy="4.9" r="0.7" fill="#3a3a3a"/><circle cx="3.6" cy="-26.6" r="1.1" fill="#6a6a6a"/><circle cx="-30.9" cy="13.4" r="1.3" fill="#888888"/><circle cx="-1.7" cy="18.0" r="1.0" fill="#3a3a3a"/><circle cx="-18.9" cy="1.8" r="0.5" fill="#3a3a3a"/><circle cx="-5.8" cy="2.8" r="1.1" fill="#3a3a3a"/><circle cx="-4.7" cy="10.4" r="1.3" fill="#555555"/><circle cx="10.7" cy="0.8" r="0.8" fill="#555555"/><circle cx="-9.4" cy="1.9" r="1.4" fill="#3a3a3a"/><circle cx="-1.6" cy="12.1" r="0.6" fill="#3a3a3a"/><circle cx="-1.8" cy="3.7" r="0.6" fill="#888888"/><circle cx="-4.1" cy="9.7" r="0.7" fill="#3a3a3a"/><circle cx="2.4" cy="4.4" r="0.7" fill="#888888"/><circle cx="-1.6" cy="22.4" r="1.3" fill="#3a3a3a"/><circle cx="-5.9" cy="2.5" r="0.8" fill="#555555"/><circle cx="10.9" cy="17.2" r="1.2" fill="#555555"/><circle cx="5.5" cy="9.0" r="1.2" fill="#3a3a3a"/><circle cx="0.7" cy="2.9" r="0.9" fill="#3a3a3a"/><circle cx="0.3" cy="15.0" r="0.7" fill="#888888"/><circle cx="-17.6" cy="14.0" r="0.8" fill="#3a3a3a"/><circle cx="-5.0" cy="9.9" r="1.1" fill="#555555"/><circle cx="-7.2" cy="20.4" r="0.5" fill="#555555"/><circle cx="-15.2" cy="6.4" r="1.0" fill="#555555"/><circle cx="1.8" cy="3.9" r="0.9" fill="#555555"/><circle cx="2.8" cy="4.8" r="1.2" fill="#3a3a3a"/><circle cx="-15.6" cy="12.0" r="0.6" fill="#555555"/><circle cx="-7.1" cy="5.6" r="0.5" fill="#555555"/><circle cx="-4.8" cy="6.7" r="1.2" fill="#6a6a6a"/><circle cx="-8.4" cy="18.8" r="0.5" fill="#3a3a3a"/><circle cx="13.8" cy="12.0" r="1.1" fill="#888888"/><circle cx="-12.3" cy="3.6" r="1.3" fill="#888888"/><circle cx="-12.1" cy="4.1" r="0.7" fill="#555555"/><circle cx="-0.1" cy="-5.6" r="0.9" fill="#555555"/><circle cx="6.2" cy="15.7" r="1.3" fill="#3a3a3a"/><circle cx="13.7" cy="12.3" r="1.0" fill="#555555"/><circle cx="20.9" cy="9.3" r="0.9" fill="#555555"/><circle cx="3.2" cy="12.4" r="0.9" fill="#3a3a3a"/><circle cx="-13.6" cy="5.2" r="1.1" fill="#888888"/><circle cx="-0.7" cy="19.0" r="1.1" fill="#555555"/><circle cx="-3.3" cy="5.7" r="0.9" fill="#3a3a3a"/><circle cx="3.3" cy="18.0" r="0.4" fill="#555555"/><circle cx="22.0" cy="1.7" r="1.2" fill="#6a6a6a"/><circle cx="8.0" cy="10.5" r="0.7" fill="#3a3a3a"/><circle cx="-14.2" cy="19.4" r="1.1" fill="#888888"/><circle cx="7.0" cy="25.9" r="0.6" fill="#6a6a6a"/><circle cx="-5.4" cy="1.9" r="1.2" fill="#6a6a6a"/><circle cx="-11.2" cy="9.7" r="1.0" fill="#6a6a6a"/><circle cx="-4.0" cy="-4.0" r="1.2" fill="#555555"/><circle cx="-15.2" cy="-3.1" r="0.7" fill="#888888"/><circle cx="10.7" cy="-7.2" r="1.1" fill="#555555"/><circle cx="5.8" cy="2.2" r="0.4" fill="#555555"/><circle cx="-10.9" cy="1.9" r="0.8" fill="#6a6a6a"/><circle cx="-7.6" cy="3.5" r="1.1" fill="#3a3a3a"/><circle cx="-21.6" cy="13.4" r="0.8" fill="#888888"/><circle cx="-9.8" cy="7.6" r="1.1" fill="#888888"/><circle cx="-9.5" cy="14.8" r="0.6" fill="#555555"/><circle cx="7.0" cy="-4.7" r="1.3" fill="#888888"/><circle cx="7.5" cy="-2.0" r="0.8" fill="#888888"/><circle cx="-15.0" cy="15.2" r="1.3" fill="#3a3a3a"/><circle cx="-10.5" cy="3.0" r="0.9" fill="#555555"/><circle cx="10.5" cy="8.8" r="0.6" fill="#555555"/><circle cx="-17.2" cy="11.8" r="1.1" fill="#6a6a6a"/><circle cx="7.7" cy="7.4" r="0.5" fill="#555555"/><circle cx="-7.0" cy="19.0" r="0.7" fill="#3a3a3a"/><circle cx="-12.7" cy="-10.9" r="0.5" fill="#888888"/><circle cx="-11.4" cy="12.3" r="1.0" fill="#555555"/><circle cx="-7.2" cy="12.5" r="0.4" fill="#888888"/><circle cx="6.0" cy="9.0" r="0.9" fill="#6a6a6a"/><circle cx="-2.3" cy="13.1" r="0.5" fill="#555555"/><circle cx="-19.2" cy="-13.0" r="1.1" fill="#6a6a6a"/><circle cx="-10.3" cy="18.5" r="0.5" fill="#888888"/><circle cx="8.2" cy="-10.6" r="0.4" fill="#6a6a6a"/><circle cx="-16.1" cy="-4.8" r="0.5" fill="#888888"/><circle cx="6.0" cy="7.4" r="0.8" fill="#3a3a3a"/><circle cx="14.6" cy="-8.4" r="0.9" fill="#6a6a6a"/><circle cx="-6.0" cy="5.2" r="1.0" fill="#555555"/><circle cx="-9.7" cy="-6.3" r="0.8" fill="#555555"/><circle cx="-13.6" cy="17.5" r="1.3" fill="#6a6a6a"/><circle cx="-20.1" cy="14.0" r="1.1" fill="#555555"/><circle cx="16.1" cy="-5.0" r="0.9" fill="#888888"/><circle cx="1.0" cy="4.1" r="1.3" fill="#555555"/><circle cx="6.7" cy="12.0" r="1.1" fill="#888888"/><circle cx="-4.6" cy="4.9" r="1.0" fill="#3a3a3a"/><circle cx="-6.7" cy="9.9" r="1.0" fill="#3a3a3a"/><circle cx="0.7" cy="6.5" r="0.8" fill="#555555"/><circle cx="-5.8" cy="2.4" r="0.4" fill="#6a6a6a"/><circle cx="5.9" cy="4.3" r="1.0" fill="#555555"/><circle cx="2.0" cy="-12.2" r="0.4" fill="#6a6a6a"/><circle cx="8.6" cy="4.9" r="0.8" fill="#555555"/><circle cx="-14.1" cy="-15.5" r="0.7" fill="#6a6a6a"/><circle cx="7.4" cy="-13.4" r="1.0" fill="#3a3a3a"/><circle cx="11.3" cy="1.9" r="1.1" fill="#6a6a6a"/><circle cx="-2.0" cy="9.2" r="0.9" fill="#555555"/><circle cx="22.3" cy="-5.1" r="1.1" fill="#6a6a6a"/><circle cx="-10.8" cy="-2.5" r="1.1" fill="#888888"/><ellipse cx="-2" cy="6" rx="18" ry="15" fill="#666" opacity="0.35" filter="url(#blur3)"/><g transform="translate(10,-34)"><path d="M1,0 L1,21 L22,21 Z" fill="#c45050" stroke="#553030" stroke-width="1.2" stroke-linejoin="round"/><rect x="1.0" y="4.4" width="4.3" height="4.3" fill="#f0f0f0"/><rect x="5.5" y="8.8" width="4.3" height="4.3" fill="#f0f0f0"/><rect x="1.0" y="13.2" width="4.3" height="4.3" fill="#f0f0f0"/><rect x="10.0" y="13.2" width="4.3" height="4.3" fill="#f0f0f0"/><rect x="5.5" y="17.6" width="4.3" height="4.3" fill="#f0f0f0"/><rect x="14.5" y="17.6" width="4.3" height="4.3" fill="#f0f0f0"/></g><circle r="39" fill="none" stroke="#d8d8d8" stroke-width="1" opacity="0.6"/></g>
</svg>
<!--/ICONS-->

<!-- ===== LEFT DOCKER TOOL ICONS ===== -->
<svg class="a" style="left:0;top:180px" width="343" height="340" viewBox="0 180 343 340">
 <g fill="none" stroke="#d9d9d9" stroke-width="2.6">
  <path d="M-2,200 L5,196 L11,204 L6,213 L-2,213"/>
 </g>
 <path d="M0,198 L6,195 L11,202 L7,212 L0,212Z" fill="#d9d9d9"/>
 <line x1="3" y1="193" x2="12" y2="199" stroke="#d9d9d9" stroke-width="1.6"/>
 <line x1="0" y1="237.8" x2="265" y2="237.8" stroke="#555" stroke-width="1"/>
 <g fill="none" stroke="#d9d9d9" stroke-width="2.6" stroke-linejoin="round">
  <path d="M-8,252 A11.5,11.5 0 0 1 8,263.5 A11.5,11.5 0 0 1 -8,275"/>
  <path d="M27.7,261.9 L37.9,251.7 H51.8 V269.9 L43.8,275.7 H27.7Z"/>
  <path d="M71,252.4 L94.8,263.3 L71.5,275.7 L82.4,252.4 L84,249" stroke-linecap="round"/>
  <path d="M116,275.5 Q114,254 126.5,254 Q139,254 137,275.5"/>
  <path d="M116.5,254.5 H136.5" stroke-width="1.5"/>
  <path d="M162,261 Q168,252 178,253.5 Q173,262 174.5,272"/>
  <path d="M201,276 Q225,268 225,257 Q223,250 205,253" stroke-linecap="round"/>
 </g>
 <g fill="#d9d9d9">
  <circle cx="116.5" cy="254.5" r="2.8"/><circle cx="136.5" cy="254.5" r="2.8"/><rect x="123.5" y="251" width="6" height="6"/>
  <circle cx="214" cy="259" r="2.2"/>
  <path d="M268.5,251 L254,256 L257,259 L248,268 L250.5,270.5 L259,262 L262,265Z"/>
  <circle cx="248.5" cy="258" r="3"/><circle cx="251" cy="268" r="3"/><circle cx="261" cy="275" r="3"/>
  <line x1="251" y1="258" x2="256" y2="258" stroke="#d9d9d9" stroke-width="2"/>
 </g>
 <g fill="none" stroke="#d9d9d9" stroke-width="1.8">
  <rect x="158.5" y="257.5" width="6" height="6"/><rect x="175.5" y="250.5" width="6" height="6"/><rect x="171.5" y="270.5" width="6" height="6"/>
 </g>
 <line x1="0" y1="347.2" x2="48" y2="347.2" stroke="#555" stroke-width="1"/>
 <path d="M-3,368 L5,361 L8,364 L1,371 Z M-3,378 L3,372 L8,377 L2,383Z" fill="#d9d9d9"/>
 <path d="M29,372 L38,363 L48,372 L38,383 Z" fill="none" stroke="#d9d9d9" stroke-width="2.4"/>
 <path d="M31,372 H46 L38,382Z" fill="#d9d9d9"/>
 <line x1="34" y1="361" x2="38" y2="367" stroke="#d9d9d9" stroke-width="2"/>
 <circle cx="50" cy="383" r="2" fill="#d9d9d9"/>
 <line x1="0" y1="455" x2="183" y2="455" stroke="#555" stroke-width="1"/>
 <path d="M-6,471 A10,10 0 0 1 8,481 A10,10 0 0 1 -2,493" fill="none" stroke="#d9d9d9" stroke-width="2.6" stroke-dasharray="4 3"/>
 <g stroke="#d9d9d9" stroke-width="2.4" fill="none">
  <path d="M38,468 V484 M30,472 L46,480 M46,472 L30,480 M31,476 H45"/>
  <line x1="40" y1="480" x2="51" y2="492" stroke-width="3"/>
  <path d="M71,474 V470 H75 M81,470 H85 M71,482 V486 M71,491 V494 H75 M81,494 H85 M91,494 H95 V490" stroke-width="2.6"/>
  <path d="M114,472 V488 Q116,494 124,494 H130 Q138,494 139,486 V472" stroke-dasharray="4 3" stroke-width="2.6"/>
  <path d="M158,474 V470 H162 M158,482 V486 M158,491 V494 H162 M168,494 H172 M178,494 H182 V490" stroke-width="2.6"/>
  <path d="M165,480 Q166,468 174,468 Q182,470 181,478 Q180,484 177,486"/>
 </g>
 <g fill="#d9d9d9">
  <path d="M78,490 L90,476 L94,480 L82,492 L77,494Z"/><path d="M88,474 Q92,466 96,470 Q98,474 92,478Z"/>
  <circle cx="115" cy="472" r="3"/><circle cx="138" cy="472" r="3"/><rect x="123" y="469" width="7" height="6"/>
  <circle cx="170" cy="477" r="2"/>
 </g>
</svg>

<!-- ===== KANVASBUDDY ===== -->
<div class="a" style="left:343px;top:562px;width:199.5px;height:213.5px;background:#474747;border:1px solid #3a3a3a;border-left:none;box-sizing:border-box"></div><div class="a" style="left:336px;top:563px;width:8px;height:212px;background:#474747"></div>
<div class="t" style="left:185px;top:568px;font-size:15px;color:#8c8c8c">KanvasBuddy</div>
<svg class="a" style="left:0;top:0" width="1920" height="1289" viewBox="0 0 1920 1289">
 <defs><linearGradient id="kbb" x1="0" y1="0" x2="0" y2="1"><stop offset="0" stop-color="#4c4c4c"/><stop offset="1" stop-color="#3e3e3e"/></linearGradient>
 <linearGradient id="blu" x1="0" y1="0" x2="0" y2="1"><stop offset="0" stop-color="#6288ad"/><stop offset="1" stop-color="#4c7092"/></linearGradient></defs>
 <rect x="494" y="568" width="14.5" height="14.5" rx="1.5" fill="#5a80a6"/>
 <path d="M497,580 L502,575 M499,572 L505,578 L507,576 L502,571Z" stroke="#dfe8f0" stroke-width="1.8" fill="#dfe8f0"/>
 <rect x="523" y="568" width="14" height="14.5" fill="none" stroke="#8a8a8a" stroke-width="1.2"/>
 <path d="M524,569 L536,582 M536,569 L524,582" stroke="#8a8a8a" stroke-width="1.2"/>
 <g stroke="#353535" stroke-width="1.5" fill="url(#kbb)">
  <rect x="205.8" y="596.2" width="55" height="55.8" rx="5"/>
  <rect x="290.8" y="596.2" width="55" height="55.8" rx="5"/>
  <rect x="375.8" y="596.2" width="55" height="55.8" rx="5"/>
  <rect x="460.3" y="596.2" width="55" height="55.8" rx="5"/>
 </g>
 <g fill="#dcdcdc">
  <rect x="218" y="609" width="13" height="13"/><rect x="234" y="609" width="13" height="13"/><rect x="218" y="625" width="13" height="13"/><rect x="234" y="625" width="13" height="13"/>
 </g>
 <g fill="#474747"><rect x="220.5" y="613.5" width="5" height="5"/><rect x="236.5" y="613.5" width="5" height="5"/><rect x="220.5" y="629.5" width="5" height="5"/><rect x="236.5" y="629.5" width="5" height="5"/></g><g fill="#dcdcdc"><rect x="226" y="610.5" width="2.5" height="2.5"/><rect x="242" y="610.5" width="2.5" height="2.5"/><rect x="226" y="626.5" width="2.5" height="2.5"/><rect x="242" y="626.5" width="2.5" height="2.5"/></g>
 <circle cx="318" cy="623.5" r="12.5" fill="none" stroke="url(#kri)" stroke-width="3"/>
 <circle cx="318" cy="623.5" r="10.5" fill="#ececec"/>
 <path d="M312,629 L318,615 L324,629Z" fill="#c83030"/>
 <g fill="none" stroke="#dcdcdc" stroke-width="2.8">
  <rect x="392" y="610" width="24" height="24"/>
  <path d="M388,616 V637.5 H409"/>
 </g>
 <g fill="none" stroke="#dcdcdc" stroke-width="3.6">
  <circle cx="484" cy="620" r="8.5"/>
  <line x1="490" y1="626" x2="500" y2="636" stroke-width="4.5"/>
 </g>
 <!-- sliders -->
 <rect x="192.8" y="665.8" width="337.6" height="26.4" rx="3" fill="#303030"/>
 <rect x="193.5" y="666.5" width="165.5" height="25" rx="2.5" fill="url(#blu)" stroke="#7a9cc0" stroke-width="0.8"/>
 <rect x="192.8" y="702.5" width="337.6" height="25.7" rx="3" fill="#303030"/>
 <rect x="193.5" y="703.2" width="336" height="24.3" rx="2.5" fill="url(#blu)" stroke="#7a9cc0" stroke-width="0.8"/>
 <g stroke="#353535" stroke-width="1.5" fill="url(#kbb)">
  <rect x="229" y="741" width="27" height="27.8" rx="4"/>
  <rect x="308.6" y="741" width="27.4" height="27.8" rx="4"/>
  <rect x="387.8" y="741" width="27.2" height="27.8" rx="4"/>
  <rect x="468" y="741" width="26.8" height="27.8" rx="4"/>
 </g>
 <g fill="none" stroke="#dcdcdc" stroke-width="1.8">
  <path d="M234.5,746 H250.5 V757.5 L245,763.5 H234.5Z"/>
  <path d="M315,758 A8,8 0 0 1 327,747 M329.5,751 A8,8 0 0 1 317.5,762.5"/>
  <circle cx="481.4" cy="755" r="8"/>
  <path d="M470,744 L493,767 M493,744 L470,767" stroke-width="2.4"/>
 </g>
 <path d="M251,757 V759 L246,764 H244 V757Z" fill="#dcdcdc"/>
 <path d="M392,764 L400,756 M397,748 L404,744 L411,751 L407,758 Z M396,752 L407,763" stroke="#dcdcdc" stroke-width="2.2" fill="#dcdcdc"/>
 <g fill="#888"><rect x="338" y="779" width="3" height="3"/><rect x="338" y="784" width="3" height="3"/></g>
</svg>
<div class="t" style="left:307px;top:670px;font-size:20px;color:#f0f0f0">Size: 127 px</div>
<div class="t" style="left:294px;top:706px;font-size:20.6px;color:#f0f0f0">Opacity: 100%</div>

<!-- ===== BRUSH SETTINGS PANEL ===== -->
<div class="a" style="left:1334.5px;top:251.5px;width:334.5px;height:734px;background:#474747;border:1px solid #3c3c3c;box-sizing:border-box"></div>
<div class="a" style="left:1351px;top:320.7px;width:300px;height:648px;border:1px solid #3d3d3d;border-top-color:#3a3a3a;box-sizing:border-box;background:#464646"></div>
<svg class="a" style="left:0;top:0" width="1920" height="1289" viewBox="0 0 1920 1289">
 <rect x="1350.5" y="267.2" width="40.5" height="40.3" fill="#d4d4d4" stroke="#333" stroke-width="1"/>
 <ellipse cx="1365" cy="298" rx="8" ry="6" fill="url(#blob)"/>
 <path d="M1368,284 Q1371,280 1378,276 L1389,267 L1391,269 L1381,279 Q1377,286 1371,288 Q1366,289 1368,284Z" fill="#f2f2f2" stroke="#b8b8b8" stroke-width="0.8"/>
 <path d="M1380,276 L1389,267 L1391.5,269.5 L1382.5,278.5Z" fill="#7ea6cc"/>
 <path d="M1358,277 L1359.5,273.5 L1361,277 Q1361,279 1359.5,279 Q1358,279 1358,277Z" fill="#7cc3ff"/>
 <g fill="none" stroke="#dcdcdc" stroke-width="3.6">
  <path d="M1566,291.5 A11.5,11.5 0 0 1 1582,276.5"/>
  <path d="M1588,282.5 A11.5,11.5 0 0 1 1572,297.5"/>
 </g>
 <path d="M1563,287 L1570,293.5 L1563,297.5Z M1591,287 L1584,280.5 L1591,276.5Z" fill="#dcdcdc"/>
 <g stroke="#dcdcdc" stroke-width="2" fill="none">
  <line x1="1619" y1="280" x2="1642" y2="280"/><line x1="1624" y1="294.5" x2="1642" y2="294.5"/>
  <circle cx="1622.5" cy="294.5" r="3.2" fill="#474747"/>
 </g>
 <circle cx="1630.5" cy="280" r="3.5" fill="#dcdcdc"/>
 <!-- size slider -->
 <rect x="1369.7" y="341.3" width="223.3" height="37.5" rx="3" fill="#323232" stroke="#2a2a2a" stroke-width="1"/>
 <rect x="1370.2" y="341.8" width="100" height="36.5" fill="#537598"/>
 <rect x="1567.6" y="341.8" width="25" height="36.5" fill="#3a3a3a" stroke="#505050" stroke-width="1"/>
 <path d="M1573,358 H1587 L1580,350.5Z M1573,362.5 H1587 L1580,370Z" fill="#8a8a8a"/>
 <!-- opacity slider -->
 <rect x="1369.9" y="417" width="222.7" height="37.3" rx="3" fill="#323232" stroke="#2a2a2a" stroke-width="1"/>
 <rect x="1370.4" y="417.5" width="197.4" height="36.3" fill="#537598"/>
 <rect x="1567.8" y="417.5" width="24.8" height="36.3" fill="#3a3a3a" stroke="#505050" stroke-width="1"/>
 <path d="M1573,433.5 H1587 L1580,426Z M1573,438 H1587 L1580,445.5Z" fill="#8a8a8a"/>
 <!-- combo -->
 <rect x="1370" y="491.3" width="223" height="38.4" rx="4" fill="url(#cbx)" stroke="#333" stroke-width="1.2"/>
 <path d="M1566.5,507.5 H1581 L1573.8,514.5Z" fill="#b0b0b0"/>
 <!-- smudge slider -->
 <rect x="1369.9" y="567.2" width="222.7" height="36.8" rx="3" fill="#323232" stroke="#2a2a2a" stroke-width="1"/>
 <rect x="1370.4" y="567.7" width="117.2" height="35.8" fill="#537598"/>
 <rect x="1567.8" y="567.7" width="24.8" height="35.8" fill="#3a3a3a" stroke="#505050" stroke-width="1"/>
 <path d="M1573,583.5 H1587 L1580,576Z M1573,588 H1587 L1580,595.5Z" fill="#8a8a8a"/>
</svg>
<div class="t" style="left:1402px;top:279px;font-size:21px;color:#e2e2e2">k) Blender Blur</div>
<div class="t" style="left:1401.6px;top:351px;font-size:19.5px;color:#eef2f6">Size: 127.00 px</div>
<div class="t" style="left:1408px;top:427.5px;font-size:20.5px;color:#eef2f6">Opacity: 1.00</div>
<div class="t" style="left:1378.4px;top:500.5px;font-size:21px;color:#e2e2e2">Smearing</div>
<div class="t" style="left:1384.7px;top:577px;font-size:20.3px;color:#eef2f6">SmudgeRate: 0.60</div>

<!-- ===== BOTTOM CANVAS BAR ===== -->
<svg class="a" style="left:0;top:0" width="1920" height="1289" viewBox="0 0 1920 1289">
 <defs><linearGradient id="btg" x1="0" y1="0" x2="0" y2="1"><stop offset="0" stop-color="#4a4a4a"/><stop offset="1" stop-color="#3a3a3a"/></linearGradient></defs>
 <g fill="url(#btg)" stroke="#2a2a2a" stroke-width="1.5">
  <rect x="572" y="1026.5" width="61.5" height="61.5" rx="4"/>
  <rect x="638.5" y="1026.5" width="62" height="61.5" rx="4"/>
  <rect x="1161.5" y="1026.5" width="143" height="61.5" rx="4"/>
 </g>
 <rect x="707" y="1053" width="449" height="9" rx="4.5" fill="#3a3a3a"/>
 <rect x="708" y="1054" width="56" height="7" rx="3.5" fill="#5b7fa3"/>
 <rect x="752" y="1046" width="23" height="23" rx="5" fill="#444" stroke="#2a2a2a" stroke-width="1.5"/>
 <g fill="none" stroke="#d9d9d9" stroke-width="2.2">
  <path d="M597.5,1047 H592 V1068 H597.5 M606,1047 H611.5 V1068 H606"/>
  <line x1="601.8" y1="1043" x2="601.8" y2="1072" stroke-width="2.5"/>
  <path d="M660,1046 H677.5 V1061.5 L671.5,1068 H660Z"/>
  <path d="M1200,1048 H1197 V1051 M1212,1048 H1215 V1051 M1200,1068 H1197 V1065 M1212,1068 H1215 V1065" stroke-width="1.8"/>
  <rect x="1199.5" y="1049.5" width="14" height="17" stroke-width="2.4"/>
 </g>
 <path d="M592,1047 H597.5 V1052 H592Z M606,1047 H611.5 V1052 H606Z" fill="#d9d9d9"/>
 <path d="M678.5,1060.5 V1062 L672,1069 H670.5 V1060.5Z" fill="#d9d9d9"/>
</svg>
<div class="t" style="left:1222px;top:1048px;font-size:21px;color:#e0e0e0;letter-spacing:-0.5px">100%</div>


<!-- ===== RIGHT DOCKER ===== -->
<div class="a" style="left:1729px;top:115px;width:14px;height:1174px;background:#434343"></div>
<div class="a" style="left:1733px;top:118px;width:1px;height:540px;background:#3a3a3a"></div>
<div class="a" style="left:1742px;top:116.5px;width:128px;height:43px;border:1.5px solid #5b5b5b;border-bottom:none;border-radius:4px 4px 0 0;box-sizing:border-box;background:#474747"></div>
<div class="a" style="left:1871px;top:121px;width:60px;height:38px;border:1.5px solid #555;border-bottom:none;border-radius:4px 4px 0 0;box-sizing:border-box;background:#434343"></div>
<div class="a" style="left:1870px;top:158.5px;width:50px;height:1.5px;background:#555"></div>
<div class="t" style="left:1763px;top:130px;font-size:20px;color:#dedede">Overview</div>
<div class="t" style="left:1891px;top:131px;font-size:20px;color:#dedede">Adv</div>
<div class="t" style="left:1785px;top:166px;font-size:20px;color:#dedede">Overview</div>
<div class="a" style="left:1742px;top:655.5px;width:165px;height:40.5px;border:1.5px solid #5b5b5b;border-bottom:none;border-radius:4px 4px 0 0;box-sizing:border-box;background:#474747"></div>
<div class="a" style="left:1909px;top:659px;width:30px;height:37px;border:1.5px solid #555;border-bottom:none;border-radius:4px 4px 0 0;box-sizing:border-box;background:#434343"></div>
<div class="t" style="left:1763px;top:669px;font-size:19.3px;color:#dedede">Brush Presets</div>
<div class="t" style="left:1785.5px;top:705px;font-size:19.3px;color:#dedede">Brush Presets</div>
<div class="a" style="left:1744.7px;top:731.5px;width:190px;height:36.5px;border:1.5px solid #5a5a5a;border-bottom-color:#333;border-radius:4px;box-sizing:border-box;background:#434343"></div>
<div class="t" style="left:1778px;top:741px;font-size:20px;color:#dedede">My Favorites</div>
<svg class="a" style="left:0;top:0" width="1920" height="1289" viewBox="0 0 1920 1289">
 <g fill="none" stroke="#dcdcdc" stroke-width="2"><circle cx="1759" cy="175.5" r="13.5"/><circle cx="1759.2" cy="713.2" r="13.5"/></g>
 <g fill="#dcdcdc">
  <rect x="1752" y="174" width="14.5" height="7.5"/><path d="M1754,174.5 A5,5 0 0 1 1764.5,174.5 H1762 A2.8,2.8 0 0 0 1756.5,174.5Z"/>
  <rect x="1752.2" y="711.7" width="14.5" height="7.5"/><path d="M1754.2,712.2 A5,5 0 0 1 1764.7,712.2 H1762.2 A2.8,2.8 0 0 0 1756.7,712.2Z"/>
 </g>
 <path d="M1760.5,740 L1763,746.8 L1770,746.8 L1764.5,751 L1766.5,758 L1760.5,753.8 L1754.5,758 L1756.5,751 L1751,746.8 L1758,746.8Z" fill="#dcdcdc"/>
 <g fill="#6a6a6a"><rect x="1736" y="757" width="3" height="2"/><rect x="1736" y="762" width="3" height="2"/><rect x="1736" y="767" width="3" height="2"/><rect x="1736" y="772" width="3" height="2"/><rect x="1736" y="777" width="3" height="2"/><rect x="1736" y="782" width="3" height="2"/></g>
</svg>
<svg class="a" style="left:0;top:0" width="1920" height="1289" viewBox="0 0 1920 1289">
<defs><clipPath id="tc"><rect x="-52.3" y="-52.3" width="104.6" height="104.6"/></clipPath></defs><clipPath id="gclip"><rect x="1744" y="771" width="176" height="518"/></clipPath><g clip-path="url(#gclip)"><rect x="1744" y="770" width="176" height="519" fill="#333"/><g transform="translate(1798.7,778.5)" clip-path="url(#tc)"><rect x="-60" y="-60" width="120" height="120" fill="#cdcdcd"/><g transform="scale(1.3)"><rect x="-32" y="8" width="6" height="6" fill="#f2f2f2" opacity="1.0"/><rect x="-32" y="14" width="6" height="6" fill="#9c9c9c" opacity="1.0"/><rect x="-32" y="20" width="6" height="6" fill="#f2f2f2" opacity="1.0"/><rect x="-32" y="26" width="6" height="6" fill="#9c9c9c" opacity="1.0"/><rect x="-26" y="8" width="6" height="6" fill="#9c9c9c" opacity="0.88"/><rect x="-26" y="14" width="6" height="6" fill="#f2f2f2" opacity="0.88"/><rect x="-26" y="20" width="6" height="6" fill="#9c9c9c" opacity="0.88"/><rect x="-26" y="26" width="6" height="6" fill="#f2f2f2" opacity="0.88"/><rect x="-20" y="8" width="6" height="6" fill="#f2f2f2" opacity="0.76"/><rect x="-20" y="14" width="6" height="6" fill="#9c9c9c" opacity="0.76"/><rect x="-20" y="20" width="6" height="6" fill="#f2f2f2" opacity="0.76"/><rect x="-20" y="26" width="6" height="6" fill="#9c9c9c" opacity="0.76"/><rect x="-14" y="8" width="6" height="6" fill="#9c9c9c" opacity="0.64"/><rect x="-14" y="14" width="6" height="6" fill="#f2f2f2" opacity="0.64"/><rect x="-14" y="20" width="6" height="6" fill="#9c9c9c" opacity="0.64"/><rect x="-14" y="26" width="6" height="6" fill="#f2f2f2" opacity="0.64"/><rect x="-8" y="8" width="6" height="6" fill="#f2f2f2" opacity="0.52"/><rect x="-8" y="14" width="6" height="6" fill="#9c9c9c" opacity="0.52"/><rect x="-8" y="20" width="6" height="6" fill="#f2f2f2" opacity="0.52"/><rect x="-8" y="26" width="6" height="6" fill="#9c9c9c" opacity="0.52"/><rect x="-2" y="8" width="6" height="6" fill="#9c9c9c" opacity="0.4"/><rect x="-2" y="14" width="6" height="6" fill="#f2f2f2" opacity="0.4"/><rect x="-2" y="20" width="6" height="6" fill="#9c9c9c" opacity="0.4"/><rect x="-2" y="26" width="6" height="6" fill="#f2f2f2" opacity="0.4"/><rect x="4" y="8" width="6" height="6" fill="#f2f2f2" opacity="0.28"/><rect x="4" y="14" width="6" height="6" fill="#9c9c9c" opacity="0.28"/><rect x="4" y="20" width="6" height="6" fill="#f2f2f2" opacity="0.28"/><rect x="4" y="26" width="6" height="6" fill="#9c9c9c" opacity="0.28"/><g transform="rotate(-32)"><rect x="-16" y="-20" width="26" height="22" rx="2" fill="#f4f4f4" stroke="#b0b0b0" stroke-width="0.8"/><rect x="-16" y="2" width="26" height="7" rx="1" fill="#cfcfcf"/><rect x="6" y="-22" width="26" height="24" rx="2" fill="#2e4f9c"/><rect x="6" y="2" width="26" height="7" fill="#203a78"/><text x="10" y="-8" font-size="7.5" fill="#c8d4f0" font-family="Liberation Sans">ERA</text></g></g></g>
<g transform="translate(1908.3,778.5)" clip-path="url(#tc)"><rect x="-60" y="-60" width="120" height="120" fill="#cdcdcd"/><g transform="scale(1.3)"><rect x="-20.9" y="4.6" width="5.2" height="5.2" fill="#ffffff"/><rect x="-19.5" y="8.3" width="5.2" height="5.2" fill="#9a9a9a"/><rect x="-17.3" y="11.7" width="5.2" height="5.2" fill="#ffffff"/><rect x="-14.6" y="14.6" width="5.2" height="5.2" fill="#9a9a9a"/><rect x="-11.2" y="16.9" width="5.2" height="5.2" fill="#ffffff"/><rect x="-7.6" y="18.5" width="5.2" height="5.2" fill="#9a9a9a"/><rect x="-3.6" y="19.3" width="5.2" height="5.2" fill="#ffffff"/><rect x="0.4" y="19.3" width="5.2" height="5.2" fill="#9a9a9a"/><rect x="4.4" y="18.5" width="5.2" height="5.2" fill="#ffffff"/><rect x="8.0" y="16.9" width="5.2" height="5.2" fill="#9a9a9a"/><rect x="11.4" y="14.6" width="5.2" height="5.2" fill="#ffffff"/><rect x="14.1" y="11.7" width="5.2" height="5.2" fill="#9a9a9a"/><rect x="16.3" y="8.3" width="5.2" height="5.2" fill="#ffffff"/><rect x="17.7" y="4.6" width="5.2" height="5.2" fill="#9a9a9a"/><rect x="-15.2" y="5.0" width="4.2" height="4.2" fill="#a0a0a0"/><rect x="-13.5" y="8.3" width="4.2" height="4.2" fill="#ffffff"/><rect x="-11.1" y="11.0" width="4.2" height="4.2" fill="#a0a0a0"/><rect x="-8.1" y="13.1" width="4.2" height="4.2" fill="#ffffff"/><rect x="-4.7" y="14.5" width="4.2" height="4.2" fill="#a0a0a0"/><rect x="-1.1" y="14.9" width="4.2" height="4.2" fill="#ffffff"/><rect x="2.5" y="14.5" width="4.2" height="4.2" fill="#a0a0a0"/><rect x="5.9" y="13.1" width="4.2" height="4.2" fill="#ffffff"/><rect x="8.9" y="11.0" width="4.2" height="4.2" fill="#a0a0a0"/><rect x="11.3" y="8.3" width="4.2" height="4.2" fill="#ffffff"/><rect x="13.0" y="5.0" width="4.2" height="4.2" fill="#a0a0a0"/><path d="M-0.4,-1.6 L35.6,-33.6 L24.4,-46.4 L-11.6,-14.4Z" fill="#3558c0"/><path d="M-1.0,-10.8 L30.0,-38.8 L26.0,-43.2 L-5.0,-15.2Z" fill="#5f86e6" opacity="0.7"/><path d="M6.3,-11.4 L14.3,-18.4 L9.7,-23.6 L1.7,-16.6Z" fill="#2848a0" opacity="0.8"/><path d="M-9.8,5.2 L-0.8,-3.8 L-9.2,-12.2 L-18.2,-3.2Z" fill="#f0f0f0" stroke="#a8a8a8" stroke-width="0.8"/></g></g>
<g transform="translate(1798.7,886)" clip-path="url(#tc)"><rect x="-60" y="-60" width="120" height="120" fill="#cdcdcd"/><g transform="scale(1.3)"><path d="M-14,27 Q2,16 36,12 L37,21 Q14,26 -4,34 Q-14,37 -14,27Z" fill="#1e1e1e"/><path d="M-6.9,9.1 L9.6,-0.4 L0.4,-9.6 L-9.1,6.9Z" fill="#d8d8d8" stroke="#666" stroke-width="0.8"/><path d="M9.8,0.7 L48.8,-32.3 L39.2,-43.7 L0.2,-10.7Z" fill="#262626"/><path d="M10.3,-9.5 L41.3,-37.5 L38.7,-40.5 L7.7,-12.5Z" fill="#5a5a5a"/><path d="M10.5,0.5 L14.5,-3.5 L3.5,-14.5 L-0.5,-10.5Z" fill="#bcbcbc"/><circle cx="-8" cy="8.5" r="2" fill="#222"/></g></g>
<g transform="translate(1908.3,886)" clip-path="url(#tc)"><rect x="-60" y="-60" width="120" height="120" fill="#cdcdcd"/><g transform="scale(1.3)"><g filter="url(#blur1)"><circle cx="-8.1" cy="19.5" r="4.8" fill="#ffffff" opacity="0.34"/><circle cx="18.4" cy="4.0" r="4.4" fill="#ffffff" opacity="0.39"/><circle cx="14.3" cy="-0.0" r="2.9" fill="#7a3a40" opacity="0.36"/><circle cx="20.8" cy="22.6" r="3.8" fill="#ffffff" opacity="0.49"/><circle cx="5.2" cy="21.9" r="2.5" fill="#7a3a40" opacity="0.45"/><circle cx="-33.8" cy="-2.5" r="4.6" fill="#9a5a60" opacity="0.21"/><circle cx="-7.4" cy="14.5" r="4.5" fill="#9a5a60" opacity="0.27"/><circle cx="-18.6" cy="-3.8" r="2.3" fill="#9a5a60" opacity="0.28"/><circle cx="27.8" cy="37.8" r="4.5" fill="#9a5a60" opacity="0.28"/><circle cx="12.0" cy="17.5" r="2.1" fill="#9a5a60" opacity="0.43"/><circle cx="-11.6" cy="31.6" r="3.2" fill="#7a3a40" opacity="0.45"/><circle cx="-38.0" cy="4.8" r="4.7" fill="#ffffff" opacity="0.31"/><circle cx="8.8" cy="13.6" r="3.7" fill="#7a3a40" opacity="0.43"/><circle cx="-20.2" cy="-0.3" r="3.0" fill="#ffffff" opacity="0.43"/><circle cx="-30.2" cy="6.3" r="2.3" fill="#7a3a40" opacity="0.34"/><circle cx="-5.9" cy="24.6" r="2.6" fill="#9a5a60" opacity="0.26"/><circle cx="10.3" cy="1.5" r="3.9" fill="#7a3a40" opacity="0.32"/><circle cx="27.3" cy="-4.0" r="4.6" fill="#9a5a60" opacity="0.29"/><circle cx="20.4" cy="4.8" r="3.2" fill="#9a5a60" opacity="0.39"/><circle cx="-31.4" cy="37.6" r="2.6" fill="#ffffff" opacity="0.20"/><circle cx="2.3" cy="30.9" r="3.2" fill="#7a3a40" opacity="0.23"/><circle cx="0.5" cy="6.2" r="3.8" fill="#ffffff" opacity="0.39"/><circle cx="-29.6" cy="20.7" r="4.5" fill="#7a3a40" opacity="0.46"/><circle cx="-25.9" cy="2.5" r="4.7" fill="#9a5a60" opacity="0.27"/><circle cx="-25.5" cy="27.1" r="4.8" fill="#7a3a40" opacity="0.41"/><circle cx="-12.4" cy="16.3" r="2.2" fill="#7a3a40" opacity="0.23"/><circle cx="-35.4" cy="36.4" r="2.7" fill="#9a5a60" opacity="0.32"/><circle cx="-10.2" cy="34.0" r="3.5" fill="#9a5a60" opacity="0.25"/><circle cx="9.5" cy="-1.1" r="2.7" fill="#9a5a60" opacity="0.40"/><circle cx="2.6" cy="-0.9" r="2.6" fill="#7a3a40" opacity="0.42"/><circle cx="-33.4" cy="13.3" r="2.7" fill="#7a3a40" opacity="0.25"/><circle cx="-13.7" cy="20.0" r="2.4" fill="#ffffff" opacity="0.24"/><circle cx="-8.3" cy="9.9" r="4.2" fill="#9a5a60" opacity="0.38"/><circle cx="-28.7" cy="-2.5" r="2.1" fill="#ffffff" opacity="0.41"/><circle cx="25.5" cy="-3.1" r="3.9" fill="#ffffff" opacity="0.22"/><circle cx="-17.5" cy="1.7" r="2.2" fill="#ffffff" opacity="0.36"/><circle cx="10.6" cy="33.8" r="4.2" fill="#9a5a60" opacity="0.24"/><circle cx="25.6" cy="10.3" r="2.3" fill="#ffffff" opacity="0.47"/><circle cx="19.5" cy="13.5" r="4.4" fill="#ffffff" opacity="0.37"/><circle cx="3.2" cy="12.1" r="3.7" fill="#9a5a60" opacity="0.22"/><circle cx="-32.0" cy="0.9" r="2.8" fill="#ffffff" opacity="0.42"/><circle cx="-12.4" cy="26.9" r="3.7" fill="#ffffff" opacity="0.34"/><circle cx="-2.3" cy="17.8" r="3.5" fill="#ffffff" opacity="0.38"/><circle cx="-6.3" cy="5.7" r="4.1" fill="#ffffff" opacity="0.43"/><circle cx="5.6" cy="16.4" r="4.7" fill="#ffffff" opacity="0.29"/><circle cx="6.8" cy="4.5" r="2.5" fill="#ffffff" opacity="0.40"/><circle cx="-8.8" cy="33.5" r="3.0" fill="#9a5a60" opacity="0.28"/><circle cx="3.9" cy="29.8" r="4.3" fill="#7a3a40" opacity="0.46"/><circle cx="-12.6" cy="20.5" r="2.9" fill="#7a3a40" opacity="0.24"/><circle cx="-14.9" cy="33.6" r="2.1" fill="#7a3a40" opacity="0.49"/><circle cx="-19.7" cy="3.1" r="3.4" fill="#ffffff" opacity="0.48"/><circle cx="16.8" cy="12.1" r="3.6" fill="#9a5a60" opacity="0.29"/><circle cx="17.4" cy="37.2" r="3.4" fill="#7a3a40" opacity="0.45"/><circle cx="-19.6" cy="21.5" r="4.0" fill="#ffffff" opacity="0.37"/><circle cx="-17.6" cy="29.2" r="2.1" fill="#7a3a40" opacity="0.32"/><circle cx="-25.5" cy="28.3" r="2.8" fill="#7a3a40" opacity="0.44"/><circle cx="26.9" cy="0.8" r="2.3" fill="#9a5a60" opacity="0.40"/><circle cx="15.3" cy="36.3" r="4.1" fill="#7a3a40" opacity="0.45"/><circle cx="-21.1" cy="26.0" r="4.3" fill="#9a5a60" opacity="0.41"/><circle cx="-26.2" cy="7.4" r="3.0" fill="#9a5a60" opacity="0.48"/><circle cx="-5.0" cy="37.9" r="2.5" fill="#9a5a60" opacity="0.47"/><circle cx="-32.2" cy="35.2" r="4.2" fill="#7a3a40" opacity="0.34"/><circle cx="-25.0" cy="33.3" r="2.0" fill="#9a5a60" opacity="0.37"/><circle cx="20.0" cy="29.5" r="4.8" fill="#ffffff" opacity="0.30"/><circle cx="26.8" cy="0.2" r="4.6" fill="#9a5a60" opacity="0.48"/><circle cx="-29.9" cy="6.2" r="3.2" fill="#7a3a40" opacity="0.49"/><circle cx="-2.6" cy="29.2" r="3.0" fill="#9a5a60" opacity="0.46"/><circle cx="-15.0" cy="-0.5" r="3.3" fill="#9a5a60" opacity="0.33"/><circle cx="-19.8" cy="34.6" r="2.7" fill="#7a3a40" opacity="0.33"/><circle cx="-35.7" cy="18.4" r="4.1" fill="#7a3a40" opacity="0.34"/><circle cx="28.0" cy="33.8" r="3.6" fill="#9a5a60" opacity="0.41"/><circle cx="24.4" cy="16.7" r="4.8" fill="#7a3a40" opacity="0.43"/><circle cx="-9.0" cy="19.5" r="4.5" fill="#9a5a60" opacity="0.39"/><circle cx="-3.5" cy="31.4" r="3.7" fill="#ffffff" opacity="0.40"/><circle cx="25.0" cy="32.5" r="3.8" fill="#ffffff" opacity="0.46"/><circle cx="25.9" cy="18.0" r="3.7" fill="#7a3a40" opacity="0.32"/><circle cx="-30.5" cy="-3.8" r="3.1" fill="#9a5a60" opacity="0.49"/><circle cx="-3.9" cy="12.8" r="4.4" fill="#9a5a60" opacity="0.24"/><circle cx="-31.8" cy="3.0" r="4.8" fill="#ffffff" opacity="0.32"/><circle cx="25.2" cy="34.8" r="2.8" fill="#ffffff" opacity="0.35"/><circle cx="-15.6" cy="33.8" r="4.8" fill="#ffffff" opacity="0.36"/><circle cx="-30.8" cy="13.6" r="2.1" fill="#ffffff" opacity="0.24"/><circle cx="13.4" cy="-3.0" r="2.6" fill="#7a3a40" opacity="0.20"/><circle cx="-19.3" cy="26.4" r="2.7" fill="#ffffff" opacity="0.23"/><circle cx="10.2" cy="1.2" r="3.5" fill="#ffffff" opacity="0.42"/><circle cx="8.3" cy="32.9" r="2.1" fill="#9a5a60" opacity="0.32"/><circle cx="-3.1" cy="2.7" r="2.6" fill="#9a5a60" opacity="0.36"/><circle cx="-23.6" cy="5.1" r="3.6" fill="#9a5a60" opacity="0.46"/><circle cx="-22.6" cy="27.1" r="4.4" fill="#7a3a40" opacity="0.29"/><circle cx="-17.2" cy="34.8" r="2.7" fill="#7a3a40" opacity="0.47"/></g><path d="M-24,-24 Q-26,-38 -12,-38 L26,-32 Q42,-26 40,-8 Q38,6 28,4 L-18,-14 Q-24,-18 -24,-24Z" fill="#d8c080" stroke="#1e1e1e" stroke-width="1.8"/><ellipse cx="-11.0" cy="-25.8" rx="2.4" ry="1.6" fill="#a08040"/><ellipse cx="19.8" cy="-25.3" rx="2.4" ry="1.6" fill="#a08040"/><ellipse cx="-13.0" cy="-10.4" rx="2.4" ry="1.6" fill="#a08040"/><ellipse cx="3.9" cy="-11.5" rx="2.4" ry="1.6" fill="#a08040"/><ellipse cx="-11.4" cy="-21.5" rx="2.4" ry="1.6" fill="#a08040"/><ellipse cx="17.6" cy="-31.5" rx="2.4" ry="1.6" fill="#a08040"/><ellipse cx="-7.6" cy="-14.3" rx="2.4" ry="1.6" fill="#a08040"/><ellipse cx="29.4" cy="-6.8" rx="2.4" ry="1.6" fill="#a08040"/><ellipse cx="-12.0" cy="-18.9" rx="2.4" ry="1.6" fill="#a08040"/><ellipse cx="21.4" cy="-18.9" rx="2.4" ry="1.6" fill="#a08040"/><ellipse cx="17.7" cy="-27.1" rx="2.4" ry="1.6" fill="#a08040"/><ellipse cx="-14.3" cy="-29.2" rx="2.4" ry="1.6" fill="#a08040"/><ellipse cx="-16.1" cy="-17.7" rx="2.4" ry="1.6" fill="#a08040"/><ellipse cx="8.8" cy="-17.2" rx="2.4" ry="1.6" fill="#a08040"/><ellipse cx="-10.4" cy="-27.2" rx="2.4" ry="1.6" fill="#a08040"/><ellipse cx="-7.4" cy="-10.2" rx="2.4" ry="1.6" fill="#a08040"/><ellipse cx="33.5" cy="-7.9" rx="2.4" ry="1.6" fill="#a08040"/><ellipse cx="-13.0" cy="-30.4" rx="2.4" ry="1.6" fill="#a08040"/><ellipse cx="31.5" cy="-20.0" rx="2.4" ry="1.6" fill="#a08040"/><ellipse cx="21.8" cy="-23.5" rx="2.4" ry="1.6" fill="#a08040"/><ellipse cx="6.3" cy="-18.6" rx="2.4" ry="1.6" fill="#a08040"/><ellipse cx="4.4" cy="-16.4" rx="2.4" ry="1.6" fill="#a08040"/><ellipse cx="-17.3" cy="-13.8" rx="2.4" ry="1.6" fill="#a08040"/><ellipse cx="25.9" cy="-27.3" rx="2.4" ry="1.6" fill="#a08040"/><ellipse cx="5.6" cy="-12.8" rx="2.4" ry="1.6" fill="#a08040"/><ellipse cx="3.1" cy="-26.9" rx="2.4" ry="1.6" fill="#a08040"/></g></g>
<g transform="translate(1798.7,995)" clip-path="url(#tc)"><rect x="-60" y="-60" width="120" height="120" fill="#cdcdcd"/><g transform="scale(1.3)"><g transform="translate(-26,-24) rotate(-45)"><path d="M-9,-4 H6 L10,0 L6,4 H-9Z" fill="none" stroke="#222" stroke-width="2.4"/><rect x="-9" y="-4" width="5" height="8" fill="#222"/></g><rect x="-16.6" y="14.0" width="2.7" height="3.1" fill="#111"/><rect x="-7.3" y="6.2" width="1.1" height="2.0" fill="#111"/><rect x="6.2" y="18.5" width="3.0" height="1.2" fill="#111"/><rect x="-12.6" y="23.0" width="2.2" height="2.3" fill="#111"/><rect x="0.3" y="22.4" width="1.6" height="3.0" fill="#111"/><rect x="-5.5" y="17.9" width="2.8" height="1.3" fill="#111"/><rect x="-9.5" y="19.5" width="1.0" height="2.9" fill="#111"/><rect x="-4.4" y="26.7" width="3.2" height="2.9" fill="#111"/><rect x="-11.6" y="39.3" width="2.2" height="2.5" fill="#111"/><rect x="0.0" y="38.0" width="2.5" height="3.1" fill="#111"/><rect x="-0.0" y="18.3" width="1.8" height="1.4" fill="#111"/><rect x="-4.0" y="24.0" width="1.7" height="2.3" fill="#111"/><rect x="7.5" y="22.2" width="1.7" height="1.7" fill="#111"/><rect x="-1.7" y="14.7" width="1.7" height="2.1" fill="#111"/><rect x="-6.9" y="19.7" width="3.1" height="1.1" fill="#111"/><rect x="-6.0" y="8.5" width="1.0" height="2.7" fill="#111"/><rect x="-13.9" y="28.9" width="1.0" height="1.1" fill="#111"/><rect x="3.4" y="37.8" width="1.4" height="2.7" fill="#111"/><rect x="13.4" y="14.9" width="1.8" height="1.8" fill="#111"/><rect x="-21.4" y="20.1" width="1.2" height="2.6" fill="#111"/><rect x="-0.8" y="8.7" width="1.1" height="3.1" fill="#111"/><rect x="0.9" y="25.5" width="2.3" height="3.0" fill="#111"/><rect x="-16.9" y="35.4" width="2.2" height="1.7" fill="#111"/><rect x="-8.3" y="26.0" width="1.2" height="1.3" fill="#111"/><rect x="-17.4" y="0.0" width="1.4" height="1.1" fill="#111"/><rect x="5.1" y="21.3" width="1.9" height="1.5" fill="#111"/><rect x="-20.0" y="14.7" width="2.0" height="1.9" fill="#111"/><rect x="12.8" y="27.3" width="1.1" height="2.1" fill="#111"/><rect x="-3.5" y="18.9" width="2.6" height="3.1" fill="#111"/><rect x="-16.8" y="13.0" width="1.2" height="2.0" fill="#111"/><rect x="4.3" y="32.9" width="1.6" height="2.0" fill="#111"/><rect x="11.6" y="21.9" width="3.1" height="2.0" fill="#111"/><rect x="-20.5" y="22.8" width="2.1" height="1.6" fill="#111"/><rect x="-10.2" y="24.2" width="1.8" height="3.2" fill="#111"/><rect x="6.2" y="19.5" width="2.1" height="1.7" fill="#111"/><rect x="0.1" y="25.0" width="2.7" height="2.9" fill="#111"/><rect x="-16.2" y="31.4" width="2.7" height="2.5" fill="#111"/><rect x="-13.8" y="11.9" width="1.8" height="2.5" fill="#111"/><rect x="-8.0" y="29.9" width="2.7" height="2.5" fill="#111"/><rect x="-11.9" y="38.3" width="2.4" height="2.3" fill="#111"/><rect x="5.3" y="22.6" width="1.6" height="2.5" fill="#111"/><rect x="-22.1" y="25.0" width="2.4" height="2.8" fill="#111"/><rect x="-13.5" y="30.2" width="2.6" height="2.8" fill="#111"/><rect x="-16.2" y="32.9" width="2.9" height="2.5" fill="#111"/><rect x="16.3" y="19.4" width="2.1" height="2.2" fill="#111"/><rect x="2.6" y="33.5" width="3.1" height="2.0" fill="#111"/><rect x="-11.2" y="11.6" width="2.6" height="1.4" fill="#111"/><rect x="-3.7" y="12.9" width="2.5" height="1.9" fill="#111"/><rect x="-17.1" y="13.5" width="2.4" height="2.6" fill="#111"/><rect x="-0.8" y="22.7" width="2.0" height="2.4" fill="#111"/><rect x="-3.4" y="32.5" width="2.4" height="1.1" fill="#111"/><rect x="-12.3" y="22.9" width="1.1" height="1.3" fill="#111"/><rect x="-8.3" y="26.0" width="1.4" height="1.1" fill="#111"/><rect x="-14.6" y="23.5" width="2.3" height="2.3" fill="#111"/><rect x="-4.5" y="37.1" width="1.0" height="1.9" fill="#111"/><rect x="-7.6" y="29.1" width="1.3" height="2.8" fill="#111"/><rect x="-7.7" y="23.4" width="2.3" height="1.2" fill="#111"/><rect x="-13.9" y="20.2" width="2.3" height="3.1" fill="#111"/><rect x="-2.1" y="15.4" width="2.8" height="2.4" fill="#111"/><rect x="-9.4" y="24.8" width="2.3" height="2.2" fill="#111"/><rect x="16.8" y="17.1" width="2.3" height="1.8" fill="#111"/><rect x="-5.7" y="21.8" width="1.2" height="2.2" fill="#111"/><rect x="-9.7" y="19.4" width="2.4" height="3.0" fill="#111"/><rect x="-12.8" y="27.2" width="1.5" height="1.6" fill="#111"/><rect x="2.7" y="20.8" width="3.1" height="3.0" fill="#111"/><rect x="-11.8" y="18.9" width="3.2" height="2.1" fill="#111"/><rect x="-12.8" y="25.1" width="3.2" height="2.1" fill="#111"/><rect x="-8.3" y="29.8" width="1.3" height="2.4" fill="#111"/><rect x="-13.0" y="24.0" width="2.7" height="2.8" fill="#111"/><rect x="5.1" y="22.7" width="1.6" height="3.1" fill="#111"/><rect x="-4.7" y="16.8" width="1.6" height="1.3" fill="#111"/><rect x="1.5" y="21.6" width="2.3" height="2.0" fill="#111"/><rect x="-13.5" y="14.5" width="2.6" height="1.3" fill="#111"/><rect x="-5.5" y="16.1" width="2.2" height="1.7" fill="#111"/><rect x="-9.2" y="30.2" width="2.0" height="1.8" fill="#111"/><rect x="-6.4" y="12.6" width="1.1" height="1.6" fill="#111"/><rect x="-25.3" y="26.3" width="3.0" height="2.2" fill="#111"/><rect x="9.6" y="23.1" width="1.9" height="2.3" fill="#111"/><rect x="-9.3" y="12.4" width="2.1" height="3.0" fill="#111"/><rect x="-12.8" y="26.6" width="2.9" height="1.4" fill="#111"/><rect x="-10.9" y="34.6" width="1.1" height="2.8" fill="#111"/><rect x="-9.3" y="15.0" width="1.6" height="2.7" fill="#111"/><rect x="-1.8" y="19.9" width="2.1" height="2.2" fill="#111"/><rect x="-14.1" y="22.1" width="1.3" height="2.3" fill="#111"/><rect x="-4.7" y="19.6" width="1.5" height="2.8" fill="#111"/><rect x="-2.6" y="12.0" width="1.1" height="2.6" fill="#111"/><rect x="25.9" y="18.7" width="2.5" height="1.1" fill="#111"/><rect x="-2.5" y="17.9" width="2.4" height="3.1" fill="#111"/><rect x="-7.1" y="18.3" width="1.6" height="3.0" fill="#111"/><rect x="1.3" y="29.8" width="1.9" height="1.4" fill="#111"/><rect x="-7.9" y="20.5" width="1.2" height="1.8" fill="#111"/><rect x="-3.2" y="23.1" width="2.3" height="2.6" fill="#111"/><rect x="-2.5" y="19.4" width="1.9" height="1.7" fill="#111"/><rect x="-14.4" y="17.2" width="3.1" height="1.8" fill="#111"/><rect x="7.1" y="25.7" width="1.3" height="2.4" fill="#111"/><rect x="-25.8" y="21.4" width="2.2" height="2.4" fill="#111"/><rect x="-6.9" y="30.8" width="1.6" height="2.7" fill="#111"/><rect x="-10.8" y="21.6" width="1.5" height="1.8" fill="#111"/><rect x="-6.5" y="17.6" width="2.6" height="2.4" fill="#111"/><rect x="5.5" y="27.3" width="1.2" height="1.3" fill="#111"/><rect x="-11.5" y="19.1" width="2.9" height="2.1" fill="#111"/><rect x="-13.1" y="33.2" width="1.1" height="2.6" fill="#111"/><rect x="-1.1" y="23.3" width="3.1" height="2.5" fill="#111"/><rect x="-5.2" y="25.4" width="3.1" height="2.5" fill="#111"/><rect x="-3.9" y="18.5" width="2.4" height="1.8" fill="#111"/><rect x="-5.2" y="28.3" width="2.4" height="1.8" fill="#111"/><rect x="-9.7" y="24.5" width="2.8" height="2.4" fill="#111"/><rect x="-2.8" y="15.0" width="2.9" height="2.1" fill="#111"/><rect x="-15.8" y="17.0" width="2.6" height="1.9" fill="#111"/><rect x="-4.1" y="23.0" width="1.4" height="1.1" fill="#111"/><rect x="1.9" y="16.9" width="2.7" height="1.0" fill="#111"/><rect x="-24.6" y="24.7" width="2.4" height="1.9" fill="#111"/><rect x="-10.0" y="22.7" width="1.3" height="1.3" fill="#111"/><rect x="-12.3" y="26.9" width="2.9" height="1.3" fill="#111"/><rect x="-6.2" y="27.6" width="1.4" height="1.6" fill="#111"/><rect x="-5.0" y="30.0" width="1.1" height="3.0" fill="#111"/><rect x="-20.4" y="34.1" width="2.5" height="2.5" fill="#111"/><rect x="-27.4" y="25.0" width="1.3" height="2.5" fill="#111"/><rect x="-9.4" y="32.1" width="2.6" height="1.4" fill="#111"/><rect x="-5.4" y="23.5" width="1.5" height="1.2" fill="#111"/><rect x="-25.7" y="33.0" width="1.8" height="1.7" fill="#111"/><rect x="-13.2" y="23.1" width="2.6" height="2.6" fill="#111"/><rect x="-2.5" y="26.4" width="2.5" height="3.1" fill="#111"/><rect x="-11.8" y="16.1" width="3.1" height="1.0" fill="#111"/><rect x="8.5" y="26.5" width="1.9" height="1.1" fill="#111"/><rect x="-31.9" y="15.7" width="2.1" height="1.8" fill="#111"/><rect x="-3.1" y="23.5" width="3.0" height="2.1" fill="#111"/><rect x="-3.2" y="21.1" width="1.5" height="1.1" fill="#111"/><rect x="-8.5" y="23.5" width="1.6" height="1.9" fill="#111"/><rect x="-7.0" y="24.1" width="1.1" height="3.1" fill="#111"/><rect x="-1.4" y="29.5" width="1.9" height="2.2" fill="#111"/><rect x="0.7" y="25.1" width="1.2" height="2.2" fill="#111"/><rect x="4.7" y="17.5" width="2.9" height="1.5" fill="#111"/><rect x="5.1" y="23.0" width="2.1" height="2.3" fill="#111"/><rect x="-15.0" y="28.9" width="2.6" height="3.0" fill="#111"/><rect x="-9.5" y="29.1" width="2.8" height="1.5" fill="#111"/><rect x="-0.2" y="26.0" width="1.2" height="2.7" fill="#111"/><rect x="-2.7" y="16.5" width="1.3" height="1.2" fill="#111"/><rect x="-5.9" y="24.9" width="1.9" height="2.3" fill="#111"/><rect x="-5.9" y="24.5" width="2.5" height="1.1" fill="#111"/><rect x="-3.7" y="27.5" width="1.8" height="1.2" fill="#111"/><rect x="-12.9" y="24.9" width="2.7" height="2.2" fill="#111"/><rect x="4.4" y="15.8" width="2.7" height="2.3" fill="#111"/><rect x="-21.5" y="26.6" width="2.4" height="3.1" fill="#111"/><rect x="-7.9" y="11.2" width="1.6" height="2.8" fill="#111"/><rect x="-9.5" y="24.5" width="1.1" height="1.4" fill="#111"/><rect x="-7.1" y="32.5" width="1.6" height="1.1" fill="#111"/><rect x="-5.0" y="13.1" width="1.1" height="1.1" fill="#111"/><rect x="-0.2" y="26.8" width="2.9" height="3.1" fill="#111"/><rect x="-11.0" y="18.7" width="1.9" height="1.8" fill="#111"/><rect x="-6.7" y="23.0" width="2.3" height="2.8" fill="#111"/><rect x="-6.6" y="18.9" width="2.2" height="1.4" fill="#111"/><rect x="-8.5" y="14.6" width="3.1" height="2.7" fill="#111"/><rect x="-0.2" y="26.1" width="3.0" height="2.0" fill="#111"/><rect x="-14.9" y="25.0" width="2.7" height="3.1" fill="#111"/><rect x="-29.3" y="18.2" width="2.3" height="1.2" fill="#111"/><rect x="-2.3" y="15.3" width="1.1" height="3.2" fill="#111"/><rect x="5.6" y="23.9" width="2.1" height="2.9" fill="#111"/><rect x="-10.9" y="25.0" width="1.6" height="1.4" fill="#111"/><rect x="-13.8" y="19.5" width="2.7" height="1.5" fill="#111"/><rect x="-10.1" y="26.2" width="3.2" height="2.8" fill="#111"/><rect x="1.3" y="14.1" width="1.9" height="1.3" fill="#111"/><rect x="-0.9" y="14.9" width="1.1" height="1.4" fill="#111"/><rect x="5.6" y="28.5" width="3.0" height="1.4" fill="#111"/><rect x="-3.7" y="16.1" width="2.5" height="2.9" fill="#111"/><rect x="-17.6" y="13.2" width="1.8" height="1.0" fill="#111"/><rect x="-17.9" y="21.3" width="1.4" height="1.9" fill="#111"/><rect x="-6.9" y="23.5" width="1.7" height="1.8" fill="#111"/><rect x="-19.9" y="23.6" width="1.9" height="3.2" fill="#111"/><rect x="2.2" y="7.4" width="2.5" height="2.5" fill="#111"/><path d="M14.7,-0.7 L37.7,-24.4 L26.3,-35.6 L3.2,-11.9Z" fill="#cfc6de"/><path d="M13.2,-7.1 L36.2,-30.8 L32.8,-34.2 L9.7,-10.5Z" fill="#f6f6fa" opacity="0.85"/><path d="M7.2,-2.1 L30.3,-25.8 L27.7,-28.2 L4.7,-4.5Z" fill="#6a5a88" opacity="0.5"/><path d="M24.3,-9.9 L27.3,-12.9 L15.3,-25.0 L12.3,-22.0Z" fill="#e8e8ee"/><path d="M2.5,13.3 L15.8,0.3 L2.2,-12.9 L-10.5,0.7Z" fill="#c8bc8a"/><circle cx="-4.0" cy="7.0" r="8.9" fill="#c8bc8a"/><path d="M-0.3,6.7 L11.7,-5.7 L8.3,-9.0 L-3.7,3.3Z" fill="#fff" opacity="0.18"/></g></g>
<g transform="translate(1908.3,995)" clip-path="url(#tc)"><rect x="-60" y="-60" width="120" height="120" fill="#cdcdcd"/><g transform="scale(1.3)"><g transform="translate(-26,-24) rotate(-45)"><path d="M-9,-4 H6 L10,0 L6,4 H-9Z" fill="none" stroke="#222" stroke-width="2.4"/><rect x="-9" y="-4" width="5" height="8" fill="#222"/></g><path d="M-30.0,8.0 Q-6,2.0 30,14.0" fill="none" stroke="#151515" stroke-width="1.6" stroke-dasharray="5.9 1.2"/><path d="M-28.5,11.6 Q-6,6.5 30,16.6" fill="none" stroke="#151515" stroke-width="2.1" stroke-dasharray="3.3 1.4"/><path d="M-27.0,15.2 Q-6,11.0 30,19.2" fill="none" stroke="#151515" stroke-width="2.4" stroke-dasharray="3.6 2.0"/><path d="M-25.5,18.8 Q-6,15.5 30,21.8" fill="none" stroke="#151515" stroke-width="1.9" stroke-dasharray="4.4 1.7"/><path d="M-24.0,22.4 Q-6,20.0 30,24.4" fill="none" stroke="#151515" stroke-width="1.6" stroke-dasharray="5.5 1.1"/><path d="M-22.5,26.0 Q-6,24.5 30,27.0" fill="none" stroke="#151515" stroke-width="1.6" stroke-dasharray="3.1 1.4"/><path d="M-21.0,29.6 Q-6,29.0 30,29.6" fill="none" stroke="#151515" stroke-width="1.8" stroke-dasharray="5.7 1.6"/><path d="M15.0,-2.4 L36.8,-22.9 L27.2,-33.1 L5.4,-12.6Z" fill="#cfc6de"/><path d="M14.2,-8.5 L35.9,-29.0 L33.1,-32.0 L11.3,-11.5Z" fill="#f6f6fa" opacity="0.85"/><path d="M8.3,-3.4 L30.1,-23.9 L27.9,-26.1 L6.2,-5.6Z" fill="#6a5a88" opacity="0.5"/><path d="M24.4,-10.5 L27.4,-13.5 L16.8,-24.1 L13.8,-21.1Z" fill="#e8e8ee"/><path d="M2.9,9.2 L15.4,-2.1 L5.1,-13.0 L-6.9,-1.2Z" fill="#c8bc8a"/><circle cx="-2.0" cy="4.0" r="7.0" fill="#c8bc8a"/><path d="M1.3,3.4 L12.5,-7.2 L10.0,-9.9 L-1.3,0.6Z" fill="#fff" opacity="0.18"/></g></g>
<g transform="translate(1798.7,1104)" clip-path="url(#tc)"><rect x="-60" y="-60" width="120" height="120" fill="#cdcdcd"/><g transform="scale(1.3)"><g transform="translate(-26,-24) rotate(-45)"><path d="M-9,-4 H6 L10,0 L6,4 H-9Z" fill="none" stroke="#222" stroke-width="2.4"/><rect x="-9" y="-4" width="5" height="8" fill="#222"/></g><path d="M-16,16 Q-22,34 -4,34 Q8,33 14,30" fill="none" stroke="#ffffff" stroke-width="10" stroke-linecap="round" opacity="0.9" filter="url(#blur1)"/><path d="M-14,18 Q-16,26 -8,28" fill="none" stroke="#e0e0e0" stroke-width="3"/><path d="M-1.4,7.9 L31.4,-11.5 L20.6,-24.5 L-4.6,4.1Z" fill="#eeeeee" stroke="#9a9a9a" stroke-width="1"/><path d="M31.6,-11.6 L49.6,-27.6 L38.4,-40.4 L20.4,-24.4Z" fill="#e4e4e4" stroke="#9a9a9a" stroke-width="1"/><path d="M5,-4 Q8,2 12,-2 M12,-10 Q16,-3 20,-8 M19,-16 Q23,-9 27,-14" fill="none" stroke="#a8a8a8" stroke-width="1.6"/><path d="M2.8,1.0 L34.8,-25.0 L33.2,-27.0 L1.2,-1.0Z" fill="#fff"/><path d="M-18,-20 Q-14,-14 -15,-11 Q-18,-8 -21,-11 Q-22,-14 -18,-20Z" fill="#4aa8f0"/><path d="M-23,-23 Q-21,-20 -21,-19 Q-23,-18 -24,-19Z" fill="#4aa8f0"/></g></g>
<g transform="translate(1908.3,1104)" clip-path="url(#tc)"><rect x="-60" y="-60" width="120" height="120" fill="#4a6d94"/><rect x="-48" y="-48" width="100" height="96" fill="#7fb0d8"/><ellipse cx="-10" cy="18" rx="22" ry="16" fill="#a8dcf8" filter="url(#blur3)"/><path d="M-20,10 Q0,-30 40,-40 L40,0 Q10,10 -20,10Z" fill="#90c8ec"/><g transform="translate(-26,-24) rotate(-45)"><path d="M-9,-4 H6 L10,0 L6,4 H-9Z" fill="none" stroke="#222" stroke-width="2.4"/><rect x="-9" y="-4" width="5" height="8" fill="#222"/></g><path d="M-10,-20 Q-6,-14 -7,-11 Q-10,-8 -13,-11 Q-14,-14 -10,-20Z" fill="#4aa8f0"/><path d="M-15,-23 Q-13,-20 -13,-19 Q-15,-18 -16,-19Z" fill="#4aa8f0"/></g>
<g transform="translate(1798.7,1212)" clip-path="url(#tc)"><rect x="-60" y="-60" width="120" height="120" fill="#cdcdcd"/><g transform="scale(1.3)"><ellipse cx="-20" cy="22" rx="22" ry="19" fill="#a8dcf4" filter="url(#blur2)"/><path d="M-4,-14 L20,-38 L50,-8 L26,16 Z" fill="#3c3c3c"/><path d="M-4,-14 L26,16 L24,22 L-8,-10 Z" fill="#262626"/><path d="M-4,-14 L20,-38 L24,-36 L0,-12Z" fill="#555"/><circle cx="-2" cy="8" r="7.5" fill="#7a98ac" stroke="#1e1e1e" stroke-width="2.2"/><circle cx="-3" cy="6" r="1.5" fill="#d8e8f0"/><circle cx="0" cy="9" r="1.5" fill="#d8e8f0"/><circle cx="-22" cy="-16" r="3" fill="#8a8a8a"/><line x1="-20" y1="-18" x2="-13" y2="-25" stroke="#8a8a8a" stroke-width="1.6"/></g></g>
<g transform="translate(1908.3,1212)" clip-path="url(#tc)"><rect x="-60" y="-60" width="120" height="120" fill="#cdcdcd"/><g transform="scale(1.3)"><g transform="translate(-26,-24) rotate(-45)"><path d="M-9,-4 H6 L10,0 L6,4 H-9Z" fill="none" stroke="#222" stroke-width="2.4"/><rect x="-9" y="-4" width="5" height="8" fill="#222"/></g><ellipse cx="-20" cy="16" rx="20" ry="18" fill="#3a0808" opacity="0.95" filter="url(#blur3)"/><line x1="8" y1="-8" x2="30" y2="-30" stroke="#222" stroke-width="3.5"/><circle cx="2" cy="-2" r="12.5" fill="#505048" stroke="#333" stroke-width="1"/><circle cx="-22" cy="-20" r="2.6" fill="#8a8a8a"/><line x1="-20" y1="-21" x2="-14" y2="-25" stroke="#8a8a8a" stroke-width="1.5"/></g></g>
<g transform="translate(1798.7,1320)" clip-path="url(#tc)"><rect x="-60" y="-60" width="120" height="120" fill="#cdcdcd"/><g transform="scale(1.3)"><rect x="-60" y="-60" width="120" height="120" fill="#fafafa"/><line x1="-24.0" y1="-30" x2="-18.0" y2="-33" stroke="#111" stroke-width="1.0"/><line x1="-20.9" y1="-28" x2="-14.9" y2="-32" stroke="#111" stroke-width="1.6"/><line x1="-17.8" y1="-26" x2="-11.8" y2="-31" stroke="#111" stroke-width="2.2"/><line x1="-14.7" y1="-29" x2="-8.7" y2="-30" stroke="#111" stroke-width="1.0"/><line x1="-11.6" y1="-27" x2="-5.6" y2="-33" stroke="#111" stroke-width="1.6"/><line x1="-8.5" y1="-30" x2="-2.5" y2="-32" stroke="#111" stroke-width="2.2"/><line x1="-5.4" y1="-28" x2="0.6" y2="-31" stroke="#111" stroke-width="1.0"/><line x1="-2.3" y1="-26" x2="3.7" y2="-30" stroke="#111" stroke-width="1.6"/><line x1="0.8" y1="-29" x2="6.8" y2="-33" stroke="#111" stroke-width="2.2"/><line x1="3.9" y1="-27" x2="9.9" y2="-32" stroke="#111" stroke-width="1.0"/><line x1="7.0" y1="-30" x2="13.0" y2="-31" stroke="#111" stroke-width="1.6"/><line x1="10.1" y1="-28" x2="16.1" y2="-30" stroke="#111" stroke-width="2.2"/><line x1="13.2" y1="-26" x2="19.2" y2="-33" stroke="#111" stroke-width="1.0"/><line x1="16.3" y1="-29" x2="22.3" y2="-32" stroke="#111" stroke-width="1.6"/><line x1="19.4" y1="-27" x2="25.4" y2="-31" stroke="#111" stroke-width="2.2"/><line x1="22.5" y1="-30" x2="28.5" y2="-30" stroke="#111" stroke-width="1.0"/></g></g>
<g transform="translate(1908.3,1320)" clip-path="url(#tc)"><rect x="-60" y="-60" width="120" height="120" fill="#cdcdcd"/><g transform="scale(1.3)"><circle cx="34" cy="-8" r="14" fill="#c03838" stroke="#335" stroke-width="2"/></g></g>
</g></svg>


<!-- ===== ANNOTATIONS + small button icons ===== -->
<svg class="a" style="left:0;top:0" width="1920" height="1289" viewBox="0 0 1920 1289">
 <g fill="none" stroke="#dcdcdc" stroke-width="2.6">
  <path d="M667,922 A10.5,10.5 0 0 1 684,923"/><path d="M687,940 A10.5,10.5 0 0 1 670,939"/>
  <path d="M1242,868 L1230,880.5 L1242,893" stroke-width="3.2"/>
  <path d="M1187,937 L1199.5,924.5 L1212,937" stroke-width="3.2"/>
 </g>
 <path d="M663,929 L667,919 L673,925Z M691,933 L687,943 L681,937Z" fill="#dcdcdc"/>
 <path d="M615.5,869.5 H627 L637,879.5 L627,889.5 L615.5,878Z" fill="#dcdcdc" transform="rotate(8 626 880)"/>
 <circle cx="621.8" cy="875.2" r="2.4" fill="#474747"/>
 <g fill="none" stroke="#e01c1c" stroke-linecap="round">
  <path d="M164.6,533 C190,495 260,474 334,476 C420,478 505,520 533,590 C555,650 535,740 505,796 C470,860 400,902 341,901 C280,900 220,850 185,790 C150,730 130,660 136,620 C140,590 158,562 190,549 C205,544 215,542 224,541" stroke-width="3.6"/>
  <path d="M1381,245 C1420,222 1480,214 1543,219 C1620,226 1700,270 1730,350 C1752,410 1745,500 1705,566 C1660,640 1570,684 1496,683 C1440,682 1400,640 1370,600 C1330,545 1306,480 1308,435 C1310,370 1330,300 1360,262 C1380,235 1400,216 1421,210 C1435,207 1443,215 1446,225" stroke-width="2.6"/>
 </g>
</svg>

</body></html>
